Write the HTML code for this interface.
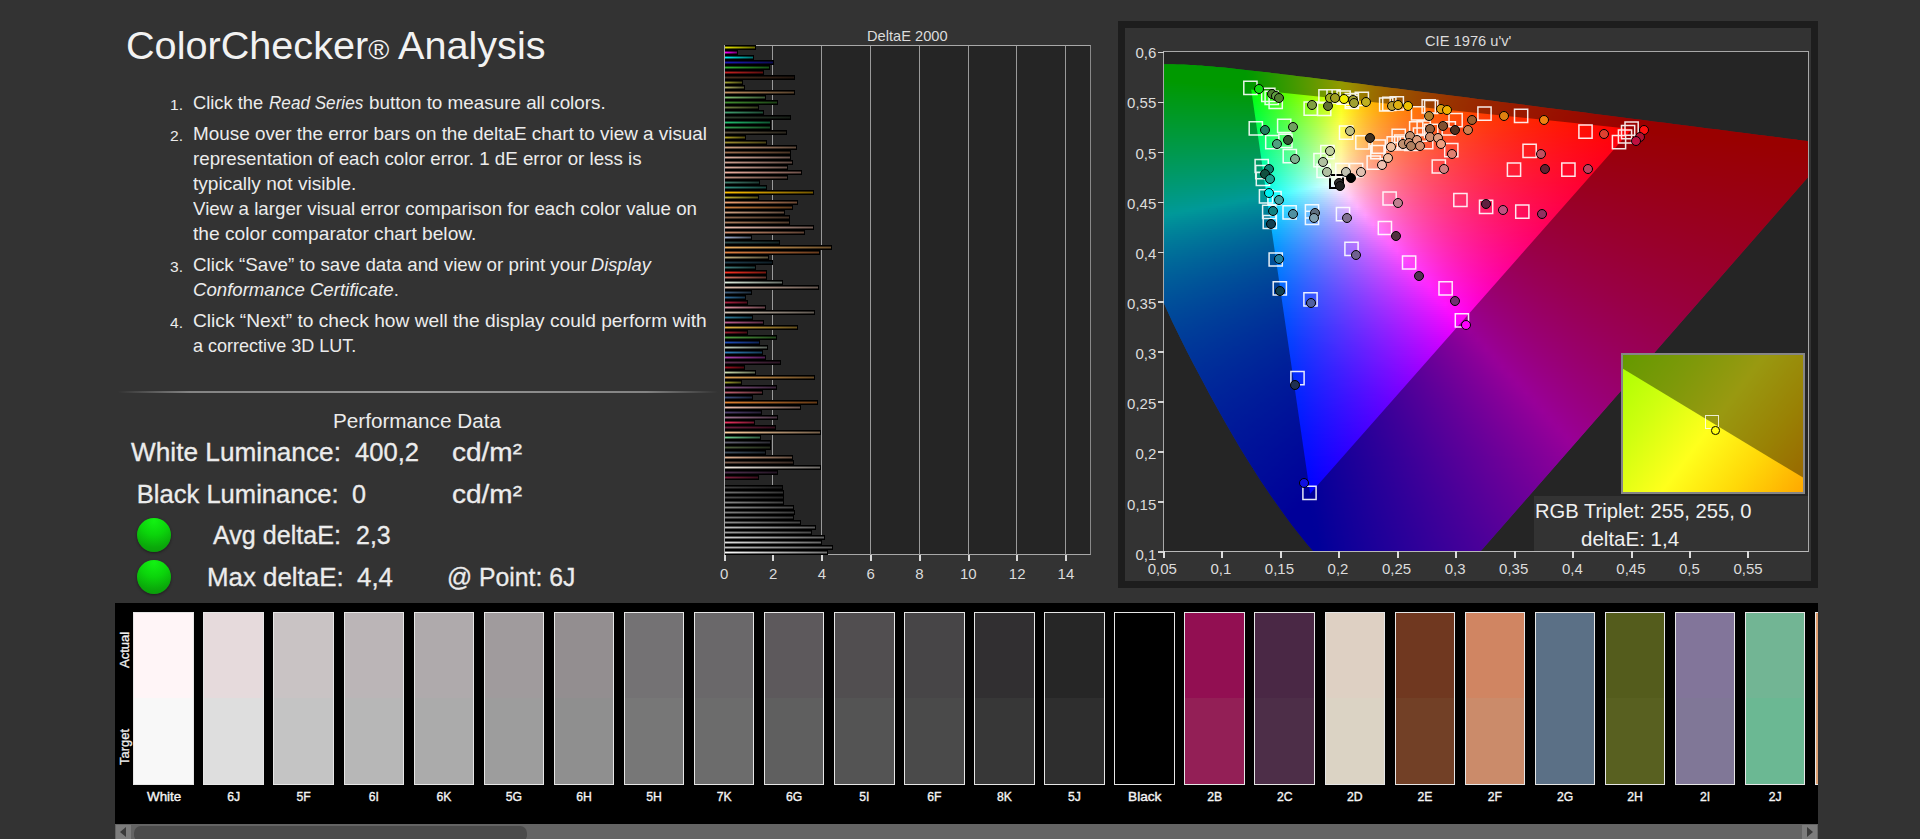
<!DOCTYPE html>
<html><head><meta charset="utf-8"><title>ColorChecker Analysis</title>
<style>
html,body{margin:0;padding:0}
body{width:1920px;height:839px;overflow:hidden;background:#333;position:relative;font-family:"Liberation Sans",sans-serif}
.t{position:absolute;white-space:nowrap;line-height:1;transform-origin:0 0}
.a{position:absolute}
small{font-size:72%}
.b{position:absolute;left:1px;height:5px;box-sizing:border-box;border-right:1px solid #000;background:linear-gradient(180deg,#000 18%,transparent 46%,transparent 54%,#000 84%),linear-gradient(90deg,transparent,rgba(0,0,0,.55)) currentColor}
.r{position:absolute;left:0;width:644px}
.sq{position:absolute;width:11px;height:11px;border:2px solid rgba(255,255,255,.82)}
.c{position:absolute;width:8px;height:8px;border:1px solid #000;border-radius:50%}
.sw{position:absolute;top:612px;width:58.6px;height:171px;border:1px solid #e6e6e6}
.sw i{position:absolute;left:0;top:0;width:100%;height:85px}
.g{position:absolute;top:0;width:1px;height:509px;background:#9a9a9a}
</style></head><body>

<div class="t" style="left:125.6px;top:26.9px;font-size:38.5px;color:#f2f2f2;transform:scaleX(1.0289);">ColorChecker<small>®</small> Analysis</div>
<div class="t" style="left:193.0px;top:94.8px;font-size:17.7px;color:#ececec;transform:scaleX(1.0343);">Click the</div>
<div class="t" style="left:268.6px;top:94.8px;font-size:17.7px;color:#ececec;transform:scaleX(0.9681);"><i>Read Series</i></div>
<div class="t" style="left:368.9px;top:94.8px;font-size:17.7px;color:#ececec;transform:scaleX(1.0654);">button to measure all colors.</div>
<div class="t" style="left:193.0px;top:125.8px;font-size:17.7px;color:#ececec;transform:scaleX(1.0671);">Mouse over the error bars on the deltaE chart to view a visual</div>
<div class="t" style="left:193.0px;top:150.8px;font-size:17.7px;color:#ececec;transform:scaleX(1.0585);">representation of each color error. 1 dE error or less is</div>
<div class="t" style="left:193.0px;top:175.8px;font-size:17.7px;color:#ececec;transform:scaleX(1.0786);">typically not visible.</div>
<div class="t" style="left:193.0px;top:200.8px;font-size:17.7px;color:#ececec;transform:scaleX(1.0600);">View a larger visual error comparison for each color value on</div>
<div class="t" style="left:193.0px;top:225.8px;font-size:17.7px;color:#ececec;transform:scaleX(1.0837);">the color comparator chart below.</div>
<div class="t" style="left:193.0px;top:256.8px;font-size:17.7px;color:#ececec;transform:scaleX(1.0629);">Click “Save” to save data and view or print your</div>
<div class="t" style="left:591.0px;top:256.8px;font-size:17.7px;color:#ececec;transform:scaleX(1.0304);"><i>Display</i></div>
<div class="t" style="left:193.0px;top:281.8px;font-size:17.7px;color:#ececec;transform:scaleX(1.0523);"><i>Conformance Certificate</i>.</div>
<div class="t" style="left:193.0px;top:312.8px;font-size:17.7px;color:#ececec;transform:scaleX(1.0841);">Click “Next” to check how well the display could perform with</div>
<div class="t" style="left:193.0px;top:337.8px;font-size:17.7px;color:#ececec;transform:scaleX(1.0191);">a corrective 3D LUT.</div>
<div class="t" style="left:169.8px;top:96.7px;font-size:15.5px;color:#ececec;transform:scaleX(1.0057);">1.</div>
<div class="t" style="left:169.8px;top:127.7px;font-size:15.5px;color:#ececec;transform:scaleX(1.0057);">2.</div>
<div class="t" style="left:169.8px;top:258.7px;font-size:15.5px;color:#ececec;transform:scaleX(1.0057);">3.</div>
<div class="t" style="left:169.8px;top:314.7px;font-size:15.5px;color:#ececec;transform:scaleX(1.0057);">4.</div>
<div class="a" style="left:118px;top:391px;width:600px;height:2px;background:linear-gradient(90deg,rgba(140,140,140,0),rgba(140,140,140,.9) 12%,rgba(150,150,150,1) 50%,rgba(140,140,140,.9) 88%,rgba(140,140,140,0))"></div>
<div class="t" style="left:332.7px;top:411.9px;font-size:19.6px;color:#ececec;transform:scaleX(1.0563);">Performance Data</div>
<div class="t" style="left:130.7px;top:440.1px;font-size:25.6px;color:#ececec;transform:scaleX(1.0249);-webkit-text-stroke:.3px #ececec;">White Luminance:</div>
<div class="t" style="left:355.0px;top:440.1px;font-size:25.6px;color:#ececec;-webkit-text-stroke:.3px #ececec;">400,2</div>
<div class="t" style="left:452.3px;top:440.1px;font-size:25.6px;color:#ececec;transform:scaleX(1.0937);-webkit-text-stroke:.3px #ececec;">cd/m²</div>
<div class="t" style="left:136.7px;top:481.8px;font-size:25.6px;color:#ececec;-webkit-text-stroke:.3px #ececec;">Black Luminance:</div>
<div class="t" style="left:351.7px;top:481.8px;font-size:25.6px;color:#ececec;transform:scaleX(0.9833);-webkit-text-stroke:.3px #ececec;">0</div>
<div class="t" style="left:452.3px;top:481.8px;font-size:25.6px;color:#ececec;transform:scaleX(1.0937);-webkit-text-stroke:.3px #ececec;">cd/m²</div>
<div class="t" style="left:212.7px;top:523.4px;font-size:25.6px;color:#ececec;transform:scaleX(0.9811);-webkit-text-stroke:.3px #ececec;">Avg deltaE:</div>
<div class="t" style="left:356.0px;top:523.4px;font-size:25.6px;color:#ececec;transform:scaleX(0.9751);-webkit-text-stroke:.3px #ececec;">2,3</div>
<div class="t" style="left:206.7px;top:565.1px;font-size:25.6px;color:#ececec;transform:scaleX(1.0105);-webkit-text-stroke:.3px #ececec;">Max deltaE:</div>
<div class="t" style="left:356.7px;top:565.1px;font-size:25.6px;color:#ececec;transform:scaleX(1.0116);-webkit-text-stroke:.3px #ececec;">4,4</div>
<div class="t" style="left:446.7px;top:565.1px;font-size:25.6px;color:#ececec;transform:scaleX(0.9667);-webkit-text-stroke:.3px #ececec;">@ Point: 6J</div>
<div class="a" style="left:136.7px;top:518.2px;width:34.3px;height:34.3px;border-radius:50%;background:radial-gradient(circle at 50% 8%,#12f212 0,#0bd40b 40%,#0aa80a 75%,#0a960a 100%);box-shadow:0 1px 3px rgba(0,0,0,.45)"></div>
<div class="a" style="left:136.7px;top:560.0px;width:34.3px;height:34.3px;border-radius:50%;background:radial-gradient(circle at 50% 8%,#12f212 0,#0bd40b 40%,#0aa80a 75%,#0a960a 100%);box-shadow:0 1px 3px rgba(0,0,0,.45)"></div>
<div class="t" style="left:867.4px;top:29.2px;font-size:14.6px;color:#dcdcdc;transform:scaleX(1.0030);">DeltaE 2000</div>
<div class="a" style="left:724px;top:45px;width:365px;height:508px;background:#252525;border:1px solid #a8a8a8;border-right-color:#8a8a8a"></div>
<div class="a" style="left:724px;top:46px;width:367px;height:509px">
<i class="g" style="left:48.3px"></i>
<i class="g" style="left:97.1px"></i>
<i class="g" style="left:145.9px"></i>
<i class="g" style="left:194.7px"></i>
<i class="g" style="left:243.5px"></i>
<i class="g" style="left:292.3px"></i>
<i class="g" style="left:341.1px"></i>
<i class="b" style="top:-1.2px;width:31.4px;color:#e6e600"></i>
<i class="b" style="top:3.8px;width:13.3px;color:#ff00ff"></i>
<i class="b" style="top:8.8px;width:29.2px;color:#00f0f0"></i>
<i class="b" style="top:13.8px;width:48.7px;color:#1a1ab8"></i>
<i class="b" style="top:18.8px;width:44.5px;color:#30b030"></i>
<i class="b" style="top:23.8px;width:38.7px;color:#c82020"></i>
<i class="b" style="top:28.8px;width:69.7px;color:#4a3020"></i>
<i class="b" style="top:33.8px;width:17.5px;color:#a0a030"></i>
<i class="b" style="top:38.8px;width:19.5px;color:#b0b060"></i>
<i class="b" style="top:43.8px;width:69.7px;color:#c09060"></i>
<i class="b" style="top:48.8px;width:40.5px;color:#80c070"></i>
<i class="b" style="top:53.8px;width:52.7px;color:#409030"></i>
<i class="b" style="top:58.8px;width:33.7px;color:#708040"></i>
<i class="b" style="top:63.8px;width:38.7px;color:#40a070"></i>
<i class="b" style="top:68.8px;width:65.7px;color:#304030"></i>
<i class="b" style="top:73.8px;width:45.5px;color:#20c070"></i>
<i class="b" style="top:78.8px;width:45.5px;color:#30a050"></i>
<i class="b" style="top:83.8px;width:61.7px;color:#605540"></i>
<i class="b" style="top:88.8px;width:20.5px;color:#b0a020"></i>
<i class="b" style="top:93.8px;width:41.7px;color:#a09030"></i>
<i class="b" style="top:98.8px;width:71.7px;color:#d0a080"></i>
<i class="b" style="top:103.8px;width:65.7px;color:#a07050"></i>
<i class="b" style="top:108.8px;width:65.7px;color:#e0b0a0"></i>
<i class="b" style="top:113.8px;width:67.7px;color:#d0a090"></i>
<i class="b" style="top:118.8px;width:62.7px;color:#e0b0a0"></i>
<i class="b" style="top:123.8px;width:76.7px;color:#f0b0a0"></i>
<i class="b" style="top:128.8px;width:62.7px;color:#c09080"></i>
<i class="b" style="top:133.8px;width:34.7px;color:#408070"></i>
<i class="b" style="top:138.8px;width:41.7px;color:#309080"></i>
<i class="b" style="top:143.8px;width:88.8px;color:#ffc000"></i>
<i class="b" style="top:148.8px;width:33.7px;color:#c0b030"></i>
<i class="b" style="top:153.8px;width:72.6px;color:#f0a070"></i>
<i class="b" style="top:158.8px;width:68.4px;color:#d08040"></i>
<i class="b" style="top:163.8px;width:59.7px;color:#d0a080"></i>
<i class="b" style="top:168.8px;width:64.6px;color:#906a50"></i>
<i class="b" style="top:173.8px;width:64.6px;color:#b08060"></i>
<i class="b" style="top:178.8px;width:88.8px;color:#f0c0b0"></i>
<i class="b" style="top:183.8px;width:79.6px;color:#d09070"></i>
<i class="b" style="top:188.8px;width:26.7px;color:#a0b0d0"></i>
<i class="b" style="top:193.8px;width:54.7px;color:#305050"></i>
<i class="b" style="top:198.8px;width:106.8px;color:#f0b060"></i>
<i class="b" style="top:203.8px;width:95.4px;color:#e08040"></i>
<i class="b" style="top:208.8px;width:43.7px;color:#c0b080"></i>
<i class="b" style="top:213.8px;width:47.5px;color:#204050"></i>
<i class="b" style="top:218.8px;width:30.5px;color:#408080"></i>
<i class="b" style="top:223.8px;width:41.7px;color:#ff3020"></i>
<i class="b" style="top:228.8px;width:41.7px;color:#d07060"></i>
<i class="b" style="top:233.8px;width:57.6px;color:#e0f0e0"></i>
<i class="b" style="top:238.8px;width:93.8px;color:#e0c0b0"></i>
<i class="b" style="top:243.8px;width:26.7px;color:#406080"></i>
<i class="b" style="top:248.8px;width:20.9px;color:#3070a0"></i>
<i class="b" style="top:253.8px;width:22.5px;color:#b02040"></i>
<i class="b" style="top:258.8px;width:40.5px;color:#e090a0"></i>
<i class="b" style="top:263.8px;width:89.8px;color:#d0c0b0"></i>
<i class="b" style="top:268.8px;width:27.5px;color:#3080a0"></i>
<i class="b" style="top:273.8px;width:38.7px;color:#c06090"></i>
<i class="b" style="top:278.8px;width:72.6px;color:#e0b040"></i>
<i class="b" style="top:283.8px;width:22.5px;color:#a02030"></i>
<i class="b" style="top:288.8px;width:51.7px;color:#50a040"></i>
<i class="b" style="top:293.8px;width:34.7px;color:#2050c0"></i>
<i class="b" style="top:298.8px;width:43.4px;color:#c0d0c0"></i>
<i class="b" style="top:303.8px;width:37.9px;color:#3080c0"></i>
<i class="b" style="top:308.8px;width:40.5px;color:#b040b0"></i>
<i class="b" style="top:313.8px;width:55.6px;color:#603050"></i>
<i class="b" style="top:318.8px;width:19.5px;color:#a01020"></i>
<i class="b" style="top:323.8px;width:31.4px;color:#d0e0b0"></i>
<i class="b" style="top:328.8px;width:89.8px;color:#e0a050"></i>
<i class="b" style="top:333.8px;width:16.7px;color:#a0a030"></i>
<i class="b" style="top:338.8px;width:51.7px;color:#805080"></i>
<i class="b" style="top:343.8px;width:37.5px;color:#c06070"></i>
<i class="b" style="top:348.8px;width:27.5px;color:#405080"></i>
<i class="b" style="top:353.8px;width:92.6px;color:#e08030"></i>
<i class="b" style="top:358.8px;width:75.6px;color:#f0c0b0"></i>
<i class="b" style="top:363.8px;width:36.7px;color:#504070"></i>
<i class="b" style="top:368.8px;width:52.6px;color:#a07090"></i>
<i class="b" style="top:373.8px;width:29.5px;color:#f03060"></i>
<i class="b" style="top:378.8px;width:50.6px;color:#702040"></i>
<i class="b" style="top:383.8px;width:95.6px;color:#ffd0a0"></i>
<i class="b" style="top:388.8px;width:35.9px;color:#70d090"></i>
<i class="b" style="top:393.8px;width:45.5px;color:#606070"></i>
<i class="b" style="top:398.8px;width:45.5px;color:#506040"></i>
<i class="b" style="top:403.8px;width:40.5px;color:#405060"></i>
<i class="b" style="top:408.8px;width:67.6px;color:#e0b090"></i>
<i class="b" style="top:413.8px;width:68.7px;color:#806050"></i>
<i class="b" style="top:418.8px;width:95.6px;color:#f0e8e0"></i>
<i class="b" style="top:423.8px;width:53.1px;color:#503050"></i>
<i class="b" style="top:428.8px;width:33.7px;color:#802040"></i>
<i class="b" style="top:438.8px;width:57.9px;color:#404040"></i>
<i class="b" style="top:443.8px;width:58.7px;color:#707070"></i>
<i class="b" style="top:448.8px;width:58.7px;color:#505050"></i>
<i class="b" style="top:453.8px;width:58.7px;color:#888888"></i>
<i class="b" style="top:458.8px;width:68.7px;color:#909090"></i>
<i class="b" style="top:463.8px;width:69.7px;color:#808080"></i>
<i class="b" style="top:468.8px;width:68.7px;color:#808080"></i>
<i class="b" style="top:473.8px;width:75.6px;color:#909090"></i>
<i class="b" style="top:478.8px;width:90.6px;color:#c0c0c0"></i>
<i class="b" style="top:483.8px;width:86.8px;color:#a0a0a0"></i>
<i class="b" style="top:488.8px;width:99.6px;color:#d0d0d0"></i>
<i class="b" style="top:493.8px;width:96.8px;color:#e0e0e0"></i>
<i class="b" style="top:498.8px;width:107.8px;color:#c0c0c0"></i>
<i class="b" style="top:503.8px;width:102.6px;color:#ffffff"></i>
</div>
<div class="a" style="left:723.5px;top:555px;width:2px;height:6px;background:#d8d8d8"></div>
<div class="t" style="left:720.1px;top:565.5px;font-size:15px;color:#dcdcdc;">0</div>
<div class="a" style="left:772.3px;top:555px;width:2px;height:6px;background:#d8d8d8"></div>
<div class="t" style="left:768.9px;top:565.5px;font-size:15px;color:#dcdcdc;">2</div>
<div class="a" style="left:821.1px;top:555px;width:2px;height:6px;background:#d8d8d8"></div>
<div class="t" style="left:817.7px;top:565.5px;font-size:15px;color:#dcdcdc;">4</div>
<div class="a" style="left:869.9px;top:555px;width:2px;height:6px;background:#d8d8d8"></div>
<div class="t" style="left:866.5px;top:565.5px;font-size:15px;color:#dcdcdc;">6</div>
<div class="a" style="left:918.7px;top:555px;width:2px;height:6px;background:#d8d8d8"></div>
<div class="t" style="left:915.3px;top:565.5px;font-size:15px;color:#dcdcdc;">8</div>
<div class="a" style="left:967.5px;top:555px;width:2px;height:6px;background:#d8d8d8"></div>
<div class="t" style="left:960.0px;top:565.5px;font-size:15px;color:#dcdcdc;">10</div>
<div class="a" style="left:1016.3px;top:555px;width:2px;height:6px;background:#d8d8d8"></div>
<div class="t" style="left:1008.8px;top:565.5px;font-size:15px;color:#dcdcdc;">12</div>
<div class="a" style="left:1065.1px;top:555px;width:2px;height:6px;background:#d8d8d8"></div>
<div class="t" style="left:1057.6px;top:565.5px;font-size:15px;color:#dcdcdc;">14</div>
<div class="a" style="left:1118px;top:21px;width:686px;height:553px;border:7px solid #1d1d1d;background:#333"></div>
<div class="t" style="left:1425.2px;top:33.1px;font-size:15px;color:#dcdcdc;transform:scaleX(0.9787);">CIE 1976 u'v'</div>
<div class="a" style="left:1163px;top:51px;width:644px;height:499px;background:#252525;border:1px solid #a8a8a8;border-bottom-color:#b8b8b8"></div>
<div class="a" style="left:1164px;top:52px;width:644px;height:499px;overflow:hidden"><div class="a" style="left:0;top:0;width:644px;height:499px;clip-path:polygon(244.3px 581.9px,239.9px 582.6px,237.8px 582.4px,236.4px 581.8px,234.8px 580.8px,233.5px 579.9px,232.1px 578.7px,230.6px 577.4px,228.7px 575.8px,226.6px 573.9px,225.4px 572.9px,224.2px 571.8px,222.9px 570.6px,221.6px 569.4px,220.1px 568.0px,218.7px 566.6px,217.1px 565.1px,215.5px 563.6px,213.8px 562.0px,212.0px 560.3px,210.1px 558.6px,208.1px 556.7px,206.0px 554.8px,203.8px 552.7px,201.4px 550.6px,199.0px 548.3px,196.4px 546.0px,193.7px 543.5px,190.9px 540.9px,188.0px 538.3px,185.0px 535.5px,181.9px 532.6px,178.7px 529.6px,175.3px 526.3px,171.8px 522.9px,168.1px 519.3px,164.3px 515.4px,160.4px 511.4px,156.4px 507.1px,152.3px 502.6px,148.0px 497.7px,143.4px 492.5px,138.6px 486.6px,133.4px 480.1px,127.9px 472.9px,122.0px 465.1px,115.9px 456.6px,109.5px 447.6px,103.0px 438.0px,96.2px 427.9px,89.4px 417.2px,82.3px 406.0px,75.1px 394.2px,67.8px 381.8px,60.3px 368.8px,52.9px 355.5px,45.3px 341.8px,37.9px 327.8px,30.4px 313.7px,23.0px 299.4px,15.8px 285.0px,8.7px 270.5px,2.0px 256.0px,-4.4px 241.7px,-10.3px 227.6px,-15.9px 213.8px,-21.1px 200.3px,-26.0px 187.1px,-30.6px 174.4px,-34.8px 162.2px,-38.6px 150.6px,-42.0px 139.5px,-45.1px 129.0px,-47.7px 119.2px,-50.0px 110.0px,-52.0px 101.4px,-53.6px 93.4px,-54.9px 85.8px,-55.9px 78.9px,-56.7px 72.4px,-57.1px 66.4px,-57.3px 60.9px,-57.3px 55.8px,-57.0px 51.0px,-56.5px 46.5px,-55.7px 42.4px,-54.7px 38.6px,-53.5px 35.1px,-52.1px 31.9px,-50.5px 29.0px,-48.7px 26.4px,-46.7px 24.1px,-44.6px 22.0px,-42.3px 20.2px,-39.9px 18.7px,-37.3px 17.4px,-34.7px 16.2px,-31.9px 15.3px,-29.1px 14.6px,-26.1px 14.0px,-23.1px 13.5px,-20.0px 13.1px,-16.9px 12.8px,-13.6px 12.6px,-10.4px 12.5px,-7.1px 12.3px,-3.7px 12.3px,-0.4px 12.2px,2.9px 12.2px,6.2px 12.2px,9.5px 12.3px,12.9px 12.4px,16.2px 12.5px,19.7px 12.6px,23.1px 12.7px,26.6px 12.9px,30.1px 13.1px,33.7px 13.4px,37.3px 13.6px,41.0px 13.9px,44.7px 14.2px,48.5px 14.5px,52.4px 14.9px,56.3px 15.2px,60.3px 15.6px,64.4px 16.0px,68.6px 16.5px,72.8px 16.9px,77.1px 17.4px,81.5px 17.9px,86.0px 18.4px,90.6px 18.9px,95.2px 19.4px,100.0px 20.0px,104.9px 20.6px,109.8px 21.2px,114.9px 21.8px,120.0px 22.4px,125.3px 23.0px,130.7px 23.7px,136.2px 24.4px,141.8px 25.1px,147.5px 25.8px,153.3px 26.5px,159.3px 27.3px,165.4px 28.0px,171.5px 28.8px,177.9px 29.6px,184.3px 30.4px,190.9px 31.3px,197.5px 32.1px,204.3px 33.0px,211.3px 33.9px,218.3px 34.8px,225.5px 35.7px,232.8px 36.6px,240.2px 37.6px,247.7px 38.5px,255.4px 39.5px,263.1px 40.5px,271.0px 41.5px,278.9px 42.5px,287.0px 43.5px,295.1px 44.6px,303.4px 45.6px,311.7px 46.7px,320.1px 47.8px,328.5px 48.8px,337.1px 49.9px,345.7px 51.0px,354.3px 52.1px,362.8px 53.2px,371.3px 54.3px,379.8px 55.4px,388.1px 56.5px,396.3px 57.5px,404.6px 58.6px,412.8px 59.6px,421.0px 60.6px,429.1px 61.7px,437.2px 62.7px,445.2px 63.7px,453.0px 64.7px,460.7px 65.7px,468.1px 66.7px,475.4px 67.6px,482.5px 68.5px,489.5px 69.4px,496.3px 70.2px,502.9px 71.1px,509.3px 71.9px,515.6px 72.7px,521.7px 73.5px,527.6px 74.2px,533.3px 75.0px,538.8px 75.7px,544.1px 76.4px,549.2px 77.0px,554.1px 77.6px,558.9px 78.2px,563.5px 78.8px,567.9px 79.4px,572.2px 79.9px,576.4px 80.5px,580.3px 81.0px,584.2px 81.5px,587.9px 81.9px,591.6px 82.4px,595.1px 82.9px,598.6px 83.3px,602.0px 83.7px,605.2px 84.2px,608.4px 84.6px,611.4px 84.9px,614.4px 85.3px,617.2px 85.7px,620.0px 86.0px,622.6px 86.4px,625.1px 86.7px,627.6px 87.0px,629.9px 87.3px,632.1px 87.6px,634.2px 87.9px,636.2px 88.1px,638.1px 88.4px,641.4px 88.8px,644.5px 89.2px,647.3px 89.5px,649.9px 89.9px,652.2px 90.2px,654.2px 90.4px,656.6px 90.7px,658.5px 91.0px,660.8px 91.3px,662.7px 91.5px,664.9px 91.8px,667.0px 92.1px,668.8px 92.3px,672.8px 92.4px)">
<i class="r" style="top:12px;height:2px;left:0.00px;width:48.30px;background:linear-gradient(90deg,#00ff00,#00ff00,#00ff00,#00ff00,#00ff00,#00ff00,#00ff00)"></i>
<i class="r" style="top:14px;height:2px;left:0.00px;width:64.40px;background:linear-gradient(90deg,#00ff00,#00ff00,#00ff00,#00ff00,#00ff00,#00ff00,#00ff00,#00ff00,#00ff00)"></i>
<i class="r" style="top:16px;height:2px;left:0.00px;width:88.55px;background:linear-gradient(90deg,#00ff00,#00ff00,#00ff00,#00ff00,#00ff00,#00ff00,#00ff00,#00ff00,#00ff00,#00ff00,#00ff00,#0cff00)"></i>
<i class="r" style="top:18px;height:2px;left:0.00px;width:104.65px;background:linear-gradient(90deg,#00ff00,#00ff00,#00ff00,#00ff00,#00ff00,#00ff00,#00ff00,#00ff00,#00ff00,#00ff00,#00ff00,#0cff00,#20ff00,#33ff00)"></i>
<i class="r" style="top:20px;height:2px;left:0.00px;width:120.75px;background:linear-gradient(90deg,#00ff00,#00ff00,#00ff00,#00ff00,#00ff00,#00ff00,#00ff00,#00ff00,#00ff00,#00ff00,#00ff00,#0bff00,#1fff00,#33ff00,#46ff00,#5aff00)"></i>
<i class="r" style="top:22px;height:2px;left:0.00px;width:136.85px;background:linear-gradient(90deg,#00ff00,#00ff00,#00ff00,#00ff00,#00ff00,#00ff00,#00ff00,#00ff00,#00ff00,#00ff00,#00ff00,#0aff00,#1fff00,#32ff00,#46ff00,#5aff00,#6eff00,#82ff00)"></i>
<i class="r" style="top:24px;height:2px;left:0.00px;width:152.95px;background:linear-gradient(90deg,#00ff00,#00ff00,#00ff00,#00ff00,#00ff00,#00ff00,#00ff00,#00ff00,#00ff00,#00ff00,#00ff00,#0aff00,#1eff00,#32ff00,#46ff00,#59ff00,#6eff00,#82ff00,#97ff00,#adff00)"></i>
<i class="r" style="top:26px;height:2px;left:0.00px;width:169.05px;background:linear-gradient(90deg,#00ff00,#00ff00,#00ff00,#00ff00,#00ff00,#00ff00,#00ff00,#00ff00,#00ff00,#00ff00,#00ff00,#09ff00,#1eff00,#31ff00,#45ff00,#59ff00,#6dff00,#82ff00,#97ff00,#adff00,#c3ff00,#dbff00)"></i>
<i class="r" style="top:28px;height:2px;left:0.00px;width:185.15px;background:linear-gradient(90deg,#00ff02,#00ff00,#00ff00,#00ff00,#00ff00,#00ff00,#00ff00,#00ff00,#00ff00,#00ff00,#00ff00,#08ff00,#1dff00,#31ff00,#45ff00,#59ff00,#6dff00,#82ff00,#97ff00,#adff00,#c4ff00,#dbff00,#f3ff00,#fff300)"></i>
<i class="r" style="top:30px;height:2px;left:0.00px;width:201.25px;background:linear-gradient(90deg,#00ff06,#00ff04,#00ff02,#00ff00,#00ff00,#00ff00,#00ff00,#00ff00,#00ff00,#00ff00,#00ff00,#07ff00,#1cff00,#30ff00,#44ff00,#58ff00,#6dff00,#82ff00,#97ff00,#adff00,#c4ff00,#dbff00,#f3ff00,#fff200,#ffdc00,#ffca00)"></i>
<i class="r" style="top:32px;height:2px;left:0.00px;width:217.35px;background:linear-gradient(90deg,#00ff0a,#00ff08,#00ff07,#00ff05,#00ff03,#00ff01,#00ff00,#00ff00,#00ff00,#00ff00,#00ff00,#06ff00,#1cff00,#30ff00,#44ff00,#58ff00,#6dff00,#82ff00,#97ff00,#adff00,#c4ff00,#dcff00,#f4ff00,#fff100,#ffdc00,#ffc900,#ffb900,#ffaa00)"></i>
<i class="r" style="top:34px;height:2px;left:0.00px;width:233.45px;background:linear-gradient(90deg,#00ff0d,#00ff0c,#00ff0b,#00ff09,#00ff08,#00ff06,#00ff04,#00ff02,#00ff00,#00ff00,#00ff00,#06ff00,#1bff00,#2fff00,#44ff00,#58ff00,#6cff00,#81ff00,#97ff00,#adff00,#c4ff00,#dcff00,#f4ff00,#fff100,#ffdb00,#ffc900,#ffb800,#ffaa00,#ff9d00,#ff9100)"></i>
<i class="r" style="top:36px;height:2px;left:0.00px;width:249.55px;background:linear-gradient(90deg,#00ff11,#00ff10,#00ff0e,#00ff0d,#00ff0c,#00ff0a,#00ff08,#00ff07,#00ff05,#00ff03,#00ff01,#05ff00,#1bff00,#2fff00,#43ff00,#58ff00,#6cff00,#81ff00,#97ff00,#adff00,#c4ff00,#dcff00,#f5ff00,#fff000,#ffdb00,#ffc800,#ffb800,#ffa900,#ff9c00,#ff9100,#ff8600,#ff7c00)"></i>
<i class="r" style="top:38px;height:2px;left:0.00px;width:265.65px;background:linear-gradient(90deg,#00ff15,#00ff13,#00ff12,#00ff11,#00ff10,#00ff0e,#00ff0d,#00ff0b,#00ff0a,#00ff08,#00ff06,#04ff04,#1aff02,#2eff00,#43ff00,#57ff00,#6cff00,#81ff00,#97ff00,#adff00,#c5ff00,#ddff00,#f5ff00,#fff000,#ffda00,#ffc700,#ffb700,#ffa800,#ff9c00,#ff9000,#ff8500,#ff7c00,#ff7300,#ff6b00)"></i>
<i class="r" style="top:40px;height:2px;left:0.00px;width:281.75px;background:linear-gradient(90deg,#00ff18,#00ff17,#00ff16,#00ff15,#00ff14,#00ff12,#00ff11,#00ff0f,#00ff0e,#00ff0c,#00ff0b,#03ff09,#19ff07,#2eff05,#42ff03,#57ff00,#6cff00,#81ff00,#97ff00,#aeff00,#c5ff00,#ddff00,#f6ff00,#ffef00,#ffda00,#ffc700,#ffb600,#ffa800,#ff9b00,#ff8f00,#ff8500,#ff7b00,#ff7300,#ff6b00,#ff6300,#ff5d00)"></i>
<i class="r" style="top:42px;height:2px;left:0.00px;width:297.85px;background:linear-gradient(90deg,#00ff1c,#00ff1b,#00ff1a,#00ff19,#00ff17,#00ff16,#00ff15,#00ff14,#00ff12,#00ff11,#00ff0f,#02ff0e,#19ff0c,#2dff0a,#42ff08,#57ff06,#6cff04,#81ff01,#97ff00,#aeff00,#c5ff00,#ddff00,#f6ff00,#ffef00,#ffd900,#ffc600,#ffb600,#ffa700,#ff9a00,#ff8f00,#ff8400,#ff7b00,#ff7200,#ff6a00,#ff6300,#ff5c00,#ff5600,#ff5000)"></i>
<i class="r" style="top:44px;height:2px;left:0.00px;width:313.95px;background:linear-gradient(90deg,#00ff1f,#00ff1e,#00ff1d,#00ff1c,#00ff1b,#00ff1a,#00ff19,#00ff18,#00ff16,#00ff15,#00ff14,#01ff12,#18ff10,#2dff0f,#41ff0d,#56ff0b,#6bff09,#81ff07,#97ff05,#aeff03,#c5ff00,#deff00,#f7ff00,#ffee00,#ffd800,#ffc600,#ffb500,#ffa700,#ff9a00,#ff8e00,#ff8400,#ff7a00,#ff7100,#ff6a00,#ff6200,#ff5b00,#ff5500,#ff4f00,#ff4a00,#ff4500)"></i>
<i class="r" style="top:46px;height:2px;left:0.00px;width:330.05px;background:linear-gradient(90deg,#00ff23,#00ff22,#00ff21,#00ff20,#00ff1f,#00ff1e,#00ff1d,#00ff1c,#00ff1a,#00ff19,#00ff18,#00ff16,#17ff15,#2cff14,#41ff12,#56ff10,#6bff0f,#81ff0d,#97ff0b,#aeff09,#c5ff06,#deff04,#f7ff01,#ffee00,#ffd800,#ffc500,#ffb500,#ffa600,#ff9900,#ff8e00,#ff8300,#ff7a00,#ff7100,#ff6900,#ff6200,#ff5b00,#ff5500,#ff4f00,#ff4900,#ff4400,#ff3f00,#ff3b00)"></i>
<i class="r" style="top:48px;height:2px;left:0.00px;width:338.10px;background:linear-gradient(90deg,#00ff26,#00ff25,#00ff25,#00ff24,#00ff23,#00ff22,#00ff21,#00ff20,#00ff1e,#00ff1d,#00ff1c,#00ff1b,#17ff19,#2cff18,#41ff17,#56ff15,#6bff14,#81ff12,#97ff10,#aeff0e,#c6ff0c,#deff0a,#f8ff08,#ffed05,#ffd702,#ffc400,#ffb400,#ffa500,#ff9900,#ff8d00,#ff8200,#ff7900,#ff7000,#ff6800,#ff6100,#ff5a00,#ff5400,#ff4e00,#ff4900,#ff4400,#ff3f00,#ff3a00,#ff3600)"></i>
<i class="r" style="top:50px;height:2px;left:0.00px;width:354.20px;background:linear-gradient(90deg,#00ff2a,#00ff29,#00ff28,#00ff27,#00ff26,#00ff25,#00ff25,#00ff24,#00ff22,#00ff21,#00ff20,#00ff1f,#16ff1e,#2bff1d,#40ff1b,#55ff1a,#6bff18,#80ff17,#97ff15,#aeff14,#c6ff12,#dfff10,#f8ff0e,#ffec0b,#ffd708,#ffc405,#ffb303,#ffa500,#ff9800,#ff8c00,#ff8200,#ff7800,#ff7000,#ff6800,#ff6000,#ff5a00,#ff5300,#ff4e00,#ff4800,#ff4300,#ff3e00,#ff3a00,#ff3600,#ff3200,#ff2e00)"></i>
<i class="r" style="top:52px;height:2px;left:0.00px;width:370.30px;background:linear-gradient(90deg,#00ff2d,#00ff2c,#00ff2c,#00ff2b,#00ff2a,#00ff29,#00ff28,#00ff27,#00ff27,#00ff26,#00ff25,#00ff23,#15ff22,#2bff21,#40ff20,#55ff1f,#6aff1d,#80ff1c,#97ff1a,#aeff19,#c6ff17,#dfff15,#f9ff14,#ffec10,#ffd60d,#ffc30a,#ffb308,#ffa405,#ff9703,#ff8c01,#ff8100,#ff7800,#ff6f00,#ff6700,#ff6000,#ff5900,#ff5300,#ff4d00,#ff4800,#ff4300,#ff3e00,#ff3900,#ff3500,#ff3100,#ff2d00,#ff2a00,#ff2600)"></i>
<i class="r" style="top:54px;height:2px;left:0.00px;width:386.40px;background:linear-gradient(90deg,#00ff31,#00ff30,#00ff2f,#00ff2f,#00ff2e,#00ff2d,#00ff2c,#00ff2b,#00ff2b,#00ff2a,#00ff29,#00ff28,#15ff27,#2aff26,#3fff25,#55ff23,#6aff22,#80ff21,#97ff1f,#aeff1e,#c6ff1d,#dfff1b,#f9ff19,#ffeb16,#ffd512,#ffc30f,#ffb20c,#ffa40a,#ff9707,#ff8b05,#ff8103,#ff7702,#ff6f00,#ff6700,#ff5f00,#ff5900,#ff5200,#ff4d00,#ff4700,#ff4200,#ff3d00,#ff3900,#ff3500,#ff3100,#ff2d00,#ff2900,#ff2600,#ff2300,#ff2000)"></i>
<i class="r" style="top:56px;height:2px;left:0.00px;width:402.50px;background:linear-gradient(90deg,#00ff34,#00ff33,#00ff33,#00ff32,#00ff31,#00ff31,#00ff30,#00ff2f,#00ff2f,#00ff2e,#00ff2d,#00ff2c,#14ff2b,#2aff2a,#3fff29,#54ff28,#6aff27,#80ff26,#97ff25,#aeff23,#c7ff22,#e0ff20,#faff1f,#ffeb1b,#ffd517,#ffc214,#ffb111,#ffa30e,#ff960c,#ff8a09,#ff8007,#ff7705,#ff6e04,#ff6602,#ff5f00,#ff5800,#ff5200,#ff4c00,#ff4700,#ff4200,#ff3d00,#ff3800,#ff3400,#ff3000,#ff2c00,#ff2900,#ff2500,#ff2200,#ff1f00,#ff1c00,#ff1900)"></i>
<i class="r" style="top:58px;height:2px;left:0.00px;width:418.60px;background:linear-gradient(90deg,#00ff37,#00ff37,#00ff36,#00ff36,#00ff35,#00ff35,#00ff34,#00ff33,#00ff33,#00ff32,#00ff31,#00ff30,#13ff2f,#29ff2f,#3eff2e,#54ff2d,#6aff2c,#80ff2b,#97ff2a,#aeff28,#c7ff27,#e0ff26,#faff25,#ffea20,#ffd41c,#ffc118,#ffb115,#ffa212,#ff950f,#ff8a0d,#ff7f0b,#ff7609,#ff6d07,#ff6506,#ff5e04,#ff5702,#ff5101,#ff4c00,#ff4600,#ff4100,#ff3c00,#ff3800,#ff3400,#ff3000,#ff2c00,#ff2800,#ff2500,#ff2200,#ff1f00,#ff1c00,#ff1900,#ff1600,#ff1300)"></i>
<i class="r" style="top:60px;height:2px;left:0.00px;width:434.70px;background:linear-gradient(90deg,#00ff3b,#00ff3a,#00ff3a,#00ff39,#00ff39,#00ff38,#00ff38,#00ff37,#00ff37,#00ff36,#00ff35,#00ff34,#12ff34,#28ff33,#3eff32,#53ff31,#69ff30,#80ff30,#97ff2f,#afff2e,#c7ff2c,#e1ff2b,#fbff2a,#ffe925,#ffd421,#ffc11d,#ffb019,#ffa216,#ff9513,#ff8911,#ff7f0f,#ff750d,#ff6d0b,#ff6509,#ff5e07,#ff5706,#ff5104,#ff4b03,#ff4601,#ff4100,#ff3c00,#ff3700,#ff3300,#ff2f00,#ff2b00,#ff2800,#ff2400,#ff2100,#ff1e00,#ff1b00,#ff1800,#ff1600,#ff1300,#ff1000,#ff0e00)"></i>
<i class="r" style="top:62px;height:2px;left:0.00px;width:450.80px;background:linear-gradient(90deg,#00ff3e,#00ff3e,#00ff3e,#00ff3d,#00ff3d,#00ff3c,#00ff3c,#00ff3b,#00ff3b,#00ff3a,#00ff39,#00ff39,#12ff38,#28ff37,#3dff37,#53ff36,#69ff35,#80ff34,#97ff34,#afff33,#c7ff32,#e1ff31,#fcff30,#ffe92a,#ffd326,#ffc021,#ffb01d,#ffa11a,#ff9417,#ff8915,#ff7e12,#ff7510,#ff6c0e,#ff640c,#ff5d0a,#ff5609,#ff5007,#ff4a06,#ff4504,#ff4003,#ff3b02,#ff3701,#ff3300,#ff2f00,#ff2b00,#ff2700,#ff2400,#ff2100,#ff1e00,#ff1b00,#ff1800,#ff1500,#ff1300,#ff1000,#ff0e00,#ff0b00,#ff0900)"></i>
<i class="r" style="top:64px;height:2px;left:0.00px;width:466.90px;background:linear-gradient(90deg,#00ff42,#00ff41,#00ff41,#00ff41,#00ff40,#00ff40,#00ff3f,#00ff3f,#00ff3f,#00ff3e,#00ff3e,#00ff3d,#11ff3c,#27ff3c,#3dff3b,#53ff3b,#69ff3a,#80ff39,#97ff39,#afff38,#c8ff37,#e1ff36,#fcff35,#ffe830,#ffd22a,#ffbf26,#ffaf22,#ffa01e,#ff941b,#ff8818,#ff7e16,#ff7413,#ff6c11,#ff640f,#ff5c0d,#ff560c,#ff500a,#ff4a09,#ff4407,#ff3f06,#ff3b05,#ff3603,#ff3202,#ff2e01,#ff2a00,#ff2700,#ff2400,#ff2000,#ff1d00,#ff1a00,#ff1700,#ff1500,#ff1200,#ff1000,#ff0d00,#ff0b00,#ff0800,#ff0600,#ff0400)"></i>
<i class="r" style="top:66px;height:2px;left:0.00px;width:483.00px;background:linear-gradient(90deg,#00ff45,#00ff45,#00ff45,#00ff44,#00ff44,#00ff44,#00ff43,#00ff43,#00ff43,#00ff42,#00ff42,#00ff41,#10ff41,#27ff40,#3cff40,#52ff3f,#69ff3f,#7fff3e,#97ff3e,#afff3d,#c8ff3c,#e2ff3b,#fdff3b,#ffe835,#ffd22f,#ffbf2a,#ffae26,#ffa022,#ff931f,#ff871c,#ff7d19,#ff7416,#ff6b14,#ff6312,#ff5c10,#ff550e,#ff4f0d,#ff490b,#ff440a,#ff3f08,#ff3a07,#ff3606,#ff3205,#ff2e04,#ff2a02,#ff2601,#ff2300,#ff2000,#ff1d00,#ff1a00,#ff1700,#ff1400,#ff1200,#ff0f00,#ff0d00,#ff0a00,#ff0800,#ff0600,#ff0300,#ff0100,#ff0000)"></i>
<i class="r" style="top:68px;height:2px;left:0.00px;width:499.10px;background:linear-gradient(90deg,#00ff49,#00ff49,#00ff48,#00ff48,#00ff48,#00ff47,#00ff47,#00ff47,#00ff47,#00ff46,#00ff46,#00ff46,#0fff45,#26ff45,#3cff44,#52ff44,#68ff43,#7fff43,#97ff43,#afff42,#c8ff41,#e2ff41,#fdff40,#ffe73a,#ffd134,#ffbe2e,#ffae2a,#ff9f26,#ff9222,#ff871f,#ff7c1c,#ff731a,#ff6a17,#ff6215,#ff5b13,#ff5511,#ff4e0f,#ff490e,#ff430c,#ff3e0b,#ff3a0a,#ff3508,#ff3107,#ff2d06,#ff2905,#ff2604,#ff2303,#ff1f02,#ff1c01,#ff1900,#ff1600,#ff1400,#ff1100,#ff0f00,#ff0c00,#ff0a00,#ff0700,#ff0500,#ff0300,#ff0000,#ff0000,#ff0000,#ff0000)"></i>
<i class="r" style="top:70px;height:2px;left:0.00px;width:515.20px;background:linear-gradient(90deg,#00ff4c,#00ff4c,#00ff4c,#00ff4c,#00ff4b,#00ff4b,#00ff4b,#00ff4b,#00ff4b,#00ff4a,#00ff4a,#00ff4a,#0fff4a,#25ff49,#3bff49,#52ff49,#68ff48,#7fff48,#97ff48,#afff47,#c8ff47,#e3ff46,#feff46,#ffe63f,#ffd038,#ffbd33,#ffad2e,#ff9e2a,#ff9226,#ff8623,#ff7c20,#ff721d,#ff6a1a,#ff6218,#ff5b16,#ff5414,#ff4e12,#ff4810,#ff430f,#ff3e0d,#ff390c,#ff350b,#ff3109,#ff2d08,#ff2907,#ff2506,#ff2205,#ff1f04,#ff1c03,#ff1902,#ff1601,#ff1300,#ff1100,#ff0e00,#ff0c00,#ff0900,#ff0700,#ff0500,#ff0200,#ff0000,#ff0000,#ff0000,#ff0000,#ff0000,#ff0000)"></i>
<i class="r" style="top:72px;height:2px;left:0.00px;width:531.30px;background:linear-gradient(90deg,#00ff50,#00ff50,#00ff4f,#00ff4f,#00ff4f,#00ff4f,#00ff4f,#00ff4f,#00ff4f,#00ff4e,#00ff4e,#00ff4e,#0eff4e,#25ff4e,#3bff4d,#51ff4d,#68ff4d,#7fff4d,#97ff4d,#afff4c,#c9ff4c,#e3ff4c,#feff4b,#ffe644,#ffd03d,#ffbd37,#ffac32,#ff9e2e,#ff912a,#ff8526,#ff7b23,#ff7220,#ff691d,#ff611b,#ff5a19,#ff5317,#ff4d15,#ff4813,#ff4211,#ff3d10,#ff390e,#ff340d,#ff300c,#ff2c0a,#ff2809,#ff2508,#ff2207,#ff1e06,#ff1b05,#ff1804,#ff1603,#ff1302,#ff1001,#ff0e00,#ff0b00,#ff0900,#ff0600,#ff0400,#ff0200,#ff0000,#ff0000,#ff0000,#ff0000,#ff0000,#ff0000,#ff0000,#ff0000)"></i>
<i class="r" style="top:74px;height:2px;left:0.00px;width:547.40px;background:linear-gradient(90deg,#00ff53,#00ff53,#00ff53,#00ff53,#00ff53,#00ff53,#00ff53,#00ff53,#00ff53,#00ff53,#00ff52,#00ff52,#0dff52,#24ff52,#3aff52,#51ff52,#68ff52,#7fff52,#97ff52,#afff51,#c9ff51,#e3ff51,#ffff51,#ffe549,#ffcf42,#ffbc3b,#ffac36,#ff9d31,#ff902d,#ff8529,#ff7a26,#ff7123,#ff6820,#ff611e,#ff5a1b,#ff5319,#ff4d17,#ff4715,#ff4214,#ff3d12,#ff3811,#ff340f,#ff300e,#ff2c0d,#ff280b,#ff240a,#ff2109,#ff1e08,#ff1b07,#ff1806,#ff1505,#ff1204,#ff1003,#ff0d02,#ff0b02,#ff0801,#ff0600,#ff0400,#ff0100,#ff0000,#ff0000,#ff0000,#ff0000,#ff0000,#ff0000,#ff0000,#ff0000,#ff0000,#ff0000)"></i>
<i class="r" style="top:76px;height:2px;left:0.00px;width:563.50px;background:linear-gradient(90deg,#00ff57,#00ff57,#00ff57,#00ff57,#00ff57,#00ff57,#00ff57,#00ff57,#00ff57,#00ff57,#00ff57,#00ff57,#0cff57,#23ff57,#3aff57,#50ff57,#67ff57,#7fff57,#97ff57,#afff57,#c9ff57,#e4ff57,#fffe56,#ffe44e,#ffce46,#ffbc40,#ffab3a,#ff9d35,#ff9031,#ff842d,#ff7a29,#ff7026,#ff6823,#ff6021,#ff591e,#ff521c,#ff4c1a,#ff4618,#ff4116,#ff3c14,#ff3813,#ff3311,#ff2f10,#ff2b0f,#ff270d,#ff240c,#ff210b,#ff1d0a,#ff1a09,#ff1708,#ff1507,#ff1206,#ff0f05,#ff0d04,#ff0a03,#ff0803,#ff0502,#ff0301,#ff0000,#ff0000,#ff0000,#ff0000,#ff0000,#ff0000,#ff0000,#ff0000,#ff0000,#ff0000,#ff0000,#ff0000,#ff0000)"></i>
<i class="r" style="top:78px;height:2px;left:0.00px;width:579.60px;background:linear-gradient(90deg,#00ff5a,#00ff5a,#00ff5a,#00ff5a,#00ff5a,#00ff5b,#00ff5b,#00ff5b,#00ff5b,#00ff5b,#00ff5b,#00ff5b,#0bff5b,#23ff5b,#39ff5b,#50ff5b,#67ff5c,#7eff5c,#97ff5c,#b0ff5c,#c9ff5c,#e4ff5c,#fffe5c,#ffe453,#ffce4b,#ffbb44,#ffaa3e,#ff9c39,#ff8f34,#ff8330,#ff792d,#ff7029,#ff6726,#ff5f23,#ff5821,#ff521f,#ff4c1c,#ff461a,#ff4119,#ff3c17,#ff3715,#ff3314,#ff2f12,#ff2b11,#ff270f,#ff230e,#ff200d,#ff1d0c,#ff1a0b,#ff170a,#ff1409,#ff1108,#ff0f07,#ff0c06,#ff0a05,#ff0704,#ff0504,#ff0203,#ff0002,#ff0001,#ff0000,#ff0000,#ff0000,#ff0000,#ff0000,#ff0000,#ff0000,#ff0000,#ff0000,#ff0000,#ff0000,#ff0000,#ff0000)"></i>
<i class="r" style="top:80px;height:2px;left:0.00px;width:595.70px;background:linear-gradient(90deg,#00ff5e,#00ff5e,#00ff5e,#00ff5e,#00ff5e,#00ff5e,#00ff5f,#00ff5f,#00ff5f,#00ff5f,#00ff5f,#00ff5f,#0bff60,#22ff60,#39ff60,#50ff60,#67ff60,#7eff61,#97ff61,#b0ff61,#caff61,#e5ff62,#fffd61,#ffe358,#ffcd4f,#ffba48,#ffaa42,#ff9b3d,#ff8e38,#ff8334,#ff7830,#ff6f2c,#ff6729,#ff5f26,#ff5824,#ff5121,#ff4b1f,#ff451d,#ff401b,#ff3b19,#ff3617,#ff3216,#ff2e14,#ff2a13,#ff2611,#ff2310,#ff200f,#ff1c0e,#ff190d,#ff160c,#ff140b,#ff110a,#ff0e09,#ff0c08,#ff0907,#ff0706,#ff0405,#ff0204,#ff0004,#ff0003,#ff0002,#ff0001,#ff0001,#ff0000,#ff0000,#ff0000,#ff0000,#ff0000,#ff0000,#ff0000,#ff0000,#ff0000,#ff0000,#ff0000,#ff0000)"></i>
<i class="r" style="top:82px;height:2px;left:0.00px;width:611.80px;background:linear-gradient(90deg,#00ff61,#00ff61,#00ff62,#00ff62,#00ff62,#00ff62,#00ff62,#00ff63,#00ff63,#00ff63,#00ff63,#00ff64,#0aff64,#21ff64,#38ff65,#4fff65,#66ff65,#7eff66,#97ff66,#b0ff66,#caff67,#e5ff67,#fffd67,#ffe35d,#ffcc54,#ffba4d,#ffa946,#ff9b41,#ff8e3c,#ff8237,#ff7833,#ff6f2f,#ff662c,#ff5e29,#ff5726,#ff5124,#ff4a21,#ff451f,#ff3f1d,#ff3b1b,#ff361a,#ff3218,#ff2d16,#ff2a15,#ff2613,#ff2212,#ff1f11,#ff1c10,#ff190f,#ff160d,#ff130c,#ff100b,#ff0e0a,#ff0b09,#ff0909,#ff0608,#ff0407,#ff0106,#ff0005,#ff0005,#ff0004,#ff0003,#ff0002,#ff0002,#ff0001,#ff0000,#ff0000,#ff0000,#ff0000,#ff0000,#ff0000,#ff0000,#ff0000,#ff0000,#ff0000,#ff0000,#ff0000)"></i>
<i class="r" style="top:84px;height:2px;left:0.00px;width:619.85px;background:linear-gradient(90deg,#00ff65,#00ff65,#00ff65,#00ff66,#00ff66,#00ff66,#00ff66,#00ff67,#00ff67,#00ff67,#00ff68,#00ff68,#09ff69,#21ff69,#38ff69,#4fff6a,#66ff6a,#7eff6b,#97ff6b,#b0ff6c,#caff6c,#e6ff6d,#fffc6c,#ffe262,#ffcc59,#ffb951,#ffa84a,#ff9a44,#ff8d3f,#ff823a,#ff7736,#ff6e32,#ff652f,#ff5e2c,#ff5629,#ff5026,#ff4a24,#ff4422,#ff3f20,#ff3a1e,#ff351c,#ff311a,#ff2d18,#ff2917,#ff2515,#ff2214,#ff1f13,#ff1b11,#ff1810,#ff150f,#ff130e,#ff100d,#ff0d0c,#ff0b0b,#ff080a,#ff0609,#ff0309,#ff0108,#ff0007,#ff0006,#ff0005,#ff0005,#ff0004,#ff0003,#ff0003,#ff0002,#ff0001,#ff0001,#ff0000,#ff0000,#ff0000,#ff0000,#ff0000,#ff0000,#ff0000,#ff0000,#ff0000,#ff0000)"></i>
<i class="r" style="top:86px;height:2px;left:0.00px;width:635.95px;background:linear-gradient(90deg,#00ff68,#00ff69,#00ff69,#00ff69,#00ff6a,#00ff6a,#00ff6a,#00ff6b,#00ff6b,#00ff6c,#00ff6c,#00ff6d,#08ff6d,#20ff6e,#37ff6e,#4eff6f,#66ff6f,#7eff70,#97ff70,#b0ff71,#cbff72,#e6ff72,#fffb72,#ffe167,#ffcb5d,#ffb855,#ffa84e,#ff9948,#ff8c43,#ff813e,#ff7739,#ff6d36,#ff6532,#ff5d2f,#ff562c,#ff4f29,#ff4926,#ff4424,#ff3e22,#ff3920,#ff351e,#ff301c,#ff2c1a,#ff2919,#ff2517,#ff2116,#ff1e15,#ff1b13,#ff1812,#ff1511,#ff1210,#ff0f0f,#ff0d0e,#ff0a0d,#ff080c,#ff050b,#ff030a,#ff0009,#ff0008,#ff0008,#ff0007,#ff0006,#ff0005,#ff0005,#ff0004,#ff0003,#ff0003,#ff0002,#ff0001,#ff0001,#ff0000,#ff0000,#ff0000,#ff0000,#ff0000,#ff0000,#ff0000,#ff0000,#ff0000,#ff0000)"></i>
<i class="r" style="top:88px;height:2px;left:0.00px;width:644.00px;background:linear-gradient(90deg,#00ff6c,#00ff6c,#00ff6d,#00ff6d,#00ff6e,#00ff6e,#00ff6e,#00ff6f,#00ff6f,#00ff70,#00ff70,#00ff71,#07ff72,#1fff72,#37ff73,#4eff73,#66ff74,#7eff75,#97ff76,#b0ff76,#cbff77,#e6ff78,#fffb77,#ffe16c,#ffca62,#ffb759,#ffa752,#ff984c,#ff8c46,#ff8041,#ff763d,#ff6d39,#ff6435,#ff5c31,#ff552e,#ff4f2c,#ff4929,#ff4326,#ff3e24,#ff3922,#ff3420,#ff301e,#ff2c1d,#ff281b,#ff2419,#ff2118,#ff1e16,#ff1a15,#ff1714,#ff1413,#ff1212,#ff0f10,#ff0c0f,#ff0a0e,#ff070d,#ff050d,#ff020c,#ff000b,#ff000a,#ff0009,#ff0008,#ff0008,#ff0007,#ff0006,#ff0005,#ff0005,#ff0004,#ff0004,#ff0003,#ff0002,#ff0002,#ff0001,#ff0000,#ff0000,#ff0000,#ff0000,#ff0000,#ff0000,#ff0000,#ff0000,#ff0000)"></i>
<i class="r" style="top:90px;height:2px;left:0.00px;width:644.00px;background:linear-gradient(90deg,#00ff70,#00ff70,#00ff70,#00ff71,#00ff71,#00ff72,#00ff72,#00ff73,#00ff74,#00ff74,#00ff75,#00ff75,#06ff76,#1fff77,#36ff78,#4eff78,#65ff79,#7eff7a,#97ff7b,#b0ff7c,#cbff7d,#e7ff7e,#fffa7d,#ffe071,#ffca66,#ffb75e,#ffa656,#ff9850,#ff8b4a,#ff8044,#ff7540,#ff6c3c,#ff6338,#ff5c34,#ff5531,#ff4e2e,#ff482b,#ff4229,#ff3d27,#ff3824,#ff3422,#ff2f20,#ff2b1f,#ff271d,#ff241b,#ff201a,#ff1d18,#ff1a17,#ff1716,#ff1414,#ff1113,#ff0e12,#ff0c11,#ff0910,#ff070f,#ff040e,#ff020d,#ff000c,#ff000b,#ff000b,#ff000a,#ff0009,#ff0008,#ff0008,#ff0007,#ff0006,#ff0006,#ff0005,#ff0004,#ff0004,#ff0003,#ff0002,#ff0002,#ff0001,#ff0001,#ff0000,#ff0000,#ff0000,#ff0000,#ff0000,#ff0000)"></i>
<i class="r" style="top:92px;height:2px;left:0.00px;width:644.00px;background:linear-gradient(90deg,#00ff73,#00ff74,#00ff74,#00ff75,#00ff75,#00ff76,#00ff76,#00ff77,#00ff78,#00ff78,#00ff79,#00ff7a,#05ff7b,#1eff7b,#36ff7c,#4dff7d,#65ff7e,#7dff7f,#96ff80,#b0ff81,#cbff82,#e7ff84,#fff982,#ffdf76,#ffc96b,#ffb662,#ffa65a,#ff9753,#ff8a4d,#ff7f48,#ff7543,#ff6b3f,#ff633b,#ff5b37,#ff5434,#ff4e31,#ff472e,#ff422b,#ff3d29,#ff3827,#ff3324,#ff2f22,#ff2b21,#ff271f,#ff231d,#ff201c,#ff1d1a,#ff1919,#ff1617,#ff1316,#ff1115,#ff0e14,#ff0b13,#ff0912,#ff0611,#ff0410,#ff010f,#ff000e,#ff000d,#ff000c,#ff000b,#ff000a,#ff000a,#ff0009,#ff0008,#ff0008,#ff0007,#ff0006,#ff0006,#ff0005,#ff0004,#ff0004,#ff0003,#ff0003,#ff0002,#ff0001,#ff0001,#ff0000,#ff0000,#ff0000,#ff0000)"></i>
<i class="r" style="top:94px;height:2px;left:0.00px;width:644.00px;background:linear-gradient(90deg,#00ff77,#00ff77,#00ff78,#00ff79,#00ff79,#00ff7a,#00ff7b,#00ff7b,#00ff7c,#00ff7d,#00ff7e,#00ff7e,#04ff7f,#1dff80,#35ff81,#4dff82,#65ff83,#7dff84,#96ff86,#b1ff87,#ccff88,#e8ff89,#fff988,#ffdf7b,#ffc870,#ffb566,#ffa55e,#ff9657,#ff8a51,#ff7e4b,#ff7446,#ff6b42,#ff623e,#ff5a3a,#ff5336,#ff4d33,#ff4730,#ff412e,#ff3c2b,#ff3729,#ff3327,#ff2e25,#ff2a23,#ff2621,#ff231f,#ff1f1d,#ff1c1c,#ff191b,#ff1619,#ff1318,#ff1017,#ff0d15,#ff0b14,#ff0813,#ff0612,#ff0311,#ff0110,#ff000f,#ff000e,#ff000d,#ff000d,#ff000c,#ff000b,#ff000a,#ff000a,#ff0009,#ff0008,#ff0008,#ff0007,#ff0006,#ff0006,#ff0005,#ff0004,#ff0004,#ff0003,#ff0003,#ff0002,#ff0002,#ff0001,#ff0000,#ff0000)"></i>
<i class="r" style="top:96px;height:2px;left:0.00px;width:644.00px;background:linear-gradient(90deg,#00ff7a,#00ff7b,#00ff7c,#00ff7c,#00ff7d,#00ff7e,#00ff7f,#00ff7f,#00ff80,#00ff81,#00ff82,#00ff83,#03ff84,#1dff85,#35ff86,#4cff87,#64ff88,#7dff8a,#96ff8b,#b1ff8c,#ccff8e,#e8ff8f,#fff88d,#ffde80,#ffc874,#ffb56b,#ffa462,#ff965b,#ff8954,#ff7d4f,#ff7349,#ff6a45,#ff6240,#ff5a3d,#ff5339,#ff4c36,#ff4633,#ff4130,#ff3b2d,#ff372b,#ff3229,#ff2e27,#ff2a25,#ff2623,#ff2221,#ff1f1f,#ff1b1e,#ff181c,#ff151b,#ff121a,#ff1018,#ff0d17,#ff0a16,#ff0815,#ff0514,#ff0313,#ff0012,#ff0011,#ff0010,#ff000f,#ff000e,#ff000d,#ff000c,#ff000c,#ff000b,#ff000a,#ff0009,#ff0009,#ff0008,#ff0007,#ff0007,#ff0006,#ff0006,#ff0005,#ff0004,#ff0004,#ff0003,#ff0003,#ff0002,#ff0002,#ff0001)"></i>
<i class="r" style="top:98px;height:2px;left:0.00px;width:644.00px;background:linear-gradient(90deg,#00ff7e,#00ff7f,#00ff7f,#00ff80,#00ff81,#00ff82,#00ff83,#00ff84,#00ff85,#00ff85,#00ff86,#00ff87,#02ff89,#1cff8a,#34ff8b,#4cff8c,#64ff8d,#7dff8f,#96ff90,#b1ff92,#ccff93,#e9ff95,#fff893,#ffdd85,#ffc779,#ffb46f,#ffa366,#ff955f,#ff8858,#ff7d52,#ff734c,#ff6948,#ff6143,#ff593f,#ff523c,#ff4c38,#ff4635,#ff4032,#ff3b30,#ff362d,#ff312b,#ff2d29,#ff2927,#ff2525,#ff2223,#ff1e21,#ff1b20,#ff181e,#ff151d,#ff121b,#ff0f1a,#ff0c19,#ff0a17,#ff0716,#ff0515,#ff0214,#ff0013,#ff0012,#ff0011,#ff0010,#ff000f,#ff000f,#ff000e,#ff000d,#ff000c,#ff000b,#ff000b,#ff000a,#ff0009,#ff0009,#ff0008,#ff0007,#ff0007,#ff0006,#ff0006,#ff0005,#ff0005,#ff0004,#ff0003,#ff0003,#ff0002)"></i>
<i class="r" style="top:100px;height:2px;left:0.00px;width:644.00px;background:linear-gradient(90deg,#00ff82,#00ff82,#00ff83,#00ff84,#00ff85,#00ff86,#00ff87,#00ff88,#00ff89,#00ff8a,#00ff8b,#00ff8c,#01ff8d,#1bff8f,#33ff90,#4bff91,#64ff93,#7dff94,#96ff96,#b1ff97,#cdff99,#e9ff9b,#fff798,#ffdd8a,#ffc67e,#ffb373,#ffa36a,#ff9462,#ff885b,#ff7c55,#ff7250,#ff694b,#ff6046,#ff5942,#ff523e,#ff4b3b,#ff4538,#ff4035,#ff3a32,#ff352f,#ff312d,#ff2d2b,#ff2929,#ff2527,#ff2125,#ff1e23,#ff1a21,#ff1720,#ff141e,#ff111d,#ff0f1c,#ff0c1a,#ff0919,#ff0718,#ff0417,#ff0216,#ff0015,#ff0014,#ff0013,#ff0012,#ff0011,#ff0010,#ff000f,#ff000e,#ff000d,#ff000d,#ff000c,#ff000b,#ff000b,#ff000a,#ff0009,#ff0009,#ff0008,#ff0007,#ff0007,#ff0006,#ff0006,#ff0005,#ff0005,#ff0004,#ff0004)"></i>
<i class="r" style="top:102px;height:2px;left:0.00px;width:644.00px;background:linear-gradient(90deg,#00ff85,#00ff86,#00ff87,#00ff88,#00ff89,#00ff8a,#00ff8b,#00ff8c,#00ff8d,#00ff8e,#00ff8f,#00ff91,#00ff92,#1aff93,#33ff95,#4bff96,#63ff98,#7dff9a,#96ff9b,#b1ff9d,#cdff9f,#eaffa1,#fff69e,#ffdc8f,#ffc682,#ffb377,#ffa26e,#ff9466,#ff875f,#ff7b59,#ff7153,#ff684e,#ff6049,#ff5845,#ff5141,#ff4a3d,#ff443a,#ff3f37,#ff3a34,#ff3532,#ff302f,#ff2c2d,#ff282b,#ff2429,#ff2127,#ff1d25,#ff1a23,#ff1722,#ff1420,#ff111f,#ff0e1d,#ff0b1c,#ff091b,#ff0619,#ff0418,#ff0117,#ff0016,#ff0015,#ff0014,#ff0013,#ff0012,#ff0011,#ff0010,#ff0010,#ff000f,#ff000e,#ff000d,#ff000d,#ff000c,#ff000b,#ff000a,#ff000a,#ff0009,#ff0009,#ff0008,#ff0007,#ff0007,#ff0006,#ff0006,#ff0005,#ff0005)"></i>
<i class="r" style="top:104px;height:2px;left:0.00px;width:644.00px;background:linear-gradient(90deg,#00ff89,#00ff8a,#00ff8b,#00ff8c,#00ff8d,#00ff8e,#00ff8f,#00ff90,#00ff91,#00ff93,#00ff94,#00ff95,#00ff97,#1aff98,#32ff9a,#4bff9b,#63ff9d,#7cff9f,#96ffa1,#b1ffa3,#cdffa5,#eaffa7,#fff6a3,#ffdb94,#ffc587,#ffb27c,#ffa172,#ff936a,#ff8662,#ff7b5c,#ff7156,#ff6751,#ff5f4c,#ff5748,#ff5044,#ff4a40,#ff443c,#ff3e39,#ff3936,#ff3434,#ff3031,#ff2c2f,#ff272d,#ff242b,#ff2029,#ff1d27,#ff1925,#ff1623,#ff1322,#ff1020,#ff0e1f,#ff0b1d,#ff081c,#ff061b,#ff031a,#ff0019,#ff0017,#ff0016,#ff0015,#ff0014,#ff0013,#ff0013,#ff0012,#ff0011,#ff0010,#ff000f,#ff000e,#ff000e,#ff000d,#ff000c,#ff000c,#ff000b,#ff000a,#ff000a,#ff0009,#ff0009,#ff0008,#ff0007,#ff0007,#ff0006,#ff0006)"></i>
<i class="r" style="top:106px;height:2px;left:0.00px;width:644.00px;background:linear-gradient(90deg,#00ff8d,#00ff8e,#00ff8f,#00ff90,#00ff91,#00ff92,#00ff93,#00ff95,#00ff96,#00ff97,#00ff99,#00ff9a,#00ff9c,#19ff9d,#32ff9f,#4affa1,#63ffa2,#7cffa4,#96ffa6,#b1ffa9,#cdffab,#ebffad,#fff5a9,#ffda99,#ffc48b,#ffb180,#ffa176,#ff926e,#ff8566,#ff7a5f,#ff7059,#ff6754,#ff5e4f,#ff574a,#ff5046,#ff4942,#ff433f,#ff3e3c,#ff3939,#ff3436,#ff2f33,#ff2b31,#ff272f,#ff232c,#ff202a,#ff1c29,#ff1927,#ff1625,#ff1323,#ff1022,#ff0d20,#ff0a1f,#ff081e,#ff051c,#ff021b,#ff001a,#ff0019,#ff0018,#ff0017,#ff0016,#ff0015,#ff0014,#ff0013,#ff0012,#ff0011,#ff0010,#ff0010,#ff000f,#ff000e,#ff000d,#ff000d,#ff000c,#ff000b,#ff000b,#ff000a,#ff000a,#ff0009,#ff0008,#ff0008,#ff0007,#ff0007)"></i>
<i class="r" style="top:108px;height:2px;left:0.00px;width:644.00px;background:linear-gradient(90deg,#00ff91,#00ff92,#00ff93,#00ff94,#00ff95,#00ff96,#00ff98,#00ff99,#00ff9a,#00ff9c,#00ff9d,#00ff9f,#00ffa0,#18ffa2,#31ffa4,#4affa6,#63ffa8,#7cffaa,#96ffac,#b2ffae,#ceffb1,#ebffb3,#fff4ae,#ffda9e,#ffc390,#ffb084,#ffa07a,#ff9171,#ff8569,#ff7963,#ff6f5c,#ff6657,#ff5e52,#ff564d,#ff4f49,#ff4945,#ff4341,#ff3d3e,#ff383b,#ff3338,#ff2f35,#ff2a33,#ff2631,#ff232e,#ff1f2c,#ff1c2a,#ff1828,#ff1527,#ff1225,#ff0f23,#ff0d22,#ff0a21,#ff071f,#ff051e,#ff021d,#ff001b,#ff001a,#ff0019,#ff0018,#ff0017,#ff0016,#ff0015,#ff0014,#ff0013,#ff0013,#ff0012,#ff0011,#ff0010,#ff000f,#ff000f,#ff000e,#ff000d,#ff000d,#ff000c,#ff000b,#ff000b,#ff000a,#ff000a,#ff0009,#ff0008,#ff0008)"></i>
<i class="r" style="top:110px;height:2px;left:0.00px;width:644.00px;background:linear-gradient(90deg,#00ff94,#00ff95,#00ff97,#00ff98,#00ff99,#00ff9a,#00ff9c,#00ff9d,#00ff9f,#00ffa0,#00ffa2,#00ffa3,#00ffa5,#17ffa7,#30ffa9,#49ffab,#62ffad,#7cffaf,#96ffb2,#b2ffb4,#ceffb7,#ecffba,#fff4b4,#ffd9a3,#ffc395,#ffb089,#ff9f7e,#ff9175,#ff846d,#ff7966,#ff6e5f,#ff655a,#ff5d54,#ff5550,#ff4e4b,#ff4847,#ff4244,#ff3d40,#ff373d,#ff333a,#ff2e38,#ff2a35,#ff2633,#ff2230,#ff1e2e,#ff1b2c,#ff182a,#ff1528,#ff1227,#ff0f25,#ff0c24,#ff0922,#ff0721,#ff041f,#ff011e,#ff001d,#ff001c,#ff001b,#ff0019,#ff0018,#ff0017,#ff0016,#ff0016,#ff0015,#ff0014,#ff0013,#ff0012,#ff0011,#ff0011,#ff0010,#ff000f,#ff000e,#ff000e,#ff000d,#ff000c,#ff000c,#ff000b,#ff000b,#ff000a,#ff0009,#ff0009)"></i>
<i class="r" style="top:112px;height:2px;left:0.00px;width:644.00px;background:linear-gradient(90deg,#00ff98,#00ff99,#00ff9b,#00ff9c,#00ff9d,#00ff9f,#00ffa0,#00ffa2,#00ffa3,#00ffa5,#00ffa6,#00ffa8,#00ffaa,#17ffac,#30ffae,#49ffb0,#62ffb3,#7cffb5,#96ffb7,#b2ffba,#ceffbd,#ecffc0,#fff3ba,#ffd8a8,#ffc29a,#ffaf8d,#ff9e82,#ff9079,#ff8371,#ff7869,#ff6e63,#ff655d,#ff5c57,#ff5552,#ff4e4e,#ff474a,#ff4146,#ff3c43,#ff373f,#ff323c,#ff2d3a,#ff2937,#ff2535,#ff2132,#ff1e30,#ff1a2e,#ff172c,#ff142a,#ff1128,#ff0e27,#ff0b25,#ff0924,#ff0622,#ff0321,#ff0120,#ff001e,#ff001d,#ff001c,#ff001b,#ff001a,#ff0019,#ff0018,#ff0017,#ff0016,#ff0015,#ff0014,#ff0013,#ff0013,#ff0012,#ff0011,#ff0010,#ff0010,#ff000f,#ff000e,#ff000e,#ff000d,#ff000c,#ff000c,#ff000b,#ff000a,#ff000a)"></i>
<i class="r" style="top:114px;height:2px;left:0.00px;width:644.00px;background:linear-gradient(90deg,#00ff9c,#00ff9d,#00ff9f,#00ffa0,#00ffa1,#00ffa3,#00ffa4,#00ffa6,#00ffa8,#00ffa9,#00ffab,#00ffad,#00ffaf,#16ffb1,#2fffb3,#48ffb6,#62ffb8,#7bffba,#96ffbd,#b2ffc0,#cfffc3,#edffc6,#fff2bf,#ffd8ad,#ffc19e,#ffae91,#ff9e86,#ff8f7d,#ff8374,#ff776d,#ff6d66,#ff6460,#ff5c5a,#ff5455,#ff4d51,#ff474c,#ff4149,#ff3b45,#ff3642,#ff313f,#ff2d3c,#ff2939,#ff2536,#ff2134,#ff1d32,#ff1a30,#ff172e,#ff142c,#ff112a,#ff0e28,#ff0b27,#ff0825,#ff0624,#ff0322,#ff0021,#ff0020,#ff001f,#ff001d,#ff001c,#ff001b,#ff001a,#ff0019,#ff0018,#ff0017,#ff0016,#ff0015,#ff0015,#ff0014,#ff0013,#ff0012,#ff0011,#ff0011,#ff0010,#ff000f,#ff000f,#ff000e,#ff000d,#ff000d,#ff000c,#ff000c,#ff000b)"></i>
<i class="r" style="top:116px;height:2px;left:0.00px;width:644.00px;background:linear-gradient(90deg,#00ffa0,#00ffa1,#00ffa2,#00ffa4,#00ffa5,#00ffa7,#00ffa9,#00ffaa,#00ffac,#00ffae,#00ffb0,#00ffb2,#00ffb4,#15ffb6,#2effb8,#48ffbb,#61ffbd,#7bffc0,#96ffc3,#b2ffc6,#cfffc9,#edffcd,#fff2c5,#ffd7b3,#ffc1a3,#ffad96,#ff9d8a,#ff8f80,#ff8278,#ff7770,#ff6c69,#ff6363,#ff5b5d,#ff5358,#ff4c53,#ff464f,#ff404b,#ff3b47,#ff3644,#ff3141,#ff2c3e,#ff283b,#ff2438,#ff2036,#ff1d34,#ff1932,#ff1630,#ff132e,#ff102c,#ff0d2a,#ff0a28,#ff0827,#ff0525,#ff0224,#ff0022,#ff0021,#ff0020,#ff001f,#ff001e,#ff001c,#ff001b,#ff001a,#ff0019,#ff0018,#ff0017,#ff0017,#ff0016,#ff0015,#ff0014,#ff0013,#ff0012,#ff0012,#ff0011,#ff0010,#ff0010,#ff000f,#ff000e,#ff000e,#ff000d,#ff000d,#ff000c)"></i>
<i class="r" style="top:118px;height:2px;left:0.00px;width:644.00px;background:linear-gradient(90deg,#00ffa4,#00ffa5,#00ffa6,#00ffa8,#00ffaa,#00ffab,#00ffad,#00ffaf,#00ffb1,#00ffb3,#00ffb5,#00ffb7,#00ffb9,#14ffbb,#2effbe,#47ffc0,#61ffc3,#7bffc6,#96ffc9,#b2ffcc,#cfffcf,#eeffd3,#fff1cb,#ffd6b8,#ffc0a8,#ffad9a,#ff9c8e,#ff8e84,#ff817b,#ff7673,#ff6c6c,#ff6366,#ff5a60,#ff535b,#ff4c56,#ff4551,#ff404d,#ff3a4a,#ff3546,#ff3043,#ff2c40,#ff283d,#ff243a,#ff2038,#ff1c36,#ff1933,#ff1631,#ff132f,#ff102d,#ff0d2c,#ff0a2a,#ff0728,#ff0427,#ff0225,#ff0024,#ff0023,#ff0021,#ff0020,#ff001f,#ff001e,#ff001d,#ff001c,#ff001b,#ff001a,#ff0019,#ff0018,#ff0017,#ff0016,#ff0015,#ff0014,#ff0014,#ff0013,#ff0012,#ff0011,#ff0011,#ff0010,#ff000f,#ff000f,#ff000e,#ff000e,#ff000d)"></i>
<i class="r" style="top:120px;height:2px;left:0.00px;width:644.00px;background:linear-gradient(90deg,#00ffa7,#00ffa9,#00ffaa,#00ffac,#00ffae,#00ffb0,#00ffb1,#00ffb3,#00ffb5,#00ffb7,#00ffb9,#00ffbc,#00ffbe,#13ffc0,#2dffc3,#47ffc6,#60ffc9,#7bffcc,#96ffcf,#b2ffd2,#d0ffd6,#efffd9,#fff0d1,#ffd5bd,#ffbfac,#ffac9f,#ff9b92,#ff8d88,#ff807f,#ff7577,#ff6b6f,#ff6269,#ff5a63,#ff525d,#ff4b58,#ff4554,#ff3f50,#ff394c,#ff3448,#ff3045,#ff2b42,#ff273f,#ff233c,#ff1f3a,#ff1c37,#ff1835,#ff1533,#ff1231,#ff0f2f,#ff0c2d,#ff092c,#ff072a,#ff0428,#ff0127,#ff0025,#ff0024,#ff0023,#ff0021,#ff0020,#ff001f,#ff001e,#ff001d,#ff001c,#ff001b,#ff001a,#ff0019,#ff0018,#ff0017,#ff0016,#ff0016,#ff0015,#ff0014,#ff0013,#ff0012,#ff0012,#ff0011,#ff0010,#ff0010,#ff000f,#ff000f,#ff000e)"></i>
<i class="r" style="top:122px;height:2px;left:0.00px;width:644.00px;background:linear-gradient(90deg,#00ffab,#00ffad,#00ffaf,#00ffb0,#00ffb2,#00ffb4,#00ffb6,#00ffb8,#00ffba,#00ffbc,#00ffbe,#00ffc1,#00ffc3,#12ffc6,#2cffc8,#46ffcb,#60ffce,#7bffd1,#96ffd5,#b3ffd8,#d0ffdc,#efffe0,#ffefd6,#ffd5c2,#ffbeb1,#ffaba3,#ff9b97,#ff8c8c,#ff8082,#ff747a,#ff6a72,#ff616c,#ff5966,#ff5160,#ff4a5b,#ff4456,#ff3e52,#ff394e,#ff344b,#ff2f47,#ff2b44,#ff2641,#ff223e,#ff1f3c,#ff1b39,#ff1837,#ff1535,#ff1133,#ff0e31,#ff0c2f,#ff092d,#ff062b,#ff032a,#ff0028,#ff0027,#ff0025,#ff0024,#ff0023,#ff0022,#ff0020,#ff001f,#ff001e,#ff001d,#ff001c,#ff001b,#ff001a,#ff0019,#ff0018,#ff0017,#ff0017,#ff0016,#ff0015,#ff0014,#ff0014,#ff0013,#ff0012,#ff0011,#ff0011,#ff0010,#ff0010,#ff000f)"></i>
<i class="r" style="top:124px;height:2px;left:0.00px;width:644.00px;background:linear-gradient(90deg,#00ffaf,#00ffb1,#00ffb3,#00ffb4,#00ffb6,#00ffb8,#00ffba,#00ffbc,#00ffbe,#00ffc1,#00ffc3,#00ffc6,#00ffc8,#11ffcb,#2cffce,#46ffd1,#60ffd4,#7bffd7,#96ffdb,#b3ffdf,#d1ffe3,#f0ffe7,#ffefdc,#ffd4c7,#ffbeb6,#ffaaa7,#ff9a9b,#ff8c90,#ff7f86,#ff747d,#ff6a76,#ff606f,#ff5869,#ff5163,#ff4a5e,#ff4359,#ff3e55,#ff3851,#ff334d,#ff2e49,#ff2a46,#ff2643,#ff2240,#ff1e3e,#ff1b3b,#ff1739,#ff1437,#ff1134,#ff0e32,#ff0b31,#ff082f,#ff052d,#ff032b,#ff002a,#ff0028,#ff0027,#ff0025,#ff0024,#ff0023,#ff0022,#ff0021,#ff001f,#ff001e,#ff001d,#ff001c,#ff001b,#ff001a,#ff0019,#ff0019,#ff0018,#ff0017,#ff0016,#ff0015,#ff0015,#ff0014,#ff0013,#ff0012,#ff0012,#ff0011,#ff0010,#ff0010)"></i>
<i class="r" style="top:126px;height:2px;left:0.00px;width:644.00px;background:linear-gradient(90deg,#00ffb3,#00ffb5,#00ffb7,#00ffb9,#00ffba,#00ffbd,#00ffbf,#00ffc1,#00ffc3,#00ffc5,#00ffc8,#00ffcb,#00ffcd,#11ffd0,#2bffd3,#45ffd6,#5fffda,#7affdd,#96ffe1,#b3ffe5,#d1ffe9,#f0ffed,#ffeee2,#ffd3cd,#ffbdbb,#ffaaac,#ff999f,#ff8b93,#ff7e89,#ff7381,#ff6979,#ff6072,#ff586b,#ff5066,#ff4960,#ff435b,#ff3d57,#ff3853,#ff334f,#ff2e4c,#ff2948,#ff2545,#ff2142,#ff1e40,#ff1a3d,#ff173b,#ff1338,#ff1036,#ff0d34,#ff0a32,#ff0830,#ff052f,#ff022d,#ff002b,#ff002a,#ff0028,#ff0027,#ff0026,#ff0024,#ff0023,#ff0022,#ff0021,#ff0020,#ff001f,#ff001d,#ff001c,#ff001c,#ff001b,#ff001a,#ff0019,#ff0018,#ff0017,#ff0016,#ff0016,#ff0015,#ff0014,#ff0013,#ff0013,#ff0012,#ff0011,#ff0011)"></i>
<i class="r" style="top:128px;height:2px;left:0.00px;width:644.00px;background:linear-gradient(90deg,#00ffb7,#00ffb9,#00ffbb,#00ffbd,#00ffbf,#00ffc1,#00ffc3,#00ffc5,#00ffc8,#00ffca,#00ffcd,#00ffd0,#00ffd3,#10ffd6,#2affd9,#45ffdc,#5fffdf,#7affe3,#96ffe7,#b3ffeb,#d1fff0,#f1fff4,#ffede8,#ffd2d2,#ffbcc0,#ffa9b0,#ff98a3,#ff8a97,#ff7d8d,#ff7284,#ff687c,#ff5f75,#ff576e,#ff4f68,#ff4963,#ff425e,#ff3c59,#ff3755,#ff3251,#ff2d4e,#ff294a,#ff2547,#ff2144,#ff1d41,#ff193f,#ff163c,#ff133a,#ff1038,#ff0d36,#ff0a34,#ff0732,#ff0430,#ff012e,#ff002d,#ff002b,#ff002a,#ff0028,#ff0027,#ff0026,#ff0024,#ff0023,#ff0022,#ff0021,#ff0020,#ff001f,#ff001e,#ff001d,#ff001c,#ff001b,#ff001a,#ff0019,#ff0018,#ff0017,#ff0017,#ff0016,#ff0015,#ff0014,#ff0014,#ff0013,#ff0012,#ff0012)"></i>
<i class="r" style="top:130px;height:2px;left:0.00px;width:644.00px;background:linear-gradient(90deg,#00ffbb,#00ffbd,#00ffbf,#00ffc1,#00ffc3,#00ffc5,#00ffc8,#00ffca,#00ffcd,#00ffcf,#00ffd2,#00ffd5,#00ffd8,#0fffdb,#2affde,#44ffe2,#5fffe5,#7affe9,#96ffed,#b3fff2,#d2fff6,#f1fffb,#ffedee,#ffd2d7,#ffbbc5,#ffa8b5,#ff98a7,#ff899b,#ff7d91,#ff7187,#ff677f,#ff5e78,#ff5671,#ff4f6b,#ff4866,#ff4260,#ff3c5c,#ff3658,#ff3154,#ff2d50,#ff284c,#ff2449,#ff2046,#ff1c43,#ff1941,#ff163e,#ff123c,#ff0f39,#ff0c37,#ff0935,#ff0733,#ff0432,#ff0130,#ff002e,#ff002d,#ff002b,#ff002a,#ff0028,#ff0027,#ff0026,#ff0024,#ff0023,#ff0022,#ff0021,#ff0020,#ff001f,#ff001e,#ff001d,#ff001c,#ff001b,#ff001a,#ff0019,#ff0019,#ff0018,#ff0017,#ff0016,#ff0015,#ff0015,#ff0014,#ff0013,#ff0013)"></i>
<i class="r" style="top:132px;height:2px;left:0.00px;width:644.00px;background:linear-gradient(90deg,#00ffbf,#00ffc1,#00ffc3,#00ffc5,#00ffc7,#00ffca,#00ffcc,#00ffcf,#00ffd1,#00ffd4,#00ffd7,#00ffda,#00ffdd,#0effe0,#29ffe4,#44ffe7,#5effeb,#7affef,#96fff4,#b3fff8,#d2fffd,#effcff,#ffecf4,#ffd1dd,#ffbac9,#ffa7b9,#ff97ab,#ff899f,#ff7c94,#ff718b,#ff6782,#ff5e7b,#ff5574,#ff4e6e,#ff4768,#ff4163,#ff3b5e,#ff365a,#ff3156,#ff2c52,#ff284e,#ff234b,#ff2048,#ff1c45,#ff1842,#ff1540,#ff123d,#ff0f3b,#ff0c39,#ff0937,#ff0635,#ff0333,#ff0031,#ff0030,#ff002e,#ff002c,#ff002b,#ff002a,#ff0028,#ff0027,#ff0026,#ff0024,#ff0023,#ff0022,#ff0021,#ff0020,#ff001f,#ff001e,#ff001d,#ff001c,#ff001b,#ff001a,#ff001a,#ff0019,#ff0018,#ff0017,#ff0016,#ff0016,#ff0015,#ff0014,#ff0014)"></i>
<i class="r" style="top:134px;height:2px;left:0.00px;width:644.00px;background:linear-gradient(90deg,#00ffc3,#00ffc5,#00ffc7,#00ffca,#00ffcc,#00ffce,#00ffd1,#00ffd3,#00ffd6,#00ffd9,#00ffdc,#00ffdf,#00ffe2,#0dffe6,#28ffe9,#43ffed,#5efff1,#7afff5,#96fffa,#b4ffff,#cffaff,#e9f5ff,#ffebfa,#ffd0e2,#ffbace,#ffa7be,#ff96af,#ff88a3,#ff7b98,#ff708e,#ff6686,#ff5d7e,#ff5577,#ff4d71,#ff466b,#ff4066,#ff3a61,#ff355c,#ff3058,#ff2b54,#ff2751,#ff234d,#ff1f4a,#ff1b47,#ff1844,#ff1442,#ff113f,#ff0e3d,#ff0b3b,#ff0839,#ff0537,#ff0235,#ff0033,#ff0031,#ff002f,#ff002e,#ff002c,#ff002b,#ff002a,#ff0028,#ff0027,#ff0026,#ff0025,#ff0023,#ff0022,#ff0021,#ff0020,#ff001f,#ff001e,#ff001d,#ff001c,#ff001b,#ff001b,#ff001a,#ff0019,#ff0018,#ff0017,#ff0017,#ff0016,#ff0015,#ff0015)"></i>
<i class="r" style="top:136px;height:2px;left:0.00px;width:635.95px;background:linear-gradient(90deg,#00ffc7,#00ffc9,#00ffcc,#00ffce,#00ffd0,#00ffd3,#00ffd5,#00ffd8,#00ffdb,#00ffde,#00ffe1,#00ffe4,#00ffe8,#0cffeb,#28ffef,#42fff3,#5efff7,#79fffc,#95feff,#aff9ff,#caf4ff,#e4efff,#feeaff,#ffcfe7,#ffb9d3,#ffa6c2,#ff95b3,#ff87a7,#ff7a9b,#ff6f92,#ff6589,#ff5c81,#ff547a,#ff4d73,#ff466d,#ff4068,#ff3a63,#ff345e,#ff2f5a,#ff2b56,#ff2653,#ff224f,#ff1e4c,#ff1b49,#ff1746,#ff1443,#ff1141,#ff0e3f,#ff0b3c,#ff083a,#ff0538,#ff0236,#ff0034,#ff0033,#ff0031,#ff002f,#ff002e,#ff002c,#ff002b,#ff0029,#ff0028,#ff0027,#ff0026,#ff0025,#ff0023,#ff0022,#ff0021,#ff0020,#ff001f,#ff001e,#ff001d,#ff001d,#ff001c,#ff001b,#ff001a,#ff0019,#ff0018,#ff0018,#ff0017,#ff0016)"></i>
<i class="r" style="top:138px;height:2px;left:0.00px;width:635.95px;background:linear-gradient(90deg,#00ffcb,#00ffcd,#00ffd0,#00ffd2,#00ffd5,#00ffd7,#00ffda,#00ffdd,#00ffe0,#00ffe3,#00ffe6,#00ffea,#00ffed,#0bfff1,#27fff5,#42fff9,#5dfffd,#78fcff,#91f7ff,#abf3ff,#c5eeff,#dfe9ff,#f9e4ff,#ffcfed,#ffb8d8,#ffa5c7,#ff95b8,#ff86ab,#ff7a9f,#ff6e95,#ff648c,#ff5b84,#ff537d,#ff4c76,#ff4570,#ff3f6b,#ff3965,#ff3461,#ff2f5c,#ff2a58,#ff2655,#ff2251,#ff1e4e,#ff1a4b,#ff1748,#ff1345,#ff1043,#ff0d40,#ff0a3e,#ff073c,#ff043a,#ff0138,#ff0036,#ff0034,#ff0032,#ff0031,#ff002f,#ff002e,#ff002c,#ff002b,#ff0029,#ff0028,#ff0027,#ff0026,#ff0025,#ff0024,#ff0022,#ff0021,#ff0020,#ff001f,#ff001f,#ff001e,#ff001d,#ff001c,#ff001b,#ff001a,#ff0019,#ff0019,#ff0018,#ff0017)"></i>
<i class="r" style="top:140px;height:2px;left:0.00px;width:635.95px;background:linear-gradient(90deg,#00ffcf,#00ffd2,#00ffd4,#00ffd7,#00ffd9,#00ffdc,#00ffdf,#00ffe2,#00ffe5,#00ffe8,#00ffeb,#00ffef,#00fff3,#0afff6,#26fffb,#41ffff,#5bfbff,#75f6ff,#8ef1ff,#a7edff,#c0e8ff,#dae3ff,#f3deff,#ffcef2,#ffb7dd,#ffa4cb,#ff94bc,#ff85ae,#ff79a3,#ff6e98,#ff648f,#ff5b87,#ff5380,#ff4b79,#ff4473,#ff3e6d,#ff3868,#ff3363,#ff2e5f,#ff295b,#ff2557,#ff2153,#ff1d50,#ff194d,#ff164a,#ff1347,#ff0f44,#ff0c42,#ff0940,#ff063d,#ff043b,#ff0039,#ff0037,#ff0035,#ff0034,#ff0032,#ff0030,#ff002f,#ff002d,#ff002c,#ff002b,#ff0029,#ff0028,#ff0027,#ff0026,#ff0025,#ff0024,#ff0023,#ff0022,#ff0021,#ff0020,#ff001f,#ff001e,#ff001d,#ff001c,#ff001b,#ff001a,#ff001a,#ff0019,#ff0018)"></i>
<i class="r" style="top:142px;height:2px;left:0.00px;width:635.95px;background:linear-gradient(90deg,#00ffd4,#00ffd6,#00ffd8,#00ffdb,#00ffde,#00ffe0,#00ffe3,#00ffe6,#00ffea,#00ffed,#00fff1,#00fff4,#00fff8,#09fffc,#25feff,#3ff9ff,#59f5ff,#72f0ff,#8aecff,#a3e7ff,#bce2ff,#d5ddff,#eed8ff,#ffcdf8,#ffb6e2,#ffa3d0,#ff93c0,#ff85b2,#ff78a6,#ff6d9c,#ff6392,#ff5a8a,#ff5282,#ff4b7c,#ff4475,#ff3e70,#ff386a,#ff3265,#ff2e61,#ff295d,#ff2559,#ff2055,#ff1d52,#ff194f,#ff154c,#ff1249,#ff0f46,#ff0c44,#ff0941,#ff063f,#ff033d,#ff003b,#ff0039,#ff0037,#ff0035,#ff0033,#ff0032,#ff0030,#ff002f,#ff002d,#ff002c,#ff002b,#ff0029,#ff0028,#ff0027,#ff0026,#ff0025,#ff0024,#ff0023,#ff0022,#ff0021,#ff0020,#ff001f,#ff001e,#ff001d,#ff001c,#ff001b,#ff001b,#ff001a,#ff0019)"></i>
<i class="r" style="top:144px;height:2px;left:0.00px;width:627.90px;background:linear-gradient(90deg,#00ffd8,#00ffda,#00ffdd,#00ffdf,#00ffe2,#00ffe5,#00ffe8,#00ffeb,#00ffef,#00fff2,#00fff6,#00fffa,#00fffe,#08fcff,#24f8ff,#3df4ff,#56efff,#6febff,#87e6ff,#9fe1ff,#b8ddff,#d0d8ff,#e8d3ff,#ffccfd,#ffb6e7,#ffa3d4,#ff92c4,#ff84b6,#ff77aa,#ff6c9f,#ff6296,#ff598d,#ff5185,#ff4a7e,#ff4378,#ff3d72,#ff376d,#ff3268,#ff2d63,#ff285f,#ff245b,#ff2057,#ff1c54,#ff1851,#ff154d,#ff114b,#ff0e48,#ff0b45,#ff0843,#ff0541,#ff023e,#ff003c,#ff003a,#ff0038,#ff0037,#ff0035,#ff0033,#ff0032,#ff0030,#ff002f,#ff002d,#ff002c,#ff002b,#ff0029,#ff0028,#ff0027,#ff0026,#ff0025,#ff0024,#ff0023,#ff0022,#ff0021,#ff0020,#ff001f,#ff001e,#ff001d,#ff001c,#ff001c,#ff001b)"></i>
<i class="r" style="top:146px;height:2px;left:0.00px;width:627.90px;background:linear-gradient(90deg,#00ffdc,#00ffde,#00ffe1,#00ffe4,#00ffe7,#00ffea,#00ffed,#00fff0,#00fff4,#00fff7,#00fffb,#00ffff,#00fbff,#06f7ff,#22f2ff,#3beeff,#54eaff,#6ce5ff,#84e1ff,#9cdcff,#b4d7ff,#cbd3ff,#e3ceff,#fbc9ff,#ffb5ec,#ffa2d9,#ff91c8,#ff83ba,#ff76ae,#ff6ba3,#ff6199,#ff5990,#ff5088,#ff4981,#ff427b,#ff3c75,#ff366f,#ff316a,#ff2c65,#ff2861,#ff235d,#ff1f59,#ff1b56,#ff1852,#ff144f,#ff114c,#ff0e4a,#ff0b47,#ff0844,#ff0542,#ff0240,#ff003e,#ff003c,#ff003a,#ff0038,#ff0036,#ff0035,#ff0033,#ff0031,#ff0030,#ff002e,#ff002d,#ff002c,#ff002b,#ff0029,#ff0028,#ff0027,#ff0026,#ff0025,#ff0024,#ff0023,#ff0022,#ff0021,#ff0020,#ff001f,#ff001e,#ff001d,#ff001d,#ff001c)"></i>
<i class="r" style="top:148px;height:2px;left:0.00px;width:627.90px;background:linear-gradient(90deg,#00ffe0,#00ffe3,#00ffe5,#00ffe8,#00ffeb,#00ffef,#00fff2,#00fff5,#00fff9,#00fffd,#00feff,#00faff,#00f5ff,#05f1ff,#21edff,#39e9ff,#52e4ff,#69e0ff,#81dcff,#98d7ff,#b0d2ff,#c7cdff,#dfc9ff,#f6c4ff,#ffb4f1,#ffa1dd,#ff90cd,#ff82be,#ff76b1,#ff6ba6,#ff619c,#ff5893,#ff508b,#ff4884,#ff427d,#ff3c77,#ff3672,#ff316c,#ff2c68,#ff2763,#ff235f,#ff1f5b,#ff1b58,#ff1754,#ff1451,#ff104e,#ff0d4b,#ff0a49,#ff0746,#ff0444,#ff0141,#ff003f,#ff003d,#ff003b,#ff0039,#ff0038,#ff0036,#ff0034,#ff0033,#ff0031,#ff0030,#ff002e,#ff002d,#ff002c,#ff002a,#ff0029,#ff0028,#ff0027,#ff0026,#ff0025,#ff0024,#ff0023,#ff0022,#ff0021,#ff0020,#ff001f,#ff001e,#ff001e,#ff001d)"></i>
<i class="r" style="top:150px;height:2px;left:0.00px;width:627.90px;background:linear-gradient(90deg,#00ffe4,#00ffe7,#00ffea,#00ffed,#00fff0,#00fff3,#00fff7,#00fffa,#00fffe,#00fcff,#00f8ff,#00f4ff,#00f0ff,#04ecff,#1fe8ff,#38e4ff,#4fdfff,#67dbff,#7ed7ff,#95d2ff,#accdff,#c3c9ff,#dac4ff,#f1bfff,#ffb3f6,#ffa0e2,#ff90d1,#ff81c2,#ff75b5,#ff6aaa,#ff609f,#ff5796,#ff4f8e,#ff4887,#ff4180,#ff3b7a,#ff3574,#ff306f,#ff2b6a,#ff2665,#ff2261,#ff1e5d,#ff1a5a,#ff1656,#ff1353,#ff1050,#ff0c4d,#ff094a,#ff0648,#ff0345,#ff0043,#ff0041,#ff003f,#ff003d,#ff003b,#ff0039,#ff0037,#ff0036,#ff0034,#ff0032,#ff0031,#ff0030,#ff002e,#ff002d,#ff002c,#ff002a,#ff0029,#ff0028,#ff0027,#ff0026,#ff0025,#ff0024,#ff0023,#ff0022,#ff0021,#ff0020,#ff001f,#ff001f,#ff001e)"></i>
<i class="r" style="top:152px;height:2px;left:0.00px;width:627.90px;background:linear-gradient(90deg,#00ffe9,#00ffeb,#00ffee,#00fff1,#00fff5,#00fff8,#00fffc,#00ffff,#00fbff,#00f7ff,#00f3ff,#00efff,#00ebff,#03e7ff,#1ee3ff,#36dfff,#4ddbff,#64d6ff,#7bd2ff,#92cdff,#a8c9ff,#bfc4ff,#d6bfff,#ecbaff,#ffb2fb,#ff9fe7,#ff8fd5,#ff81c6,#ff74b9,#ff69ad,#ff5fa3,#ff5699,#ff4e91,#ff4789,#ff4082,#ff3a7c,#ff3476,#ff2f71,#ff2a6c,#ff2668,#ff2163,#ff1d5f,#ff195c,#ff1658,#ff1255,#ff0f52,#ff0c4f,#ff094c,#ff0649,#ff0347,#ff0045,#ff0042,#ff0040,#ff003e,#ff003c,#ff003a,#ff0039,#ff0037,#ff0035,#ff0034,#ff0032,#ff0031,#ff002f,#ff002e,#ff002d,#ff002c,#ff002a,#ff0029,#ff0028,#ff0027,#ff0026,#ff0025,#ff0024,#ff0023,#ff0022,#ff0021,#ff0020,#ff001f,#ff001f)"></i>
<i class="r" style="top:154px;height:2px;left:0.00px;width:619.85px;background:linear-gradient(90deg,#00ffed,#00fff0,#00fff3,#00fff6,#00fff9,#00fffd,#00feff,#00faff,#00f6ff,#00f2ff,#00eeff,#00eaff,#00e6ff,#02e2ff,#1cdeff,#34daff,#4bd6ff,#62d1ff,#78cdff,#8fc9ff,#a5c4ff,#bbbfff,#d1bbff,#e8b6ff,#feb1ff,#ff9eeb,#ff8ed9,#ff80ca,#ff73bc,#ff68b0,#ff5ea6,#ff569c,#ff4e94,#ff468c,#ff4085,#ff397f,#ff3479,#ff2f73,#ff2a6e,#ff256a,#ff2165,#ff1d61,#ff195d,#ff155a,#ff1257,#ff0e53,#ff0b50,#ff084e,#ff054b,#ff0249,#ff0046,#ff0044,#ff0042,#ff0040,#ff003e,#ff003c,#ff003a,#ff0038,#ff0037,#ff0035,#ff0034,#ff0032,#ff0031,#ff002f,#ff002e,#ff002d,#ff002b,#ff002a,#ff0029,#ff0028,#ff0027,#ff0026,#ff0025,#ff0024,#ff0023,#ff0022,#ff0021,#ff0020)"></i>
<i class="r" style="top:156px;height:2px;left:0.00px;width:619.85px;background:linear-gradient(90deg,#00fff1,#00fff4,#00fff7,#00fffb,#00fffe,#00fcff,#00f9ff,#00f5ff,#00f1ff,#00edff,#00eaff,#00e6ff,#00e2ff,#00deff,#1bdaff,#33d5ff,#49d1ff,#60cdff,#76c9ff,#8cc4ff,#a1c0ff,#b7bbff,#cdb6ff,#e3b1ff,#f9adff,#ff9ef0,#ff8dde,#ff7fce,#ff73c0,#ff67b4,#ff5ea9,#ff559f,#ff4d97,#ff468f,#ff3f88,#ff3981,#ff337b,#ff2e76,#ff2971,#ff246c,#ff2067,#ff1c63,#ff185f,#ff155c,#ff1158,#ff0e55,#ff0b52,#ff084f,#ff044d,#ff014a,#ff0048,#ff0045,#ff0043,#ff0041,#ff003f,#ff003d,#ff003b,#ff003a,#ff0038,#ff0036,#ff0035,#ff0033,#ff0032,#ff0030,#ff002f,#ff002e,#ff002d,#ff002b,#ff002a,#ff0029,#ff0028,#ff0027,#ff0026,#ff0025,#ff0024,#ff0023,#ff0022,#ff0021)"></i>
<i class="r" style="top:158px;height:2px;left:0.00px;width:619.85px;background:linear-gradient(90deg,#00fff6,#00fff9,#00fffc,#00ffff,#00fbff,#00f8ff,#00f4ff,#00f0ff,#00edff,#00e9ff,#00e5ff,#00e1ff,#00ddff,#00d9ff,#1ad5ff,#31d1ff,#47cdff,#5dc8ff,#73c4ff,#89c0ff,#9ebbff,#b4b7ff,#c9b2ff,#dfadff,#f4a8ff,#ff9df4,#ff8ce2,#ff7ed2,#ff72c4,#ff67b7,#ff5dac,#ff54a3,#ff4c9a,#ff4592,#ff3e8a,#ff3884,#ff327e,#ff2d78,#ff2873,#ff246e,#ff1f69,#ff1b65,#ff1861,#ff145e,#ff115a,#ff0d57,#ff0a54,#ff0751,#ff044e,#ff014c,#ff0049,#ff0047,#ff0045,#ff0043,#ff0040,#ff003f,#ff003d,#ff003b,#ff0039,#ff0038,#ff0036,#ff0034,#ff0033,#ff0032,#ff0030,#ff002f,#ff002e,#ff002d,#ff002b,#ff002a,#ff0029,#ff0028,#ff0027,#ff0026,#ff0025,#ff0024,#ff0023,#ff0022)"></i>
<i class="r" style="top:160px;height:2px;left:0.00px;width:619.85px;background:linear-gradient(90deg,#00fffa,#00fffd,#00fdff,#00faff,#00f7ff,#00f3ff,#00efff,#00ecff,#00e8ff,#00e4ff,#00e1ff,#00ddff,#00d9ff,#00d5ff,#19d1ff,#30cdff,#46c8ff,#5bc4ff,#71c0ff,#86bcff,#9bb7ff,#b0b3ff,#c5aeff,#daa9ff,#f0a4ff,#ff9cf9,#ff8be6,#ff7dd6,#ff71c7,#ff66bb,#ff5cb0,#ff53a6,#ff4b9d,#ff4495,#ff3d8d,#ff3786,#ff3280,#ff2d7a,#ff2875,#ff2370,#ff1f6c,#ff1b67,#ff1763,#ff1360,#ff105c,#ff0d59,#ff0956,#ff0653,#ff0350,#ff004d,#ff004b,#ff0048,#ff0046,#ff0044,#ff0042,#ff0040,#ff003e,#ff003c,#ff003b,#ff0039,#ff0037,#ff0036,#ff0034,#ff0033,#ff0031,#ff0030,#ff002f,#ff002e,#ff002c,#ff002b,#ff002a,#ff0029,#ff0028,#ff0027,#ff0026,#ff0025,#ff0024,#ff0023)"></i>
<i class="r" style="top:162px;height:2px;left:0.00px;width:619.85px;background:linear-gradient(90deg,#00fffe,#00fcff,#00f9ff,#00f6ff,#00f2ff,#00efff,#00ebff,#00e7ff,#00e4ff,#00e0ff,#00dcff,#00d8ff,#00d5ff,#00d1ff,#17cdff,#2ec8ff,#44c4ff,#59c0ff,#6ebcff,#83b7ff,#98b3ff,#adafff,#c1aaff,#d6a5ff,#eba1ff,#ff9bfe,#ff8bea,#ff7cda,#ff70cb,#ff65be,#ff5bb3,#ff53a9,#ff4ba0,#ff4397,#ff3d90,#ff3789,#ff3183,#ff2c7d,#ff2777,#ff2272,#ff1e6e,#ff1a69,#ff1665,#ff1361,#ff0f5e,#ff0c5b,#ff0957,#ff0654,#ff0252,#ff004f,#ff004c,#ff004a,#ff0048,#ff0045,#ff0043,#ff0041,#ff003f,#ff003e,#ff003c,#ff003a,#ff0038,#ff0037,#ff0035,#ff0034,#ff0033,#ff0031,#ff0030,#ff002f,#ff002e,#ff002c,#ff002b,#ff002a,#ff0029,#ff0028,#ff0027,#ff0026,#ff0025,#ff0024)"></i>
<i class="r" style="top:164px;height:2px;left:0.00px;width:611.80px;background:linear-gradient(90deg,#00fbff,#00f8ff,#00f5ff,#00f1ff,#00eeff,#00eaff,#00e7ff,#00e3ff,#00e0ff,#00dcff,#00d8ff,#00d4ff,#00d0ff,#00ccff,#16c8ff,#2dc4ff,#42c0ff,#57bcff,#6cb8ff,#80b4ff,#95afff,#a9abff,#bea6ff,#d2a1ff,#e79dff,#fb98ff,#ff8aef,#ff7cde,#ff6fcf,#ff64c2,#ff5bb6,#ff52ac,#ff4aa3,#ff439a,#ff3c92,#ff368b,#ff3085,#ff2b7f,#ff267a,#ff2274,#ff1e70,#ff1a6b,#ff1667,#ff1263,#ff0f60,#ff0b5c,#ff0859,#ff0556,#ff0253,#ff0050,#ff004e,#ff004b,#ff0049,#ff0047,#ff0045,#ff0043,#ff0041,#ff003f,#ff003d,#ff003b,#ff003a,#ff0038,#ff0037,#ff0035,#ff0034,#ff0032,#ff0031,#ff0030,#ff002f,#ff002d,#ff002c,#ff002b,#ff002a,#ff0029,#ff0028,#ff0027,#ff0026)"></i>
<i class="r" style="top:166px;height:2px;left:0.00px;width:611.80px;background:linear-gradient(90deg,#00f7ff,#00f4ff,#00f0ff,#00edff,#00eaff,#00e6ff,#00e3ff,#00dfff,#00dbff,#00d8ff,#00d4ff,#00d0ff,#00ccff,#00c8ff,#15c4ff,#2bc0ff,#40bcff,#55b8ff,#69b4ff,#7eb0ff,#92abff,#a6a7ff,#baa2ff,#ce9eff,#e399ff,#f794ff,#ff89f3,#ff7be2,#ff6ed3,#ff63c5,#ff5aba,#ff51af,#ff49a5,#ff429d,#ff3b95,#ff358e,#ff3087,#ff2a81,#ff267c,#ff2177,#ff1d72,#ff196d,#ff1569,#ff1165,#ff0e62,#ff0b5e,#ff085b,#ff0458,#ff0155,#ff0052,#ff004f,#ff004d,#ff004b,#ff0048,#ff0046,#ff0044,#ff0042,#ff0040,#ff003e,#ff003d,#ff003b,#ff0039,#ff0038,#ff0036,#ff0035,#ff0034,#ff0032,#ff0031,#ff0030,#ff002e,#ff002d,#ff002c,#ff002b,#ff002a,#ff0029,#ff0028,#ff0027)"></i>
<i class="r" style="top:168px;height:2px;left:0.00px;width:611.80px;background:linear-gradient(90deg,#00f3ff,#00f0ff,#00ecff,#00e9ff,#00e5ff,#00e2ff,#00dfff,#00dbff,#00d7ff,#00d4ff,#00d0ff,#00ccff,#00c8ff,#00c5ff,#14c1ff,#2abdff,#3fb9ff,#53b4ff,#67b0ff,#7bacff,#8fa8ff,#a3a3ff,#b79fff,#cb9aff,#df96ff,#f391ff,#ff88f8,#ff7ae6,#ff6ed6,#ff63c9,#ff59bd,#ff50b2,#ff48a8,#ff41a0,#ff3b98,#ff3590,#ff2f8a,#ff2a84,#ff257e,#ff2079,#ff1c74,#ff186f,#ff146b,#ff1167,#ff0d63,#ff0a60,#ff075d,#ff0459,#ff0056,#ff0054,#ff0051,#ff004e,#ff004c,#ff004a,#ff0048,#ff0045,#ff0043,#ff0042,#ff0040,#ff003e,#ff003c,#ff003b,#ff0039,#ff0038,#ff0036,#ff0035,#ff0033,#ff0032,#ff0031,#ff0030,#ff002e,#ff002d,#ff002c,#ff002b,#ff002a,#ff0029,#ff0028)"></i>
<i class="r" style="top:170px;height:2px;left:0.00px;width:611.80px;background:linear-gradient(90deg,#00efff,#00ecff,#00e8ff,#00e5ff,#00e2ff,#00deff,#00dbff,#00d7ff,#00d3ff,#00d0ff,#00ccff,#00c8ff,#00c5ff,#00c1ff,#13bdff,#28b9ff,#3db5ff,#51b1ff,#65adff,#79a8ff,#8ca4ff,#a0a0ff,#b39bff,#c797ff,#db92ff,#ee8eff,#ff87fc,#ff79ea,#ff6dda,#ff62cc,#ff58c0,#ff4fb5,#ff48ab,#ff40a3,#ff3a9a,#ff3493,#ff2e8c,#ff2986,#ff2480,#ff207b,#ff1c76,#ff1871,#ff146d,#ff1069,#ff0d65,#ff0962,#ff065e,#ff035b,#ff0058,#ff0055,#ff0053,#ff0050,#ff004d,#ff004b,#ff0049,#ff0047,#ff0045,#ff0043,#ff0041,#ff003f,#ff003d,#ff003c,#ff003a,#ff0039,#ff0037,#ff0036,#ff0034,#ff0033,#ff0032,#ff0031,#ff002f,#ff002e,#ff002d,#ff002c,#ff002b,#ff002a,#ff0029)"></i>
<i class="r" style="top:172px;height:2px;left:0.00px;width:603.75px;background:linear-gradient(90deg,#00ebff,#00e8ff,#00e4ff,#00e1ff,#00deff,#00daff,#00d7ff,#00d3ff,#00d0ff,#00ccff,#00c8ff,#00c5ff,#00c1ff,#00bdff,#12b9ff,#27b5ff,#3cb1ff,#4fadff,#63a9ff,#76a5ff,#8aa1ff,#9d9cff,#b098ff,#c393ff,#d78fff,#ea8aff,#fe86ff,#ff78ee,#ff6cde,#ff61d0,#ff57c4,#ff4fb8,#ff47ae,#ff40a5,#ff399d,#ff3396,#ff2e8f,#ff2888,#ff2483,#ff1f7d,#ff1b78,#ff1773,#ff136f,#ff106b,#ff0c67,#ff0963,#ff0660,#ff025d,#ff005a,#ff0057,#ff0054,#ff0051,#ff004f,#ff004d,#ff004a,#ff0048,#ff0046,#ff0044,#ff0042,#ff0040,#ff003f,#ff003d,#ff003b,#ff003a,#ff0038,#ff0037,#ff0036,#ff0034,#ff0033,#ff0032,#ff0030,#ff002f,#ff002e,#ff002d,#ff002c,#ff002b)"></i>
<i class="r" style="top:174px;height:2px;left:0.00px;width:603.75px;background:linear-gradient(90deg,#00e7ff,#00e4ff,#00e1ff,#00ddff,#00daff,#00d6ff,#00d3ff,#00d0ff,#00ccff,#00c8ff,#00c5ff,#00c1ff,#00bdff,#00baff,#11b6ff,#26b2ff,#3aaeff,#4eaaff,#61a6ff,#74a2ff,#879dff,#9a99ff,#ad95ff,#c090ff,#d38cff,#e687ff,#f982ff,#ff77f2,#ff6be2,#ff60d4,#ff57c7,#ff4ebc,#ff46b1,#ff3fa8,#ff38a0,#ff3298,#ff2d91,#ff288b,#ff2385,#ff1e7f,#ff1a7a,#ff1675,#ff1371,#ff0f6d,#ff0b69,#ff0865,#ff0562,#ff015e,#ff005b,#ff0058,#ff0056,#ff0053,#ff0050,#ff004e,#ff004c,#ff004a,#ff0047,#ff0045,#ff0044,#ff0042,#ff0040,#ff003e,#ff003d,#ff003b,#ff003a,#ff0038,#ff0037,#ff0035,#ff0034,#ff0033,#ff0031,#ff0030,#ff002f,#ff002e,#ff002d,#ff002c)"></i>
<i class="r" style="top:176px;height:2px;left:0.00px;width:603.75px;background:linear-gradient(90deg,#00e3ff,#00e0ff,#00ddff,#00daff,#00d6ff,#00d3ff,#00cfff,#00ccff,#00c8ff,#00c5ff,#00c1ff,#00beff,#00baff,#00b6ff,#10b2ff,#25aeff,#39aaff,#4ca6ff,#5fa2ff,#729eff,#859aff,#9796ff,#aa91ff,#bd8dff,#d089ff,#e284ff,#f57fff,#ff76f6,#ff6ae6,#ff5fd7,#ff56ca,#ff4dbf,#ff45b4,#ff3eab,#ff38a2,#ff329b,#ff2c94,#ff278d,#ff2287,#ff1e81,#ff1a7c,#ff1677,#ff1273,#ff0e6f,#ff0b6b,#ff0767,#ff0463,#ff0160,#ff005d,#ff005a,#ff0057,#ff0054,#ff0052,#ff004f,#ff004d,#ff004b,#ff0049,#ff0047,#ff0045,#ff0043,#ff0041,#ff003f,#ff003e,#ff003c,#ff003b,#ff0039,#ff0038,#ff0036,#ff0035,#ff0034,#ff0033,#ff0031,#ff0030,#ff002f,#ff002e,#ff002d)"></i>
<i class="r" style="top:178px;height:2px;left:0.00px;width:603.75px;background:linear-gradient(90deg,#00e0ff,#00dcff,#00d9ff,#00d6ff,#00d3ff,#00cfff,#00ccff,#00c8ff,#00c5ff,#00c1ff,#00beff,#00baff,#00b6ff,#00b3ff,#0fafff,#23abff,#37a7ff,#4aa3ff,#5d9fff,#709bff,#8297ff,#9593ff,#a78eff,#ba8aff,#cc86ff,#df81ff,#f17cff,#ff76fa,#ff69e9,#ff5fdb,#ff55ce,#ff4cc2,#ff44b7,#ff3dae,#ff37a5,#ff319d,#ff2b96,#ff268f,#ff2289,#ff1d84,#ff197e,#ff1579,#ff1175,#ff0e71,#ff0a6d,#ff0769,#ff0365,#ff0062,#ff005f,#ff005c,#ff0059,#ff0056,#ff0053,#ff0051,#ff004f,#ff004c,#ff004a,#ff0048,#ff0046,#ff0044,#ff0042,#ff0041,#ff003f,#ff003d,#ff003c,#ff003a,#ff0039,#ff0037,#ff0036,#ff0035,#ff0034,#ff0032,#ff0031,#ff0030,#ff002f,#ff002e)"></i>
<i class="r" style="top:180px;height:2px;left:0.00px;width:603.75px;background:linear-gradient(90deg,#00dcff,#00d9ff,#00d6ff,#00d2ff,#00cfff,#00ccff,#00c8ff,#00c5ff,#00c1ff,#00beff,#00baff,#00b7ff,#00b3ff,#00afff,#0eacff,#22a8ff,#36a4ff,#49a0ff,#5b9cff,#6e98ff,#8094ff,#9290ff,#a48bff,#b687ff,#c983ff,#db7eff,#ed7aff,#ff75fe,#ff68ed,#ff5ede,#ff54d1,#ff4bc5,#ff44ba,#ff3db1,#ff36a8,#ff30a0,#ff2b99,#ff2692,#ff218c,#ff1c86,#ff1880,#ff147b,#ff1177,#ff0d72,#ff096e,#ff066b,#ff0367,#ff0063,#ff0060,#ff005d,#ff005a,#ff0057,#ff0055,#ff0052,#ff0050,#ff004e,#ff004c,#ff0049,#ff0047,#ff0045,#ff0044,#ff0042,#ff0040,#ff003f,#ff003d,#ff003b,#ff003a,#ff0039,#ff0037,#ff0036,#ff0035,#ff0033,#ff0032,#ff0031,#ff0030,#ff002f)"></i>
<i class="r" style="top:182px;height:2px;left:0.00px;width:595.70px;background:linear-gradient(90deg,#00d9ff,#00d5ff,#00d2ff,#00cfff,#00ccff,#00c8ff,#00c5ff,#00c2ff,#00beff,#00bbff,#00b7ff,#00b3ff,#00b0ff,#00acff,#0da8ff,#21a5ff,#34a1ff,#479dff,#5999ff,#6c95ff,#7e91ff,#908dff,#a188ff,#b384ff,#c580ff,#d77bff,#e977ff,#fb72ff,#ff68f1,#ff5de2,#ff53d4,#ff4bc8,#ff43bd,#ff3cb3,#ff35ab,#ff2fa2,#ff2a9b,#ff2594,#ff208e,#ff1c88,#ff1883,#ff147e,#ff1079,#ff0c74,#ff0970,#ff056c,#ff0269,#ff0065,#ff0062,#ff005f,#ff005c,#ff0059,#ff0056,#ff0054,#ff0051,#ff004f,#ff004d,#ff004b,#ff0049,#ff0047,#ff0045,#ff0043,#ff0041,#ff0040,#ff003e,#ff003d,#ff003b,#ff003a,#ff0038,#ff0037,#ff0036,#ff0034,#ff0033,#ff0032,#ff0031)"></i>
<i class="r" style="top:184px;height:2px;left:0.00px;width:595.70px;background:linear-gradient(90deg,#00d5ff,#00d2ff,#00cfff,#00ccff,#00c8ff,#00c5ff,#00c2ff,#00beff,#00bbff,#00b7ff,#00b4ff,#00b0ff,#00adff,#00a9ff,#0ca5ff,#20a2ff,#339eff,#469aff,#5896ff,#6a92ff,#7b8eff,#8d8aff,#9f86ff,#b081ff,#c27dff,#d479ff,#e674ff,#f770ff,#ff67f5,#ff5ce5,#ff52d8,#ff4acb,#ff42c0,#ff3bb6,#ff35ad,#ff2fa5,#ff299d,#ff2497,#ff1f90,#ff1b8a,#ff1785,#ff1380,#ff0f7b,#ff0c76,#ff0872,#ff056e,#ff016a,#ff0067,#ff0063,#ff0060,#ff005d,#ff005b,#ff0058,#ff0055,#ff0053,#ff0050,#ff004e,#ff004c,#ff004a,#ff0048,#ff0046,#ff0044,#ff0043,#ff0041,#ff003f,#ff003e,#ff003c,#ff003b,#ff0039,#ff0038,#ff0037,#ff0035,#ff0034,#ff0033,#ff0032)"></i>
<i class="r" style="top:186px;height:2px;left:0.00px;width:595.70px;background:linear-gradient(90deg,#00d2ff,#00cfff,#00ccff,#00c8ff,#00c5ff,#00c2ff,#00beff,#00bbff,#00b8ff,#00b4ff,#00b1ff,#00adff,#00aaff,#00a6ff,#0ba2ff,#1f9fff,#329bff,#4497ff,#5693ff,#688fff,#798bff,#8b87ff,#9c83ff,#ae7eff,#bf7aff,#d076ff,#e271ff,#f46dff,#ff66f9,#ff5be9,#ff52db,#ff49cf,#ff41c3,#ff3ab9,#ff34b0,#ff2ea8,#ff28a0,#ff2399,#ff1f92,#ff1a8c,#ff1687,#ff1282,#ff0e7d,#ff0b78,#ff0774,#ff0470,#ff006c,#ff0069,#ff0065,#ff0062,#ff005f,#ff005c,#ff0059,#ff0057,#ff0054,#ff0052,#ff0050,#ff004d,#ff004b,#ff0049,#ff0047,#ff0046,#ff0044,#ff0042,#ff0040,#ff003f,#ff003d,#ff003c,#ff003a,#ff0039,#ff0038,#ff0036,#ff0035,#ff0034,#ff0033)"></i>
<i class="r" style="top:188px;height:2px;left:0.00px;width:595.70px;background:linear-gradient(90deg,#00cfff,#00cbff,#00c8ff,#00c5ff,#00c2ff,#00bfff,#00bbff,#00b8ff,#00b5ff,#00b1ff,#00aeff,#00aaff,#00a7ff,#00a3ff,#0a9fff,#1e9cff,#3198ff,#4394ff,#5490ff,#668cff,#7788ff,#8884ff,#9a80ff,#ab7cff,#bc78ff,#cd73ff,#df6fff,#f06aff,#ff65fd,#ff5aed,#ff51de,#ff48d2,#ff40c6,#ff39bc,#ff33b3,#ff2daa,#ff28a2,#ff239b,#ff1e95,#ff1a8f,#ff1589,#ff1284,#ff0e7f,#ff0a7a,#ff0776,#ff0372,#ff006e,#ff006a,#ff0067,#ff0064,#ff0060,#ff005e,#ff005b,#ff0058,#ff0056,#ff0053,#ff0051,#ff004f,#ff004d,#ff004b,#ff0049,#ff0047,#ff0045,#ff0043,#ff0042,#ff0040,#ff003e,#ff003d,#ff003b,#ff003a,#ff0039,#ff0037,#ff0036,#ff0035,#ff0034)"></i>
<i class="r" style="top:190px;height:2px;left:0.00px;width:587.65px;background:linear-gradient(90deg,#00cbff,#00c8ff,#00c5ff,#00c2ff,#00bfff,#00bcff,#00b8ff,#00b5ff,#00b2ff,#00aeff,#00abff,#00a7ff,#00a4ff,#00a0ff,#099cff,#1d99ff,#2f95ff,#4191ff,#538dff,#6489ff,#7585ff,#8681ff,#977dff,#a879ff,#b975ff,#ca71ff,#db6cff,#ec68ff,#fd63ff,#ff59f0,#ff50e2,#ff47d5,#ff40c9,#ff39bf,#ff32b5,#ff2cad,#ff27a5,#ff229e,#ff1d97,#ff1991,#ff158b,#ff1186,#ff0d81,#ff0a7c,#ff0678,#ff0273,#ff0070,#ff006c,#ff0068,#ff0065,#ff0062,#ff005f,#ff005c,#ff005a,#ff0057,#ff0055,#ff0052,#ff0050,#ff004e,#ff004c,#ff004a,#ff0048,#ff0046,#ff0044,#ff0043,#ff0041,#ff0040,#ff003e,#ff003d,#ff003b,#ff003a,#ff0038,#ff0037,#ff0036)"></i>
<i class="r" style="top:192px;height:2px;left:0.00px;width:587.65px;background:linear-gradient(90deg,#00c8ff,#00c5ff,#00c2ff,#00bfff,#00bcff,#00b9ff,#00b5ff,#00b2ff,#00afff,#00abff,#00a8ff,#00a4ff,#00a1ff,#009dff,#089aff,#1c96ff,#2e92ff,#408eff,#518bff,#6287ff,#7383ff,#847fff,#957bff,#a577ff,#b672ff,#c76eff,#d86aff,#e966ff,#fa61ff,#ff58f4,#ff4fe5,#ff47d8,#ff3fcc,#ff38c2,#ff32b8,#ff2caf,#ff26a7,#ff21a0,#ff1d99,#ff1893,#ff148d,#ff1088,#ff0c83,#ff097e,#ff0579,#ff0275,#ff0071,#ff006e,#ff006a,#ff0067,#ff0064,#ff0061,#ff005e,#ff005b,#ff0058,#ff0056,#ff0054,#ff0051,#ff004f,#ff004d,#ff004b,#ff0049,#ff0047,#ff0046,#ff0044,#ff0042,#ff0041,#ff003f,#ff003e,#ff003c,#ff003b,#ff0039,#ff0038,#ff0037)"></i>
<i class="r" style="top:194px;height:2px;left:0.00px;width:587.65px;background:linear-gradient(90deg,#00c5ff,#00c2ff,#00bfff,#00bcff,#00b9ff,#00b6ff,#00b2ff,#00afff,#00acff,#00a8ff,#00a5ff,#00a2ff,#009eff,#009aff,#0797ff,#1b93ff,#2d90ff,#3e8cff,#4f88ff,#6084ff,#7180ff,#827cff,#9278ff,#a374ff,#b370ff,#c46cff,#d568ff,#e563ff,#f65fff,#ff58f8,#ff4ee9,#ff46db,#ff3ecf,#ff37c5,#ff31bb,#ff2bb2,#ff26aa,#ff21a2,#ff1c9c,#ff1795,#ff138f,#ff0f8a,#ff0c85,#ff0880,#ff057b,#ff0177,#ff0073,#ff006f,#ff006c,#ff0068,#ff0065,#ff0062,#ff005f,#ff005c,#ff005a,#ff0057,#ff0055,#ff0053,#ff0050,#ff004e,#ff004c,#ff004a,#ff0048,#ff0047,#ff0045,#ff0043,#ff0042,#ff0040,#ff003f,#ff003d,#ff003c,#ff003a,#ff0039,#ff0038)"></i>
<i class="r" style="top:196px;height:2px;left:0.00px;width:587.65px;background:linear-gradient(90deg,#00c2ff,#00bfff,#00bcff,#00b9ff,#00b6ff,#00b3ff,#00b0ff,#00acff,#00a9ff,#00a6ff,#00a2ff,#009fff,#009bff,#0098ff,#0794ff,#1a91ff,#2c8dff,#3d89ff,#4e85ff,#5f82ff,#6f7eff,#807aff,#9076ff,#a072ff,#b16eff,#c169ff,#d165ff,#e261ff,#f25dff,#ff57fb,#ff4dec,#ff45df,#ff3dd2,#ff36c8,#ff30be,#ff2ab5,#ff25ac,#ff20a5,#ff1b9e,#ff1797,#ff1391,#ff0f8c,#ff0b87,#ff0782,#ff047d,#ff0079,#ff0075,#ff0071,#ff006d,#ff006a,#ff0067,#ff0064,#ff0061,#ff005e,#ff005b,#ff0059,#ff0056,#ff0054,#ff0052,#ff0050,#ff004e,#ff004c,#ff004a,#ff0048,#ff0046,#ff0044,#ff0043,#ff0041,#ff0040,#ff003e,#ff003d,#ff003b,#ff003a,#ff0039)"></i>
<i class="r" style="top:198px;height:2px;left:0.00px;width:587.65px;background:linear-gradient(90deg,#00bfff,#00bcff,#00b9ff,#00b6ff,#00b3ff,#00b0ff,#00adff,#00aaff,#00a6ff,#00a3ff,#00a0ff,#009cff,#0099ff,#0095ff,#0692ff,#198eff,#2b8aff,#3c87ff,#4c83ff,#5d7fff,#6d7bff,#7d77ff,#8e73ff,#9e6fff,#ae6bff,#be67ff,#ce63ff,#de5fff,#ef5aff,#ff56ff,#ff4cef,#ff44e2,#ff3cd5,#ff35ca,#ff2fc0,#ff29b7,#ff24af,#ff1fa7,#ff1aa0,#ff169a,#ff1293,#ff0e8e,#ff0a88,#ff0784,#ff037f,#ff007b,#ff0076,#ff0073,#ff006f,#ff006b,#ff0068,#ff0065,#ff0062,#ff005f,#ff005d,#ff005a,#ff0058,#ff0055,#ff0053,#ff0051,#ff004f,#ff004d,#ff004b,#ff0049,#ff0047,#ff0046,#ff0044,#ff0042,#ff0041,#ff003f,#ff003e,#ff003d,#ff003b,#ff003a)"></i>
<i class="r" style="top:200px;height:2px;left:0.00px;width:579.60px;background:linear-gradient(90deg,#00bdff,#00baff,#00b7ff,#00b3ff,#00b0ff,#00adff,#00aaff,#00a7ff,#00a4ff,#00a0ff,#009dff,#0099ff,#0096ff,#0093ff,#058fff,#188bff,#2a88ff,#3a84ff,#4b80ff,#5b7dff,#6b79ff,#7b75ff,#8b71ff,#9b6dff,#ab69ff,#bb65ff,#cb61ff,#db5cff,#eb58ff,#fb54ff,#ff4cf3,#ff43e5,#ff3cd9,#ff35cd,#ff2ec3,#ff29ba,#ff23b1,#ff1eaa,#ff1aa2,#ff159c,#ff1196,#ff0d90,#ff0a8a,#ff0685,#ff0281,#ff007c,#ff0078,#ff0074,#ff0071,#ff006d,#ff006a,#ff0067,#ff0064,#ff0061,#ff005e,#ff005b,#ff0059,#ff0057,#ff0054,#ff0052,#ff0050,#ff004e,#ff004c,#ff004a,#ff0048,#ff0047,#ff0045,#ff0043,#ff0042,#ff0040,#ff003f,#ff003e,#ff003c)"></i>
<i class="r" style="top:202px;height:2px;left:0.00px;width:579.60px;background:linear-gradient(90deg,#00baff,#00b7ff,#00b4ff,#00b1ff,#00aeff,#00abff,#00a7ff,#00a4ff,#00a1ff,#009eff,#009aff,#0097ff,#0094ff,#0090ff,#048dff,#1789ff,#2885ff,#3982ff,#4a7eff,#5a7aff,#6a77ff,#7973ff,#896fff,#996bff,#a967ff,#b963ff,#c85fff,#d85aff,#e856ff,#f852ff,#ff4bf6,#ff42e8,#ff3bdc,#ff34d0,#ff2ec6,#ff28bc,#ff22b4,#ff1eac,#ff19a5,#ff159e,#ff1098,#ff0d92,#ff098c,#ff0587,#ff0183,#ff007e,#ff007a,#ff0076,#ff0072,#ff006f,#ff006b,#ff0068,#ff0065,#ff0062,#ff005f,#ff005d,#ff005a,#ff0058,#ff0056,#ff0053,#ff0051,#ff004f,#ff004d,#ff004b,#ff004a,#ff0048,#ff0046,#ff0044,#ff0043,#ff0041,#ff0040,#ff003f,#ff003d)"></i>
<i class="r" style="top:204px;height:2px;left:0.00px;width:579.60px;background:linear-gradient(90deg,#00b7ff,#00b4ff,#00b1ff,#00aeff,#00abff,#00a8ff,#00a5ff,#00a2ff,#009eff,#009bff,#0098ff,#0094ff,#0091ff,#008eff,#038aff,#1687ff,#2783ff,#387fff,#487cff,#5878ff,#6874ff,#7870ff,#876dff,#9769ff,#a665ff,#b661ff,#c55cff,#d558ff,#e554ff,#f450ff,#ff4afa,#ff41ec,#ff3adf,#ff33d3,#ff2dc9,#ff27bf,#ff22b6,#ff1dae,#ff18a7,#ff14a0,#ff109a,#ff0c94,#ff088e,#ff0489,#ff0084,#ff0080,#ff007c,#ff0078,#ff0074,#ff0070,#ff006d,#ff006a,#ff0067,#ff0064,#ff0061,#ff005e,#ff005c,#ff0059,#ff0057,#ff0055,#ff0052,#ff0050,#ff004e,#ff004d,#ff004b,#ff0049,#ff0047,#ff0046,#ff0044,#ff0042,#ff0041,#ff0040,#ff003e)"></i>
<i class="r" style="top:206px;height:2px;left:0.00px;width:579.60px;background:linear-gradient(90deg,#00b4ff,#00b1ff,#00afff,#00abff,#00a8ff,#00a5ff,#00a2ff,#009fff,#009cff,#0099ff,#0095ff,#0092ff,#008fff,#008bff,#0288ff,#1584ff,#2681ff,#377dff,#4779ff,#5776ff,#6672ff,#766eff,#856aff,#9466ff,#a463ff,#b35eff,#c35aff,#d256ff,#e252ff,#f14eff,#ff49fd,#ff41ef,#ff39e2,#ff32d6,#ff2ccb,#ff26c2,#ff21b9,#ff1cb1,#ff17a9,#ff13a2,#ff0f9c,#ff0b96,#ff0790,#ff048b,#ff0086,#ff0082,#ff007d,#ff0079,#ff0075,#ff0072,#ff006e,#ff006b,#ff0068,#ff0065,#ff0062,#ff0060,#ff005d,#ff005a,#ff0058,#ff0056,#ff0054,#ff0052,#ff0050,#ff004e,#ff004c,#ff004a,#ff0048,#ff0047,#ff0045,#ff0044,#ff0042,#ff0041,#ff003f)"></i>
<i class="r" style="top:208px;height:2px;left:0.00px;width:579.60px;background:linear-gradient(90deg,#00b2ff,#00afff,#00acff,#00a9ff,#00a6ff,#00a3ff,#00a0ff,#009dff,#0099ff,#0096ff,#0093ff,#0090ff,#008cff,#0089ff,#0285ff,#1482ff,#257eff,#367bff,#4577ff,#5574ff,#6470ff,#746cff,#8368ff,#9264ff,#a260ff,#b15cff,#c058ff,#cf54ff,#de50ff,#ee4cff,#fd48ff,#ff40f2,#ff38e5,#ff31d9,#ff2bce,#ff25c4,#ff20bb,#ff1bb3,#ff17ac,#ff12a5,#ff0e9e,#ff0a98,#ff0792,#ff038d,#ff0088,#ff0084,#ff007f,#ff007b,#ff0077,#ff0073,#ff0070,#ff006d,#ff0069,#ff0066,#ff0064,#ff0061,#ff005e,#ff005c,#ff0059,#ff0057,#ff0055,#ff0053,#ff0051,#ff004f,#ff004d,#ff004b,#ff0049,#ff0048,#ff0046,#ff0045,#ff0043,#ff0042,#ff0040)"></i>
<i class="r" style="top:210px;height:2px;left:0.00px;width:571.55px;background:linear-gradient(90deg,#00afff,#00acff,#00a9ff,#00a6ff,#00a3ff,#00a0ff,#009dff,#009aff,#0097ff,#0094ff,#0090ff,#008dff,#008aff,#0087ff,#0183ff,#1480ff,#247cff,#3479ff,#4475ff,#5471ff,#636eff,#726aff,#8166ff,#9062ff,#9f5eff,#ae5aff,#bd56ff,#cc52ff,#db4eff,#eb4aff,#fa46ff,#ff3ff5,#ff37e8,#ff31dc,#ff2ad1,#ff25c7,#ff1fbe,#ff1ab6,#ff16ae,#ff12a7,#ff0da0,#ff0a9a,#ff0694,#ff028f,#ff008a,#ff0085,#ff0081,#ff007d,#ff0079,#ff0075,#ff0072,#ff006e,#ff006b,#ff0068,#ff0065,#ff0062,#ff0060,#ff005d,#ff005b,#ff0058,#ff0056,#ff0054,#ff0052,#ff0050,#ff004e,#ff004c,#ff004b,#ff0049,#ff0047,#ff0046,#ff0044,#ff0043)"></i>
<i class="r" style="top:212px;height:2px;left:0.00px;width:571.55px;background:linear-gradient(90deg,#00adff,#00aaff,#00a7ff,#00a4ff,#00a1ff,#009eff,#009bff,#0098ff,#0095ff,#0091ff,#008eff,#008bff,#0088ff,#0084ff,#0081ff,#137dff,#237aff,#3376ff,#4373ff,#526fff,#616cff,#7068ff,#7f64ff,#8e60ff,#9d5cff,#ac59ff,#bb55ff,#ca50ff,#d84cff,#e748ff,#f644ff,#ff3ef9,#ff36eb,#ff30df,#ff2ad4,#ff24ca,#ff1fc0,#ff1ab8,#ff15b0,#ff11a9,#ff0da2,#ff099c,#ff0596,#ff0191,#ff008c,#ff0087,#ff0083,#ff007e,#ff007a,#ff0077,#ff0073,#ff0070,#ff006c,#ff0069,#ff0066,#ff0064,#ff0061,#ff005e,#ff005c,#ff005a,#ff0057,#ff0055,#ff0053,#ff0051,#ff004f,#ff004d,#ff004c,#ff004a,#ff0048,#ff0047,#ff0045,#ff0044)"></i>
<i class="r" style="top:214px;height:2px;left:0.00px;width:571.55px;background:linear-gradient(90deg,#00aaff,#00a7ff,#00a5ff,#00a2ff,#009fff,#009cff,#0098ff,#0095ff,#0092ff,#008fff,#008cff,#0089ff,#0085ff,#0082ff,#007fff,#127bff,#2278ff,#3274ff,#4271ff,#516dff,#606aff,#6f66ff,#7d62ff,#8c5eff,#9b5aff,#a957ff,#b853ff,#c74fff,#d64bff,#e446ff,#f342ff,#ff3dfc,#ff36ee,#ff2fe2,#ff29d7,#ff23cc,#ff1ec3,#ff19ba,#ff14b3,#ff10ab,#ff0ca4,#ff089e,#ff0498,#ff0093,#ff008e,#ff0089,#ff0084,#ff0080,#ff007c,#ff0078,#ff0075,#ff0071,#ff006e,#ff006b,#ff0068,#ff0065,#ff0062,#ff0060,#ff005d,#ff005b,#ff0059,#ff0056,#ff0054,#ff0052,#ff0050,#ff004f,#ff004d,#ff004b,#ff0049,#ff0048,#ff0046,#ff0045)"></i>
<i class="r" style="top:216px;height:2px;left:0.00px;width:571.55px;background:linear-gradient(90deg,#00a8ff,#00a5ff,#00a2ff,#009fff,#009cff,#0099ff,#0096ff,#0093ff,#0090ff,#008dff,#008aff,#0086ff,#0083ff,#0080ff,#007dff,#1179ff,#2276ff,#3172ff,#406fff,#4f6bff,#5e68ff,#6d64ff,#7b60ff,#8a5cff,#9959ff,#a755ff,#b651ff,#c44dff,#d349ff,#e145ff,#f040ff,#ff3cff,#ff35f1,#ff2ee5,#ff28d9,#ff22cf,#ff1dc6,#ff18bd,#ff14b5,#ff0fad,#ff0ba7,#ff07a0,#ff039a,#ff0095,#ff0090,#ff008b,#ff0086,#ff0082,#ff007e,#ff007a,#ff0076,#ff0073,#ff006f,#ff006c,#ff0069,#ff0066,#ff0064,#ff0061,#ff005f,#ff005c,#ff005a,#ff0058,#ff0056,#ff0053,#ff0052,#ff0050,#ff004e,#ff004c,#ff004a,#ff0049,#ff0047,#ff0046)"></i>
<i class="r" style="top:218px;height:2px;left:0.00px;width:563.50px;background:linear-gradient(90deg,#00a6ff,#00a3ff,#00a0ff,#009dff,#009aff,#0097ff,#0094ff,#0091ff,#008eff,#008bff,#0087ff,#0084ff,#0081ff,#007eff,#007aff,#1077ff,#2174ff,#3070ff,#3f6dff,#4e69ff,#5d66ff,#6b62ff,#7a5eff,#885bff,#9657ff,#a553ff,#b34fff,#c24bff,#d047ff,#de43ff,#ed3fff,#fb3aff,#ff34f4,#ff2de8,#ff27dc,#ff21d2,#ff1cc8,#ff17bf,#ff13b7,#ff0eb0,#ff0aa9,#ff06a2,#ff029c,#ff0097,#ff0091,#ff008d,#ff0088,#ff0083,#ff007f,#ff007b,#ff0078,#ff0074,#ff0071,#ff006e,#ff006b,#ff0068,#ff0065,#ff0062,#ff0060,#ff005d,#ff005b,#ff0059,#ff0057,#ff0055,#ff0053,#ff0051,#ff004f,#ff004d,#ff004b,#ff004a,#ff0048)"></i>
<i class="r" style="top:220px;height:2px;left:0.00px;width:563.50px;background:linear-gradient(90deg,#00a3ff,#00a0ff,#009eff,#009bff,#0098ff,#0095ff,#0092ff,#008fff,#008cff,#0089ff,#0085ff,#0082ff,#007fff,#007cff,#0078ff,#1075ff,#2072ff,#2f6eff,#3e6bff,#4d67ff,#5b64ff,#6a60ff,#785cff,#8659ff,#9455ff,#a351ff,#b14dff,#bf49ff,#cd45ff,#dc41ff,#ea3dff,#f839ff,#ff33f8,#ff2ceb,#ff26df,#ff21d4,#ff1bcb,#ff17c2,#ff12b9,#ff0eb2,#ff0aab,#ff06a4,#ff029e,#ff0099,#ff0093,#ff008e,#ff008a,#ff0085,#ff0081,#ff007d,#ff0079,#ff0076,#ff0072,#ff006f,#ff006c,#ff0069,#ff0066,#ff0064,#ff0061,#ff005f,#ff005c,#ff005a,#ff0058,#ff0056,#ff0054,#ff0052,#ff0050,#ff004e,#ff004c,#ff004b,#ff0049)"></i>
<i class="r" style="top:222px;height:2px;left:0.00px;width:563.50px;background:linear-gradient(90deg,#00a1ff,#009eff,#009bff,#0098ff,#0096ff,#0093ff,#0090ff,#008dff,#0089ff,#0086ff,#0083ff,#0080ff,#007dff,#007aff,#0076ff,#0f73ff,#1f70ff,#2e6cff,#3d69ff,#4b65ff,#5a62ff,#685eff,#765bff,#8457ff,#9253ff,#a04fff,#af4bff,#bd48ff,#cb44ff,#d940ff,#e73bff,#f537ff,#ff32fb,#ff2bee,#ff25e2,#ff20d7,#ff1bcd,#ff16c4,#ff11bc,#ff0db4,#ff09ad,#ff05a6,#ff01a0,#ff009b,#ff0095,#ff0090,#ff008b,#ff0087,#ff0083,#ff007f,#ff007b,#ff0077,#ff0074,#ff0071,#ff006d,#ff006b,#ff0068,#ff0065,#ff0062,#ff0060,#ff005e,#ff005b,#ff0059,#ff0057,#ff0055,#ff0053,#ff0051,#ff004f,#ff004e,#ff004c,#ff004a)"></i>
<i class="r" style="top:224px;height:2px;left:0.00px;width:563.50px;background:linear-gradient(90deg,#009fff,#009cff,#0099ff,#0096ff,#0093ff,#0090ff,#008dff,#008aff,#0087ff,#0084ff,#0081ff,#007eff,#007bff,#0078ff,#0074ff,#0e71ff,#1e6eff,#2d6aff,#3c67ff,#4a63ff,#5860ff,#675cff,#7559ff,#8355ff,#9051ff,#9e4eff,#ac4aff,#ba46ff,#c842ff,#d63eff,#e43aff,#f236ff,#ff31fe,#ff2bf1,#ff25e5,#ff1fda,#ff1ad0,#ff15c7,#ff10be,#ff0cb6,#ff08af,#ff04a9,#ff00a2,#ff009c,#ff0097,#ff0092,#ff008d,#ff0089,#ff0084,#ff0080,#ff007c,#ff0079,#ff0075,#ff0072,#ff006f,#ff006c,#ff0069,#ff0066,#ff0064,#ff0061,#ff005f,#ff005c,#ff005a,#ff0058,#ff0056,#ff0054,#ff0052,#ff0050,#ff004f,#ff004d,#ff004b)"></i>
<i class="r" style="top:226px;height:2px;left:0.00px;width:563.50px;background:linear-gradient(90deg,#009dff,#009aff,#0097ff,#0094ff,#0091ff,#008eff,#008bff,#0088ff,#0085ff,#0082ff,#007fff,#007cff,#0079ff,#0076ff,#0072ff,#0d6fff,#1d6cff,#2c68ff,#3b65ff,#4962ff,#575eff,#655bff,#7357ff,#8153ff,#8e50ff,#9c4cff,#aa48ff,#b844ff,#c640ff,#d33cff,#e138ff,#ef34ff,#fd30ff,#ff2af4,#ff24e7,#ff1edc,#ff19d2,#ff14c9,#ff10c1,#ff0bb9,#ff07b1,#ff03ab,#ff00a4,#ff009e,#ff0099,#ff0094,#ff008f,#ff008a,#ff0086,#ff0082,#ff007e,#ff007a,#ff0077,#ff0073,#ff0070,#ff006d,#ff006a,#ff0068,#ff0065,#ff0062,#ff0060,#ff005e,#ff005b,#ff0059,#ff0057,#ff0055,#ff0053,#ff0051,#ff0050,#ff004e,#ff004c)"></i>
<i class="r" style="top:228px;height:2px;left:0.00px;width:555.45px;background:linear-gradient(90deg,#009aff,#0098ff,#0095ff,#0092ff,#008fff,#008cff,#0089ff,#0086ff,#0083ff,#0080ff,#007dff,#007aff,#0077ff,#0074ff,#0071ff,#0d6dff,#1c6aff,#2b67ff,#3a63ff,#4860ff,#565cff,#6459ff,#7155ff,#7f52ff,#8d4eff,#9a4aff,#a847ff,#b543ff,#c33fff,#d13bff,#de37ff,#ec33ff,#fa2fff,#ff29f7,#ff23ea,#ff1ddf,#ff18d5,#ff13cb,#ff0fc3,#ff0abb,#ff06b4,#ff02ad,#ff00a6,#ff00a0,#ff009b,#ff0096,#ff0091,#ff008c,#ff0088,#ff0083,#ff0080,#ff007c,#ff0078,#ff0075,#ff0072,#ff006f,#ff006c,#ff0069,#ff0066,#ff0064,#ff0061,#ff005f,#ff005d,#ff005a,#ff0058,#ff0056,#ff0054,#ff0053,#ff0051,#ff004f)"></i>
<i class="r" style="top:230px;height:2px;left:0.00px;width:555.45px;background:linear-gradient(90deg,#0098ff,#0096ff,#0093ff,#0090ff,#008dff,#008aff,#0087ff,#0084ff,#0081ff,#007eff,#007bff,#0078ff,#0075ff,#0072ff,#006fff,#0c6bff,#1c68ff,#2a65ff,#3961ff,#475eff,#545bff,#6257ff,#7054ff,#7d50ff,#8b4cff,#9849ff,#a645ff,#b341ff,#c13dff,#ce39ff,#dc35ff,#e931ff,#f72dff,#ff28fa,#ff22ed,#ff1ce2,#ff17d7,#ff12ce,#ff0ec5,#ff0abd,#ff05b6,#ff01af,#ff00a8,#ff00a2,#ff009d,#ff0097,#ff0092,#ff008e,#ff0089,#ff0085,#ff0081,#ff007d,#ff007a,#ff0076,#ff0073,#ff0070,#ff006d,#ff006a,#ff0068,#ff0065,#ff0062,#ff0060,#ff005e,#ff005c,#ff005a,#ff0057,#ff0056,#ff0054,#ff0052,#ff0050)"></i>
<i class="r" style="top:232px;height:2px;left:0.00px;width:555.45px;background:linear-gradient(90deg,#0096ff,#0094ff,#0091ff,#008eff,#008bff,#0088ff,#0085ff,#0082ff,#007fff,#007cff,#0079ff,#0076ff,#0073ff,#0070ff,#006dff,#0b6aff,#1b66ff,#2963ff,#3860ff,#455cff,#5359ff,#6155ff,#6e52ff,#7c4eff,#894bff,#9647ff,#a443ff,#b140ff,#be3cff,#cc38ff,#d934ff,#e730ff,#f42cff,#ff27fd,#ff21f0,#ff1ce4,#ff16da,#ff12d0,#ff0dc8,#ff09bf,#ff05b8,#ff00b1,#ff00aa,#ff00a4,#ff009f,#ff0099,#ff0094,#ff008f,#ff008b,#ff0087,#ff0083,#ff007f,#ff007b,#ff0078,#ff0075,#ff0071,#ff006e,#ff006c,#ff0069,#ff0066,#ff0064,#ff0061,#ff005f,#ff005d,#ff005b,#ff0059,#ff0057,#ff0055,#ff0053,#ff0051)"></i>
<i class="r" style="top:234px;height:2px;left:0.00px;width:555.45px;background:linear-gradient(90deg,#0094ff,#0092ff,#008fff,#008cff,#0089ff,#0086ff,#0083ff,#0080ff,#007eff,#007bff,#0078ff,#0074ff,#0071ff,#006eff,#006bff,#0b68ff,#1a65ff,#2861ff,#375eff,#445bff,#5257ff,#5f54ff,#6d50ff,#7a4dff,#8749ff,#9446ff,#a242ff,#af3eff,#bc3aff,#c936ff,#d632ff,#e42eff,#f12aff,#fe26ff,#ff20f3,#ff1be7,#ff16dd,#ff11d3,#ff0cca,#ff08c2,#ff04ba,#ff00b3,#ff00ac,#ff00a6,#ff00a0,#ff009b,#ff0096,#ff0091,#ff008d,#ff0088,#ff0084,#ff0080,#ff007d,#ff0079,#ff0076,#ff0073,#ff0070,#ff006d,#ff006a,#ff0067,#ff0065,#ff0063,#ff0060,#ff005e,#ff005c,#ff005a,#ff0058,#ff0056,#ff0054,#ff0052)"></i>
<i class="r" style="top:236px;height:2px;left:0.00px;width:547.40px;background:linear-gradient(90deg,#0092ff,#0090ff,#008dff,#008aff,#0087ff,#0084ff,#0081ff,#007fff,#007cff,#0079ff,#0076ff,#0073ff,#0070ff,#006cff,#0069ff,#0a66ff,#1963ff,#2860ff,#365cff,#4359ff,#5156ff,#5e52ff,#6b4fff,#784bff,#8548ff,#9244ff,#a040ff,#ad3dff,#ba39ff,#c735ff,#d431ff,#e12dff,#ee29ff,#fb25ff,#ff1ff6,#ff1aea,#ff15df,#ff10d5,#ff0bcc,#ff07c4,#ff03bc,#ff00b5,#ff00ae,#ff00a8,#ff00a2,#ff009d,#ff0098,#ff0093,#ff008e,#ff008a,#ff0086,#ff0082,#ff007e,#ff007b,#ff0077,#ff0074,#ff0071,#ff006e,#ff006b,#ff0069,#ff0066,#ff0064,#ff0061,#ff005f,#ff005d,#ff005b,#ff0059,#ff0057,#ff0055)"></i>
<i class="r" style="top:238px;height:2px;left:0.00px;width:547.40px;background:linear-gradient(90deg,#0090ff,#008eff,#008bff,#0088ff,#0085ff,#0082ff,#0080ff,#007dff,#007aff,#0077ff,#0074ff,#0071ff,#006eff,#006bff,#0068ff,#0964ff,#1861ff,#275eff,#355bff,#4257ff,#4f54ff,#5d51ff,#6a4dff,#774aff,#8446ff,#9143ff,#9e3fff,#ab3bff,#b737ff,#c434ff,#d130ff,#de2cff,#eb28ff,#f923ff,#ff1ef8,#ff19ed,#ff14e2,#ff0fd8,#ff0bcf,#ff06c6,#ff02be,#ff00b7,#ff00b0,#ff00aa,#ff00a4,#ff009f,#ff0099,#ff0094,#ff0090,#ff008b,#ff0087,#ff0083,#ff0080,#ff007c,#ff0079,#ff0076,#ff0072,#ff0070,#ff006d,#ff006a,#ff0067,#ff0065,#ff0063,#ff0060,#ff005e,#ff005c,#ff005a,#ff0058,#ff0056)"></i>
<i class="r" style="top:240px;height:2px;left:0.00px;width:547.40px;background:linear-gradient(90deg,#008eff,#008cff,#0089ff,#0086ff,#0083ff,#0081ff,#007eff,#007bff,#0078ff,#0075ff,#0072ff,#006fff,#006cff,#0069ff,#0066ff,#0963ff,#1860ff,#265cff,#3459ff,#4156ff,#4e52ff,#5b4fff,#684cff,#7548ff,#8245ff,#8f41ff,#9c3dff,#a83aff,#b536ff,#c232ff,#cf2eff,#dc2aff,#e926ff,#f622ff,#ff1efb,#ff18ef,#ff13e4,#ff0eda,#ff0ad1,#ff05c8,#ff01c1,#ff00b9,#ff00b2,#ff00ac,#ff00a6,#ff00a0,#ff009b,#ff0096,#ff0092,#ff008d,#ff0089,#ff0085,#ff0081,#ff007e,#ff007a,#ff0077,#ff0074,#ff0071,#ff006e,#ff006b,#ff0069,#ff0066,#ff0064,#ff0061,#ff005f,#ff005d,#ff005b,#ff0059,#ff0057)"></i>
<i class="r" style="top:242px;height:2px;left:0.00px;width:547.40px;background:linear-gradient(90deg,#008dff,#008aff,#0087ff,#0084ff,#0082ff,#007fff,#007cff,#0079ff,#0076ff,#0073ff,#0070ff,#006dff,#006aff,#0067ff,#0064ff,#0861ff,#175eff,#255bff,#3357ff,#4054ff,#4d51ff,#5a4eff,#674aff,#7447ff,#8043ff,#8d40ff,#9a3cff,#a638ff,#b335ff,#c031ff,#cd2dff,#d929ff,#e625ff,#f321ff,#ff1dfe,#ff17f2,#ff12e7,#ff0ddd,#ff09d3,#ff04cb,#ff00c3,#ff00bb,#ff00b4,#ff00ae,#ff00a8,#ff00a2,#ff009d,#ff0098,#ff0093,#ff008f,#ff008a,#ff0086,#ff0083,#ff007f,#ff007c,#ff0078,#ff0075,#ff0072,#ff006f,#ff006d,#ff006a,#ff0067,#ff0065,#ff0063,#ff0060,#ff005e,#ff005c,#ff005a,#ff0058)"></i>
<i class="r" style="top:244px;height:2px;left:0.00px;width:547.40px;background:linear-gradient(90deg,#008bff,#0088ff,#0085ff,#0083ff,#0080ff,#007dff,#007aff,#0077ff,#0074ff,#0072ff,#006fff,#006cff,#0069ff,#0066ff,#0063ff,#075fff,#165cff,#2459ff,#3256ff,#3f53ff,#4c4fff,#594cff,#6549ff,#7245ff,#7f42ff,#8b3eff,#983bff,#a437ff,#b133ff,#be2fff,#ca2cff,#d728ff,#e324ff,#f020ff,#fd1bff,#ff16f5,#ff11ea,#ff0cdf,#ff08d6,#ff03cd,#ff00c5,#ff00bd,#ff00b6,#ff00b0,#ff00aa,#ff00a4,#ff009f,#ff009a,#ff0095,#ff0090,#ff008c,#ff0088,#ff0084,#ff0080,#ff007d,#ff007a,#ff0077,#ff0073,#ff0071,#ff006e,#ff006b,#ff0069,#ff0066,#ff0064,#ff0061,#ff005f,#ff005d,#ff005b,#ff0059)"></i>
<i class="r" style="top:246px;height:2px;left:0.00px;width:539.35px;background:linear-gradient(90deg,#0089ff,#0086ff,#0083ff,#0081ff,#007eff,#007bff,#0078ff,#0076ff,#0073ff,#0070ff,#006dff,#006aff,#0067ff,#0064ff,#0061ff,#075eff,#165bff,#2358ff,#3154ff,#3e51ff,#4b4eff,#574bff,#6447ff,#7144ff,#7d40ff,#8a3dff,#9639ff,#a336ff,#af32ff,#bb2eff,#c82aff,#d426ff,#e122ff,#ed1eff,#fa1aff,#ff15f8,#ff10ec,#ff0ce2,#ff07d8,#ff02cf,#ff00c7,#ff00c0,#ff00b8,#ff00b2,#ff00ac,#ff00a6,#ff00a0,#ff009b,#ff0097,#ff0092,#ff008e,#ff008a,#ff0086,#ff0082,#ff007e,#ff007b,#ff0078,#ff0075,#ff0072,#ff006f,#ff006c,#ff006a,#ff0067,#ff0065,#ff0063,#ff0060,#ff005e,#ff005c)"></i>
<i class="r" style="top:248px;height:2px;left:0.00px;width:539.35px;background:linear-gradient(90deg,#0087ff,#0084ff,#0082ff,#007fff,#007cff,#007aff,#0077ff,#0074ff,#0071ff,#006eff,#006bff,#0068ff,#0065ff,#0062ff,#005fff,#065cff,#1559ff,#2356ff,#3053ff,#3d50ff,#4a4cff,#5649ff,#6346ff,#6f42ff,#7c3fff,#883bff,#9438ff,#a134ff,#ad31ff,#b92dff,#c629ff,#d225ff,#de21ff,#eb1dff,#f719ff,#ff14fa,#ff0fef,#ff0be4,#ff06db,#ff01d2,#ff00c9,#ff00c2,#ff00ba,#ff00b4,#ff00ae,#ff00a8,#ff00a2,#ff009d,#ff0098,#ff0094,#ff008f,#ff008b,#ff0087,#ff0083,#ff0080,#ff007c,#ff0079,#ff0076,#ff0073,#ff0070,#ff006e,#ff006b,#ff0068,#ff0066,#ff0064,#ff0062,#ff005f,#ff005d)"></i>
<i class="r" style="top:250px;height:2px;left:0.00px;width:539.35px;background:linear-gradient(90deg,#0085ff,#0083ff,#0080ff,#007dff,#007bff,#0078ff,#0075ff,#0072ff,#006fff,#006dff,#006aff,#0067ff,#0064ff,#0061ff,#005eff,#055bff,#1458ff,#2255ff,#2f51ff,#3c4eff,#494bff,#5548ff,#6144ff,#6e41ff,#7a3eff,#863aff,#9337ff,#9f33ff,#ab2fff,#b72cff,#c328ff,#d024ff,#dc20ff,#e81cff,#f518ff,#ff14fd,#ff0ff1,#ff0ae7,#ff05dd,#ff00d4,#ff00cc,#ff00c4,#ff00bd,#ff00b6,#ff00af,#ff00aa,#ff00a4,#ff009f,#ff009a,#ff0095,#ff0091,#ff008d,#ff0089,#ff0085,#ff0081,#ff007e,#ff007b,#ff0077,#ff0074,#ff0072,#ff006f,#ff006c,#ff006a,#ff0067,#ff0065,#ff0063,#ff0061,#ff005e)"></i>
<i class="r" style="top:252px;height:2px;left:0.00px;width:539.35px;background:linear-gradient(90deg,#0084ff,#0081ff,#007eff,#007cff,#0079ff,#0076ff,#0073ff,#0071ff,#006eff,#006bff,#0068ff,#0065ff,#0062ff,#005fff,#005cff,#0559ff,#1456ff,#2153ff,#2e50ff,#3b4dff,#474aff,#5446ff,#6043ff,#6c40ff,#793cff,#8539ff,#9135ff,#9d32ff,#a92eff,#b52aff,#c127ff,#cd23ff,#da1fff,#e61bff,#f217ff,#fe13ff,#ff0ef4,#ff09e9,#ff04df,#ff00d6,#ff00ce,#ff00c6,#ff00bf,#ff00b8,#ff00b1,#ff00ab,#ff00a6,#ff00a1,#ff009c,#ff0097,#ff0092,#ff008e,#ff008a,#ff0086,#ff0083,#ff007f,#ff007c,#ff0079,#ff0076,#ff0073,#ff0070,#ff006d,#ff006b,#ff0068,#ff0066,#ff0064,#ff0062,#ff005f)"></i>
<i class="r" style="top:254px;height:2px;left:0.00px;width:539.35px;background:linear-gradient(90deg,#0082ff,#007fff,#007dff,#007aff,#0077ff,#0075ff,#0072ff,#006fff,#006cff,#0069ff,#0067ff,#0064ff,#0061ff,#005eff,#005bff,#0458ff,#1355ff,#2052ff,#2d4fff,#3a4bff,#4648ff,#5345ff,#5f42ff,#6b3eff,#773bff,#8337ff,#8f34ff,#9b30ff,#a72dff,#b329ff,#bf25ff,#cb22ff,#d71eff,#e31aff,#ef16ff,#fb11ff,#ff0df7,#ff08ec,#ff03e2,#ff00d8,#ff00d0,#ff00c8,#ff00c1,#ff00ba,#ff00b3,#ff00ad,#ff00a8,#ff00a2,#ff009d,#ff0098,#ff0094,#ff0090,#ff008c,#ff0088,#ff0084,#ff0081,#ff007d,#ff007a,#ff0077,#ff0074,#ff0071,#ff006f,#ff006c,#ff006a,#ff0067,#ff0065,#ff0063,#ff0061)"></i>
<i class="r" style="top:256px;height:2px;left:0.00px;width:531.30px;background:linear-gradient(90deg,#0080ff,#007eff,#007bff,#0078ff,#0076ff,#0073ff,#0070ff,#006dff,#006bff,#0068ff,#0065ff,#0062ff,#005fff,#005cff,#0059ff,#0456ff,#1253ff,#2050ff,#2c4dff,#394aff,#4547ff,#5244ff,#5e40ff,#6a3dff,#763aff,#8236ff,#8d33ff,#992fff,#a52cff,#b128ff,#bd24ff,#c920ff,#d51dff,#e119ff,#ed15ff,#f910ff,#ff0cf9,#ff07ee,#ff02e4,#ff00db,#ff00d2,#ff00ca,#ff00c3,#ff00bc,#ff00b5,#ff00af,#ff00a9,#ff00a4,#ff009f,#ff009a,#ff0096,#ff0091,#ff008d,#ff0089,#ff0086,#ff0082,#ff007f,#ff007b,#ff0078,#ff0075,#ff0073,#ff0070,#ff006d,#ff006b,#ff0068,#ff0066,#ff0064)"></i>
<i class="r" style="top:258px;height:2px;left:0.00px;width:531.30px;background:linear-gradient(90deg,#007eff,#007cff,#0079ff,#0077ff,#0074ff,#0071ff,#006fff,#006cff,#0069ff,#0066ff,#0063ff,#0061ff,#005eff,#005bff,#0058ff,#0355ff,#1252ff,#1f4fff,#2c4cff,#3849ff,#4445ff,#5042ff,#5c3fff,#683cff,#7438ff,#8035ff,#8c31ff,#982eff,#a32aff,#af27ff,#bb23ff,#c71fff,#d31bff,#de18ff,#ea13ff,#f60fff,#ff0bfc,#ff06f1,#ff01e7,#ff00dd,#ff00d4,#ff00cc,#ff00c5,#ff00be,#ff00b7,#ff00b1,#ff00ab,#ff00a6,#ff00a1,#ff009c,#ff0097,#ff0093,#ff008f,#ff008b,#ff0087,#ff0083,#ff0080,#ff007d,#ff007a,#ff0077,#ff0074,#ff0071,#ff006e,#ff006c,#ff0069,#ff0067,#ff0065)"></i>
<i class="r" style="top:260px;height:2px;left:0.00px;width:531.30px;background:linear-gradient(90deg,#007dff,#007aff,#0078ff,#0075ff,#0072ff,#0070ff,#006dff,#006aff,#0068ff,#0065ff,#0062ff,#005fff,#005cff,#0059ff,#0056ff,#0253ff,#1150ff,#1e4dff,#2b4aff,#3747ff,#4344ff,#4f41ff,#5b3eff,#673aff,#7337ff,#7f34ff,#8a30ff,#962dff,#a229ff,#ad26ff,#b922ff,#c51eff,#d01aff,#dc16ff,#e812ff,#f40eff,#ff0aff,#ff05f3,#ff00e9,#ff00df,#ff00d7,#ff00ce,#ff00c7,#ff00c0,#ff00b9,#ff00b3,#ff00ad,#ff00a7,#ff00a2,#ff009d,#ff0099,#ff0094,#ff0090,#ff008c,#ff0088,#ff0085,#ff0081,#ff007e,#ff007b,#ff0078,#ff0075,#ff0072,#ff0070,#ff006d,#ff006b,#ff0068,#ff0066)"></i>
<i class="r" style="top:262px;height:2px;left:0.00px;width:531.30px;background:linear-gradient(90deg,#007bff,#0079ff,#0076ff,#0074ff,#0071ff,#006eff,#006cff,#0069ff,#0066ff,#0063ff,#0061ff,#005eff,#005bff,#0058ff,#0055ff,#0252ff,#104fff,#1d4cff,#2a49ff,#3646ff,#4243ff,#4e40ff,#5a3cff,#6639ff,#7136ff,#7d32ff,#892fff,#942cff,#a028ff,#ab24ff,#b721ff,#c31dff,#ce19ff,#da15ff,#e511ff,#f10dff,#fd09ff,#ff04f6,#ff00eb,#ff00e2,#ff00d9,#ff00d0,#ff00c9,#ff00c2,#ff00bb,#ff00b5,#ff00af,#ff00a9,#ff00a4,#ff009f,#ff009a,#ff0096,#ff0092,#ff008e,#ff008a,#ff0086,#ff0083,#ff007f,#ff007c,#ff0079,#ff0076,#ff0073,#ff0071,#ff006e,#ff006c,#ff0069,#ff0067)"></i>
<i class="r" style="top:264px;height:2px;left:0.00px;width:523.25px;background:linear-gradient(90deg,#007aff,#0077ff,#0075ff,#0072ff,#006fff,#006dff,#006aff,#0067ff,#0065ff,#0062ff,#005fff,#005cff,#0059ff,#0057ff,#0054ff,#0151ff,#104eff,#1d4bff,#2948ff,#3545ff,#4142ff,#4d3eff,#593bff,#6538ff,#7035ff,#7c31ff,#872eff,#932aff,#9e27ff,#aa23ff,#b520ff,#c01cff,#cc18ff,#d714ff,#e310ff,#ef0cff,#fa08ff,#ff03f8,#ff00ee,#ff00e4,#ff00db,#ff00d3,#ff00cb,#ff00c4,#ff00bd,#ff00b6,#ff00b0,#ff00ab,#ff00a6,#ff00a1,#ff009c,#ff0097,#ff0093,#ff008f,#ff008b,#ff0088,#ff0084,#ff0081,#ff007e,#ff007a,#ff0078,#ff0075,#ff0072,#ff006f,#ff006d,#ff006b)"></i>
<i class="r" style="top:266px;height:2px;left:0.00px;width:523.25px;background:linear-gradient(90deg,#0078ff,#0076ff,#0073ff,#0070ff,#006eff,#006bff,#0069ff,#0066ff,#0063ff,#0060ff,#005eff,#005bff,#0058ff,#0055ff,#0052ff,#004fff,#0f4cff,#1c49ff,#2846ff,#3543ff,#4040ff,#4c3dff,#583aff,#6337ff,#6f33ff,#7a30ff,#862dff,#9129ff,#9c26ff,#a822ff,#b31fff,#be1bff,#ca17ff,#d513ff,#e10fff,#ec0bff,#f807ff,#ff02fb,#ff00f0,#ff00e6,#ff00dd,#ff00d5,#ff00cd,#ff00c6,#ff00bf,#ff00b8,#ff00b2,#ff00ad,#ff00a7,#ff00a2,#ff009d,#ff0099,#ff0095,#ff0091,#ff008d,#ff0089,#ff0085,#ff0082,#ff007f,#ff007c,#ff0079,#ff0076,#ff0073,#ff0071,#ff006e,#ff006c)"></i>
<i class="r" style="top:268px;height:2px;left:0.00px;width:523.25px;background:linear-gradient(90deg,#0077ff,#0074ff,#0072ff,#006fff,#006cff,#006aff,#0067ff,#0064ff,#0062ff,#005fff,#005cff,#0059ff,#0057ff,#0054ff,#0051ff,#004eff,#0e4bff,#1b48ff,#2845ff,#3442ff,#403fff,#4b3cff,#5739ff,#6235ff,#6d32ff,#792fff,#842cff,#8f28ff,#9b25ff,#a621ff,#b11eff,#bc1aff,#c816ff,#d312ff,#de0eff,#ea0aff,#f506ff,#ff01fd,#ff00f3,#ff00e9,#ff00df,#ff00d7,#ff00cf,#ff00c8,#ff00c1,#ff00ba,#ff00b4,#ff00ae,#ff00a9,#ff00a4,#ff009f,#ff009a,#ff0096,#ff0092,#ff008e,#ff008a,#ff0087,#ff0083,#ff0080,#ff007d,#ff007a,#ff0077,#ff0074,#ff0072,#ff006f,#ff006d)"></i>
<i class="r" style="top:270px;height:2px;left:8.05px;width:515.20px;background:linear-gradient(90deg,#0073ff,#0070ff,#006eff,#006bff,#0068ff,#0066ff,#0063ff,#0060ff,#005eff,#005bff,#0058ff,#0055ff,#0053ff,#0050ff,#004dff,#0e4aff,#1b47ff,#2744ff,#3341ff,#3f3eff,#4a3bff,#5638ff,#6134ff,#6c31ff,#772eff,#832aff,#8e27ff,#9924ff,#a420ff,#af1cff,#bb19ff,#c615ff,#d111ff,#dc0dff,#e709ff,#f304ff,#fe00ff,#ff00f5,#ff00eb,#ff00e2,#ff00d9,#ff00d1,#ff00ca,#ff00c3,#ff00bc,#ff00b6,#ff00b0,#ff00ab,#ff00a5,#ff00a1,#ff009c,#ff0098,#ff0093,#ff008f,#ff008c,#ff0088,#ff0085,#ff0081,#ff007e,#ff007b,#ff0078,#ff0076,#ff0073,#ff0070,#ff006e)"></i>
<i class="r" style="top:272px;height:2px;left:8.05px;width:515.20px;background:linear-gradient(90deg,#0071ff,#006fff,#006cff,#0069ff,#0067ff,#0064ff,#0062ff,#005fff,#005cff,#005aff,#0057ff,#0054ff,#0051ff,#004eff,#004bff,#0d49ff,#1a46ff,#2643ff,#3240ff,#3e3dff,#4939ff,#5436ff,#6033ff,#6b30ff,#762dff,#8129ff,#8c26ff,#9722ff,#a21fff,#ae1bff,#b918ff,#c414ff,#cf10ff,#da0cff,#e508ff,#f003ff,#fb00ff,#ff00f8,#ff00ed,#ff00e4,#ff00db,#ff00d3,#ff00cc,#ff00c4,#ff00be,#ff00b8,#ff00b2,#ff00ac,#ff00a7,#ff00a2,#ff009e,#ff0099,#ff0095,#ff0091,#ff008d,#ff0089,#ff0086,#ff0083,#ff0080,#ff007c,#ff007a,#ff0077,#ff0074,#ff0071,#ff006f)"></i>
<i class="r" style="top:274px;height:2px;left:8.05px;width:507.15px;background:linear-gradient(90deg,#0070ff,#006dff,#006bff,#0068ff,#0065ff,#0063ff,#0060ff,#005eff,#005bff,#0058ff,#0055ff,#0053ff,#0050ff,#004dff,#004aff,#0d47ff,#1944ff,#2641ff,#313eff,#3d3bff,#4838ff,#5335ff,#5f32ff,#6a2fff,#752cff,#8028ff,#8b25ff,#9621ff,#a11eff,#ac1aff,#b717ff,#c213ff,#cd0fff,#d80bff,#e307ff,#ee02ff,#f900ff,#ff00fa,#ff00f0,#ff00e6,#ff00dd,#ff00d5,#ff00ce,#ff00c6,#ff00c0,#ff00b9,#ff00b4,#ff00ae,#ff00a9,#ff00a4,#ff009f,#ff009b,#ff0096,#ff0092,#ff008f,#ff008b,#ff0087,#ff0084,#ff0081,#ff007e,#ff007b,#ff0078,#ff0075,#ff0073)"></i>
<i class="r" style="top:276px;height:2px;left:8.05px;width:507.15px;background:linear-gradient(90deg,#006eff,#006cff,#0069ff,#0067ff,#0064ff,#0062ff,#005fff,#005cff,#005aff,#0057ff,#0054ff,#0051ff,#004fff,#004cff,#0049ff,#0c46ff,#1943ff,#2540ff,#303dff,#3c3aff,#4737ff,#5234ff,#5d31ff,#682eff,#732aff,#7e27ff,#8924ff,#9420ff,#9f1dff,#aa19ff,#b516ff,#c012ff,#cb0eff,#d60aff,#e106ff,#ec01ff,#f700ff,#ff00fc,#ff00f2,#ff00e8,#ff00e0,#ff00d7,#ff00d0,#ff00c8,#ff00c2,#ff00bb,#ff00b5,#ff00b0,#ff00aa,#ff00a5,#ff00a1,#ff009c,#ff0098,#ff0094,#ff0090,#ff008c,#ff0089,#ff0085,#ff0082,#ff007f,#ff007c,#ff0079,#ff0076,#ff0074)"></i>
<i class="r" style="top:278px;height:2px;left:8.05px;width:507.15px;background:linear-gradient(90deg,#006dff,#006aff,#0068ff,#0065ff,#0063ff,#0060ff,#005eff,#005bff,#0058ff,#0056ff,#0053ff,#0050ff,#004dff,#004bff,#0048ff,#0c45ff,#1842ff,#243fff,#303cff,#3b39ff,#4636ff,#5133ff,#5c30ff,#672dff,#7229ff,#7d26ff,#8823ff,#931fff,#9d1cff,#a818ff,#b315ff,#be11ff,#c90dff,#d409ff,#de05ff,#e900ff,#f400ff,#ff00ff,#ff00f4,#ff00eb,#ff00e2,#ff00d9,#ff00d2,#ff00ca,#ff00c3,#ff00bd,#ff00b7,#ff00b1,#ff00ac,#ff00a7,#ff00a2,#ff009e,#ff0099,#ff0095,#ff0091,#ff008e,#ff008a,#ff0087,#ff0083,#ff0080,#ff007d,#ff007a,#ff0078,#ff0075)"></i>
<i class="r" style="top:280px;height:2px;left:8.05px;width:507.15px;background:linear-gradient(90deg,#006bff,#0069ff,#0066ff,#0064ff,#0061ff,#005fff,#005cff,#005aff,#0057ff,#0054ff,#0052ff,#004fff,#004cff,#0049ff,#0047ff,#0b44ff,#1841ff,#233eff,#2f3bff,#3a38ff,#4535ff,#5032ff,#5b2fff,#662cff,#7128ff,#7c25ff,#8622ff,#911eff,#9c1bff,#a717ff,#b114ff,#bc10ff,#c70cff,#d108ff,#dc04ff,#e700ff,#f200ff,#fd00ff,#ff00f7,#ff00ed,#ff00e4,#ff00db,#ff00d4,#ff00cc,#ff00c5,#ff00bf,#ff00b9,#ff00b3,#ff00ae,#ff00a9,#ff00a4,#ff009f,#ff009b,#ff0097,#ff0093,#ff008f,#ff008b,#ff0088,#ff0085,#ff0081,#ff007e,#ff007c,#ff0079,#ff0076)"></i>
<i class="r" style="top:282px;height:2px;left:8.05px;width:499.10px;background:linear-gradient(90deg,#006aff,#0068ff,#0065ff,#0063ff,#0060ff,#005eff,#005bff,#0058ff,#0056ff,#0053ff,#0050ff,#004eff,#004bff,#0048ff,#0045ff,#0a43ff,#1740ff,#233dff,#2e3aff,#3937ff,#4434ff,#4f31ff,#5a2eff,#652aff,#7027ff,#7a24ff,#8521ff,#901dff,#9a1aff,#a516ff,#b013ff,#ba0fff,#c50bff,#cf07ff,#da03ff,#e500ff,#f000ff,#fa00ff,#ff00f9,#ff00ef,#ff00e6,#ff00dd,#ff00d6,#ff00ce,#ff00c7,#ff00c1,#ff00bb,#ff00b5,#ff00af,#ff00aa,#ff00a5,#ff00a1,#ff009c,#ff0098,#ff0094,#ff0090,#ff008d,#ff0089,#ff0086,#ff0083,#ff0080,#ff007d,#ff007a)"></i>
<i class="r" style="top:284px;height:2px;left:8.05px;width:499.10px;background:linear-gradient(90deg,#0069ff,#0066ff,#0064ff,#0061ff,#005fff,#005cff,#005aff,#0057ff,#0054ff,#0052ff,#004fff,#004cff,#004aff,#0047ff,#0044ff,#0a41ff,#163eff,#223cff,#2d39ff,#3936ff,#4433ff,#4e30ff,#592dff,#6429ff,#6e26ff,#7923ff,#8420ff,#8e1cff,#9919ff,#a315ff,#ae12ff,#b80eff,#c30aff,#cd06ff,#d802ff,#e300ff,#ed00ff,#f800ff,#ff00fb,#ff00f1,#ff00e8,#ff00e0,#ff00d8,#ff00d0,#ff00c9,#ff00c2,#ff00bc,#ff00b6,#ff00b1,#ff00ac,#ff00a7,#ff00a2,#ff009e,#ff009a,#ff0095,#ff0092,#ff008e,#ff008b,#ff0087,#ff0084,#ff0081,#ff007e,#ff007b)"></i>
<i class="r" style="top:286px;height:2px;left:16.10px;width:491.05px;background:linear-gradient(90deg,#0065ff,#0062ff,#0060ff,#005eff,#005bff,#0058ff,#0056ff,#0053ff,#0051ff,#004eff,#004bff,#0049ff,#0046ff,#0043ff,#0940ff,#163dff,#213aff,#2d38ff,#3835ff,#4332ff,#4d2fff,#582cff,#6328ff,#6d25ff,#7822ff,#821fff,#8d1bff,#9718ff,#a214ff,#ac11ff,#b70dff,#c109ff,#cb05ff,#d601ff,#e000ff,#eb00ff,#f600ff,#ff00fe,#ff00f4,#ff00ea,#ff00e2,#ff00da,#ff00d2,#ff00cb,#ff00c4,#ff00be,#ff00b8,#ff00b3,#ff00ad,#ff00a8,#ff00a4,#ff009f,#ff009b,#ff0097,#ff0093,#ff008f,#ff008c,#ff0088,#ff0085,#ff0082,#ff007f,#ff007c)"></i>
<i class="r" style="top:288px;height:2px;left:16.10px;width:491.05px;background:linear-gradient(90deg,#0064ff,#0061ff,#005fff,#005cff,#005aff,#0057ff,#0055ff,#0052ff,#004fff,#004dff,#004aff,#0047ff,#0045ff,#0042ff,#093fff,#153cff,#2139ff,#2c36ff,#3734ff,#4231ff,#4c2eff,#572aff,#6227ff,#6c24ff,#7621ff,#811eff,#8b1aff,#9617ff,#a014ff,#aa10ff,#b50cff,#bf08ff,#ca04ff,#d400ff,#de00ff,#e900ff,#f300ff,#fe00ff,#ff00f6,#ff00ed,#ff00e4,#ff00dc,#ff00d4,#ff00cd,#ff00c6,#ff00c0,#ff00ba,#ff00b4,#ff00af,#ff00aa,#ff00a5,#ff00a1,#ff009c,#ff0098,#ff0094,#ff0091,#ff008d,#ff008a,#ff0086,#ff0083,#ff0080,#ff007d)"></i>
<i class="r" style="top:290px;height:2px;left:16.10px;width:491.05px;background:linear-gradient(90deg,#0062ff,#0060ff,#005dff,#005bff,#0058ff,#0056ff,#0053ff,#0051ff,#004eff,#004cff,#0049ff,#0046ff,#0044ff,#0041ff,#083eff,#153bff,#2038ff,#2b35ff,#3632ff,#4130ff,#4c2dff,#5629ff,#6026ff,#6b23ff,#7520ff,#801dff,#8a19ff,#9416ff,#9e13ff,#a90fff,#b30bff,#bd07ff,#c803ff,#d200ff,#dc00ff,#e700ff,#f100ff,#fb00ff,#ff00f8,#ff00ef,#ff00e6,#ff00de,#ff00d6,#ff00cf,#ff00c8,#ff00c2,#ff00bc,#ff00b6,#ff00b1,#ff00ac,#ff00a7,#ff00a2,#ff009e,#ff009a,#ff0096,#ff0092,#ff008e,#ff008b,#ff0088,#ff0085,#ff0082,#ff007f)"></i>
<i class="r" style="top:292px;height:2px;left:16.10px;width:483.00px;background:linear-gradient(90deg,#0061ff,#005fff,#005cff,#005aff,#0057ff,#0055ff,#0052ff,#0050ff,#004dff,#004aff,#0048ff,#0045ff,#0042ff,#0040ff,#083dff,#143aff,#1f37ff,#2b34ff,#3531ff,#402eff,#4b2cff,#5528ff,#5f25ff,#6a22ff,#741fff,#7e1cff,#8919ff,#9315ff,#9d12ff,#a70eff,#b10aff,#bc07ff,#c602ff,#d000ff,#da00ff,#e500ff,#ef00ff,#f900ff,#ff00fb,#ff00f1,#ff00e8,#ff00e0,#ff00d8,#ff00d1,#ff00ca,#ff00c3,#ff00bd,#ff00b8,#ff00b2,#ff00ad,#ff00a8,#ff00a4,#ff009f,#ff009b,#ff0097,#ff0093,#ff0090,#ff008c,#ff0089,#ff0086,#ff0083)"></i>
<i class="r" style="top:294px;height:2px;left:16.10px;width:483.00px;background:linear-gradient(90deg,#0060ff,#005dff,#005bff,#0059ff,#0056ff,#0054ff,#0051ff,#004eff,#004cff,#0049ff,#0047ff,#0044ff,#0041ff,#003fff,#073cff,#1339ff,#1f36ff,#2a33ff,#3530ff,#3f2dff,#4a2bff,#5427ff,#5e24ff,#6921ff,#731eff,#7d1bff,#8718ff,#9114ff,#9b11ff,#a60dff,#b009ff,#ba06ff,#c401ff,#ce00ff,#d800ff,#e200ff,#ed00ff,#f700ff,#ff00fd,#ff00f3,#ff00ea,#ff00e2,#ff00da,#ff00d2,#ff00cc,#ff00c5,#ff00bf,#ff00b9,#ff00b4,#ff00af,#ff00aa,#ff00a5,#ff00a1,#ff009d,#ff0099,#ff0095,#ff0091,#ff008e,#ff008a,#ff0087,#ff0084)"></i>
<i class="r" style="top:296px;height:2px;left:16.10px;width:483.00px;background:linear-gradient(90deg,#005fff,#005cff,#005aff,#0057ff,#0055ff,#0052ff,#0050ff,#004dff,#004bff,#0048ff,#0046ff,#0043ff,#0040ff,#003dff,#073bff,#1338ff,#1e35ff,#2932ff,#342fff,#3e2cff,#492aff,#5327ff,#5d23ff,#6720ff,#721dff,#7c1aff,#8617ff,#9013ff,#9a10ff,#a40cff,#ae09ff,#b805ff,#c200ff,#cc00ff,#d600ff,#e000ff,#eb00ff,#f500ff,#ff00ff,#ff00f5,#ff00ec,#ff00e4,#ff00dc,#ff00d4,#ff00cd,#ff00c7,#ff00c1,#ff00bb,#ff00b5,#ff00b0,#ff00ab,#ff00a7,#ff00a2,#ff009e,#ff009a,#ff0096,#ff0092,#ff008f,#ff008b,#ff0088,#ff0085)"></i>
<i class="r" style="top:298px;height:2px;left:16.10px;width:483.00px;background:linear-gradient(90deg,#005dff,#005bff,#0059ff,#0056ff,#0054ff,#0051ff,#004fff,#004cff,#004aff,#0047ff,#0044ff,#0042ff,#003fff,#003cff,#063aff,#1237ff,#1e34ff,#2831ff,#332eff,#3e2bff,#4829ff,#5226ff,#5c23ff,#661fff,#701cff,#7a19ff,#8416ff,#8e12ff,#980fff,#a20bff,#ac08ff,#b604ff,#c000ff,#ca00ff,#d400ff,#de00ff,#e800ff,#f300ff,#fd00ff,#ff00f8,#ff00ee,#ff00e6,#ff00de,#ff00d6,#ff00cf,#ff00c9,#ff00c2,#ff00bd,#ff00b7,#ff00b2,#ff00ad,#ff00a8,#ff00a4,#ff009f,#ff009b,#ff0097,#ff0094,#ff0090,#ff008d,#ff0089,#ff0086)"></i>
<i class="r" style="top:300px;height:2px;left:16.10px;width:483.00px;background:linear-gradient(90deg,#005cff,#005aff,#0057ff,#0055ff,#0053ff,#0050ff,#004eff,#004bff,#0049ff,#0046ff,#0043ff,#0041ff,#003eff,#003bff,#0639ff,#1236ff,#1d33ff,#2830ff,#322dff,#3d2bff,#4728ff,#5125ff,#5b22ff,#651eff,#6f1bff,#7918ff,#8315ff,#8d12ff,#970eff,#a10bff,#ab07ff,#b503ff,#bf00ff,#c900ff,#d200ff,#dc00ff,#e600ff,#f000ff,#fa00ff,#ff00fa,#ff00f0,#ff00e8,#ff00e0,#ff00d8,#ff00d1,#ff00ca,#ff00c4,#ff00be,#ff00b9,#ff00b3,#ff00ae,#ff00aa,#ff00a5,#ff00a1,#ff009d,#ff0099,#ff0095,#ff0091,#ff008e,#ff008b,#ff0088)"></i>
<i class="r" style="top:302px;height:2px;left:24.15px;width:466.90px;background:linear-gradient(90deg,#0059ff,#0056ff,#0054ff,#0051ff,#004fff,#004cff,#004aff,#0047ff,#0045ff,#0042ff,#0040ff,#003dff,#003aff,#0538ff,#1135ff,#1c32ff,#272fff,#322cff,#3c2aff,#4627ff,#5024ff,#5a21ff,#641eff,#6e1aff,#7817ff,#8214ff,#8c11ff,#960dff,#9f0aff,#a906ff,#b302ff,#bd00ff,#c700ff,#d100ff,#da00ff,#e400ff,#ee00ff,#f800ff,#ff00fc,#ff00f3,#ff00ea,#ff00e2,#ff00da,#ff00d3,#ff00cc,#ff00c6,#ff00c0,#ff00ba,#ff00b5,#ff00b0,#ff00ab,#ff00a6,#ff00a2,#ff009e,#ff009a,#ff0096,#ff0093,#ff008f,#ff008c)"></i>
<i class="r" style="top:304px;height:2px;left:24.15px;width:466.90px;background:linear-gradient(90deg,#0058ff,#0055ff,#0053ff,#0050ff,#004eff,#004bff,#0049ff,#0046ff,#0044ff,#0041ff,#003fff,#003cff,#0039ff,#0537ff,#1134ff,#1c31ff,#272eff,#312bff,#3b29ff,#4526ff,#4f23ff,#5920ff,#631dff,#6d1aff,#7716ff,#8113ff,#8a10ff,#940cff,#9e09ff,#a805ff,#b101ff,#bb00ff,#c500ff,#cf00ff,#d800ff,#e200ff,#ec00ff,#f600ff,#ff00fe,#ff00f5,#ff00ec,#ff00e4,#ff00dc,#ff00d5,#ff00ce,#ff00c8,#ff00c2,#ff00bc,#ff00b6,#ff00b1,#ff00ad,#ff00a8,#ff00a4,#ff009f,#ff009b,#ff0098,#ff0094,#ff0090,#ff008d)"></i>
<i class="r" style="top:306px;height:2px;left:24.15px;width:466.90px;background:linear-gradient(90deg,#0056ff,#0054ff,#0052ff,#004fff,#004dff,#004aff,#0048ff,#0045ff,#0043ff,#0040ff,#003eff,#003bff,#0038ff,#0436ff,#1033ff,#1b30ff,#262dff,#302bff,#3a28ff,#4425ff,#4e22ff,#581fff,#621cff,#6c19ff,#7616ff,#7f12ff,#890fff,#930bff,#9c08ff,#a604ff,#b000ff,#b900ff,#c300ff,#cd00ff,#d700ff,#e000ff,#ea00ff,#f400ff,#fe00ff,#ff00f7,#ff00ee,#ff00e6,#ff00de,#ff00d7,#ff00d0,#ff00c9,#ff00c3,#ff00bd,#ff00b8,#ff00b3,#ff00ae,#ff00a9,#ff00a5,#ff00a1,#ff009d,#ff0099,#ff0095,#ff0092,#ff008e)"></i>
<i class="r" style="top:308px;height:2px;left:24.15px;width:466.90px;background:linear-gradient(90deg,#0055ff,#0053ff,#0051ff,#004eff,#004cff,#0049ff,#0047ff,#0044ff,#0042ff,#003fff,#003dff,#003aff,#0037ff,#0435ff,#1032ff,#1b2fff,#252cff,#302aff,#3a27ff,#4424ff,#4e21ff,#571eff,#611bff,#6b18ff,#7515ff,#7e11ff,#880eff,#910bff,#9b07ff,#a503ff,#ae00ff,#b800ff,#c100ff,#cb00ff,#d500ff,#de00ff,#e800ff,#f200ff,#fb00ff,#ff00f9,#ff00f0,#ff00e8,#ff00e0,#ff00d8,#ff00d2,#ff00cb,#ff00c5,#ff00bf,#ff00ba,#ff00b4,#ff00b0,#ff00ab,#ff00a6,#ff00a2,#ff009e,#ff009a,#ff0097,#ff0093,#ff0090)"></i>
<i class="r" style="top:310px;height:2px;left:24.15px;width:458.85px;background:linear-gradient(90deg,#0054ff,#0052ff,#004fff,#004dff,#004bff,#0048ff,#0046ff,#0043ff,#0041ff,#003eff,#003cff,#0039ff,#0036ff,#0334ff,#0f31ff,#1a2eff,#252bff,#2f29ff,#3926ff,#4323ff,#4d20ff,#561dff,#601aff,#6a17ff,#7314ff,#7d11ff,#870dff,#900aff,#9a06ff,#a302ff,#ad00ff,#b600ff,#c000ff,#c900ff,#d300ff,#dc00ff,#e600ff,#f000ff,#f900ff,#ff00fb,#ff00f2,#ff00ea,#ff00e2,#ff00da,#ff00d3,#ff00cd,#ff00c7,#ff00c1,#ff00bb,#ff00b6,#ff00b1,#ff00ac,#ff00a8,#ff00a4,#ff009f,#ff009c,#ff0098,#ff0094)"></i>
<i class="r" style="top:312px;height:2px;left:24.15px;width:458.85px;background:linear-gradient(90deg,#0053ff,#0051ff,#004eff,#004cff,#004aff,#0047ff,#0045ff,#0042ff,#0040ff,#003dff,#003bff,#0038ff,#0035ff,#0333ff,#0f30ff,#1a2dff,#242bff,#2e28ff,#3825ff,#4222ff,#4c1fff,#551cff,#5f19ff,#6916ff,#7213ff,#7c10ff,#850cff,#8f09ff,#9805ff,#a201ff,#ab00ff,#b500ff,#be00ff,#c800ff,#d100ff,#db00ff,#e400ff,#ee00ff,#f700ff,#ff00fd,#ff00f4,#ff00ec,#ff00e4,#ff00dc,#ff00d5,#ff00ce,#ff00c8,#ff00c2,#ff00bd,#ff00b8,#ff00b3,#ff00ae,#ff00a9,#ff00a5,#ff00a1,#ff009d,#ff0099,#ff0095)"></i>
<i class="r" style="top:314px;height:2px;left:24.15px;width:458.85px;background:linear-gradient(90deg,#0052ff,#0050ff,#004dff,#004bff,#0048ff,#0046ff,#0044ff,#0041ff,#003fff,#003cff,#003aff,#0037ff,#0034ff,#0232ff,#0e2fff,#192cff,#232aff,#2e27ff,#3724ff,#4121ff,#4b1eff,#551bff,#5e18ff,#6815ff,#7112ff,#7b0fff,#840cff,#8d08ff,#9704ff,#a000ff,#aa00ff,#b300ff,#bc00ff,#c600ff,#cf00ff,#d900ff,#e200ff,#ec00ff,#f500ff,#ff00ff,#ff00f6,#ff00ee,#ff00e5,#ff00de,#ff00d7,#ff00d0,#ff00ca,#ff00c4,#ff00be,#ff00b9,#ff00b4,#ff00af,#ff00ab,#ff00a6,#ff00a2,#ff009e,#ff009a,#ff0097)"></i>
<i class="r" style="top:316px;height:2px;left:24.15px;width:458.85px;background:linear-gradient(90deg,#0051ff,#004fff,#004cff,#004aff,#0047ff,#0045ff,#0043ff,#0040ff,#003eff,#003bff,#0039ff,#0036ff,#0033ff,#0231ff,#0e2eff,#182bff,#2329ff,#2d26ff,#3723ff,#4020ff,#4a1dff,#541aff,#5d17ff,#6714ff,#7011ff,#790eff,#830bff,#8c07ff,#9504ff,#9f00ff,#a800ff,#b100ff,#bb00ff,#c400ff,#cd00ff,#d700ff,#e000ff,#ea00ff,#f300ff,#fd00ff,#ff00f8,#ff00f0,#ff00e7,#ff00e0,#ff00d9,#ff00d2,#ff00cc,#ff00c6,#ff00c0,#ff00bb,#ff00b6,#ff00b1,#ff00ac,#ff00a8,#ff00a3,#ff009f,#ff009c,#ff0098)"></i>
<i class="r" style="top:318px;height:2px;left:32.20px;width:450.80px;background:linear-gradient(90deg,#004eff,#004bff,#0049ff,#0046ff,#0044ff,#0042ff,#003fff,#003dff,#003aff,#0038ff,#0035ff,#0033ff,#0130ff,#0d2dff,#182bff,#2228ff,#2c25ff,#3622ff,#401fff,#491dff,#531aff,#5c17ff,#6614ff,#6f10ff,#780dff,#820aff,#8b06ff,#9403ff,#9d00ff,#a700ff,#b000ff,#b900ff,#c200ff,#cc00ff,#d500ff,#de00ff,#e800ff,#f100ff,#fa00ff,#ff00fa,#ff00f2,#ff00e9,#ff00e2,#ff00da,#ff00d4,#ff00cd,#ff00c7,#ff00c2,#ff00bc,#ff00b7,#ff00b2,#ff00ad,#ff00a9,#ff00a5,#ff00a1,#ff009d,#ff0099)"></i>
<i class="r" style="top:320px;height:2px;left:32.20px;width:442.75px;background:linear-gradient(90deg,#004cff,#004aff,#0048ff,#0045ff,#0043ff,#0041ff,#003eff,#003cff,#0039ff,#0037ff,#0034ff,#0032ff,#012fff,#0d2cff,#172aff,#2227ff,#2c24ff,#3521ff,#3f1fff,#481cff,#5219ff,#5b16ff,#6513ff,#6e10ff,#770cff,#8009ff,#8a06ff,#9302ff,#9c00ff,#a500ff,#ae00ff,#b800ff,#c100ff,#ca00ff,#d300ff,#dd00ff,#e600ff,#ef00ff,#f800ff,#ff00fc,#ff00f4,#ff00eb,#ff00e4,#ff00dc,#ff00d5,#ff00cf,#ff00c9,#ff00c3,#ff00be,#ff00b8,#ff00b4,#ff00af,#ff00aa,#ff00a6,#ff00a2,#ff009e)"></i>
<i class="r" style="top:322px;height:2px;left:32.20px;width:442.75px;background:linear-gradient(90deg,#004bff,#0049ff,#0047ff,#0044ff,#0042ff,#0040ff,#003dff,#003bff,#0038ff,#0036ff,#0033ff,#0031ff,#002eff,#0c2bff,#1729ff,#2126ff,#2b23ff,#3521ff,#3e1eff,#481bff,#5118ff,#5a15ff,#6412ff,#6d0fff,#760cff,#7f08ff,#8805ff,#9201ff,#9b00ff,#a400ff,#ad00ff,#b600ff,#bf00ff,#c800ff,#d200ff,#db00ff,#e400ff,#ed00ff,#f600ff,#ff00fe,#ff00f6,#ff00ed,#ff00e5,#ff00de,#ff00d7,#ff00d1,#ff00cb,#ff00c5,#ff00bf,#ff00ba,#ff00b5,#ff00b0,#ff00ac,#ff00a8,#ff00a3,#ff00a0)"></i>
<i class="r" style="top:324px;height:2px;left:32.20px;width:442.75px;background:linear-gradient(90deg,#004aff,#0048ff,#0046ff,#0043ff,#0041ff,#003fff,#003cff,#003aff,#0037ff,#0035ff,#0032ff,#0030ff,#002dff,#0c2bff,#1628ff,#2025ff,#2a23ff,#3420ff,#3d1dff,#471aff,#5017ff,#5914ff,#6311ff,#6c0eff,#750bff,#7e07ff,#8704ff,#9000ff,#9900ff,#a200ff,#ab00ff,#b500ff,#be00ff,#c700ff,#d000ff,#d900ff,#e200ff,#eb00ff,#f400ff,#fe00ff,#ff00f8,#ff00ef,#ff00e7,#ff00e0,#ff00d9,#ff00d2,#ff00cc,#ff00c6,#ff00c1,#ff00bc,#ff00b7,#ff00b2,#ff00ad,#ff00a9,#ff00a5,#ff00a1)"></i>
<i class="r" style="top:326px;height:2px;left:32.20px;width:442.75px;background:linear-gradient(90deg,#0049ff,#0047ff,#0045ff,#0043ff,#0040ff,#003eff,#003bff,#0039ff,#0036ff,#0034ff,#0031ff,#002fff,#002cff,#0b2aff,#1627ff,#2024ff,#2a22ff,#331fff,#3d1cff,#4619ff,#4f16ff,#5913ff,#6210ff,#6b0dff,#740aff,#7d07ff,#8603ff,#8f00ff,#9800ff,#a100ff,#aa00ff,#b300ff,#bc00ff,#c500ff,#ce00ff,#d700ff,#e000ff,#e900ff,#f200ff,#fb00ff,#ff00fa,#ff00f1,#ff00e9,#ff00e2,#ff00db,#ff00d4,#ff00ce,#ff00c8,#ff00c2,#ff00bd,#ff00b8,#ff00b3,#ff00af,#ff00aa,#ff00a6,#ff00a2)"></i>
<i class="r" style="top:328px;height:2px;left:32.20px;width:434.70px;background:linear-gradient(90deg,#0048ff,#0046ff,#0044ff,#0042ff,#003fff,#003dff,#003aff,#0038ff,#0036ff,#0033ff,#0031ff,#002eff,#002bff,#0b29ff,#1526ff,#1f24ff,#2921ff,#331eff,#3c1bff,#4518ff,#4e16ff,#5813ff,#6110ff,#6a0cff,#7309ff,#7c06ff,#8502ff,#8e00ff,#9700ff,#a000ff,#a900ff,#b200ff,#ba00ff,#c300ff,#cc00ff,#d500ff,#de00ff,#e700ff,#f000ff,#f900ff,#ff00fc,#ff00f3,#ff00eb,#ff00e3,#ff00dc,#ff00d6,#ff00cf,#ff00c9,#ff00c4,#ff00bf,#ff00b9,#ff00b5,#ff00b0,#ff00ac,#ff00a7)"></i>
<i class="r" style="top:330px;height:2px;left:32.20px;width:434.70px;background:linear-gradient(90deg,#0048ff,#0045ff,#0043ff,#0041ff,#003eff,#003cff,#0039ff,#0037ff,#0035ff,#0032ff,#0030ff,#002dff,#002bff,#0a28ff,#1525ff,#1f23ff,#2820ff,#321dff,#3b1bff,#4518ff,#4e15ff,#5712ff,#600fff,#690cff,#7208ff,#7b05ff,#8401ff,#8c00ff,#9500ff,#9e00ff,#a700ff,#b000ff,#b900ff,#c200ff,#cb00ff,#d400ff,#dd00ff,#e600ff,#ee00ff,#f700ff,#ff00fe,#ff00f5,#ff00ed,#ff00e5,#ff00de,#ff00d7,#ff00d1,#ff00cb,#ff00c5,#ff00c0,#ff00bb,#ff00b6,#ff00b1,#ff00ad,#ff00a9)"></i>
<i class="r" style="top:332px;height:2px;left:32.20px;width:434.70px;background:linear-gradient(90deg,#0047ff,#0044ff,#0042ff,#0040ff,#003dff,#003bff,#0039ff,#0036ff,#0034ff,#0031ff,#002fff,#002cff,#002aff,#0a27ff,#1425ff,#1e22ff,#281fff,#311cff,#3b1aff,#4417ff,#4d14ff,#5611ff,#5f0eff,#680bff,#7108ff,#7a04ff,#8200ff,#8b00ff,#9400ff,#9d00ff,#a600ff,#af00ff,#b700ff,#c000ff,#c900ff,#d200ff,#db00ff,#e400ff,#ed00ff,#f600ff,#fe00ff,#ff00f7,#ff00ef,#ff00e7,#ff00e0,#ff00d9,#ff00d3,#ff00cd,#ff00c7,#ff00c2,#ff00bc,#ff00b7,#ff00b3,#ff00ae,#ff00aa)"></i>
<i class="r" style="top:334px;height:2px;left:40.25px;width:426.65px;background:linear-gradient(90deg,#0043ff,#0041ff,#003fff,#003cff,#003aff,#0038ff,#0035ff,#0033ff,#0030ff,#002eff,#002bff,#0029ff,#0926ff,#1424ff,#1e21ff,#271eff,#311cff,#3a19ff,#4316ff,#4c13ff,#5510ff,#5e0dff,#670aff,#7007ff,#7803ff,#8100ff,#8a00ff,#9300ff,#9c00ff,#a400ff,#ad00ff,#b600ff,#bf00ff,#c700ff,#d000ff,#d900ff,#e200ff,#eb00ff,#f400ff,#fc00ff,#ff00f9,#ff00f1,#ff00e9,#ff00e2,#ff00db,#ff00d4,#ff00ce,#ff00c9,#ff00c3,#ff00be,#ff00b9,#ff00b4,#ff00b0,#ff00ab)"></i>
<i class="r" style="top:336px;height:2px;left:40.25px;width:426.65px;background:linear-gradient(90deg,#0042ff,#0040ff,#003eff,#003cff,#0039ff,#0037ff,#0034ff,#0032ff,#0030ff,#002dff,#002bff,#0028ff,#0926ff,#1323ff,#1d20ff,#271eff,#301bff,#3918ff,#4215ff,#4b12ff,#5410ff,#5d0cff,#6609ff,#6f06ff,#7703ff,#8000ff,#8900ff,#9200ff,#9a00ff,#a300ff,#ac00ff,#b400ff,#bd00ff,#c600ff,#cf00ff,#d700ff,#e000ff,#e900ff,#f200ff,#fa00ff,#ff00fb,#ff00f2,#ff00eb,#ff00e3,#ff00dd,#ff00d6,#ff00d0,#ff00ca,#ff00c5,#ff00bf,#ff00ba,#ff00b6,#ff00b1,#ff00ad)"></i>
<i class="r" style="top:338px;height:2px;left:40.25px;width:418.60px;background:linear-gradient(90deg,#0041ff,#003fff,#003dff,#003bff,#0038ff,#0036ff,#0034ff,#0031ff,#002fff,#002cff,#002aff,#0027ff,#0925ff,#1322ff,#1d1fff,#261dff,#2f1aff,#3917ff,#4215ff,#4a12ff,#530fff,#5c0cff,#6509ff,#6e05ff,#7602ff,#7f00ff,#8800ff,#9000ff,#9900ff,#a200ff,#aa00ff,#b300ff,#bc00ff,#c400ff,#cd00ff,#d600ff,#de00ff,#e700ff,#f000ff,#f900ff,#ff00fd,#ff00f4,#ff00ed,#ff00e5,#ff00de,#ff00d8,#ff00d1,#ff00cc,#ff00c6,#ff00c1,#ff00bc,#ff00b7,#ff00b2)"></i>
<i class="r" style="top:340px;height:2px;left:40.25px;width:418.60px;background:linear-gradient(90deg,#0041ff,#003eff,#003cff,#003aff,#0037ff,#0035ff,#0033ff,#0030ff,#002eff,#002bff,#0029ff,#0026ff,#0824ff,#1221ff,#1c1fff,#261cff,#2f19ff,#3817ff,#4114ff,#4a11ff,#530eff,#5b0bff,#6408ff,#6d05ff,#7501ff,#7e00ff,#8700ff,#8f00ff,#9800ff,#a000ff,#a900ff,#b200ff,#ba00ff,#c300ff,#cb00ff,#d400ff,#dd00ff,#e500ff,#ee00ff,#f700ff,#ff00ff,#ff00f6,#ff00ee,#ff00e7,#ff00e0,#ff00d9,#ff00d3,#ff00cd,#ff00c8,#ff00c2,#ff00bd,#ff00b8,#ff00b4)"></i>
<i class="r" style="top:342px;height:2px;left:40.25px;width:418.60px;background:linear-gradient(90deg,#0040ff,#003dff,#003bff,#0039ff,#0037ff,#0034ff,#0032ff,#002fff,#002dff,#002bff,#0028ff,#0026ff,#0823ff,#1221ff,#1c1eff,#251bff,#2e19ff,#3716ff,#4013ff,#4910ff,#520dff,#5a0aff,#6307ff,#6c04ff,#7400ff,#7d00ff,#8500ff,#8e00ff,#9700ff,#9f00ff,#a800ff,#b000ff,#b900ff,#c100ff,#ca00ff,#d200ff,#db00ff,#e400ff,#ec00ff,#f500ff,#fd00ff,#ff00f8,#ff00f0,#ff00e9,#ff00e2,#ff00db,#ff00d5,#ff00cf,#ff00c9,#ff00c4,#ff00bf,#ff00ba,#ff00b5)"></i>
<i class="r" style="top:344px;height:2px;left:40.25px;width:418.60px;background:linear-gradient(90deg,#003fff,#003dff,#003aff,#0038ff,#0036ff,#0033ff,#0031ff,#002fff,#002cff,#002aff,#0027ff,#0025ff,#0722ff,#1120ff,#1b1dff,#241bff,#2e18ff,#3715ff,#3f12ff,#480fff,#510dff,#5a0aff,#6206ff,#6b03ff,#7300ff,#7c00ff,#8400ff,#8d00ff,#9500ff,#9e00ff,#a600ff,#af00ff,#b700ff,#c000ff,#c800ff,#d100ff,#d900ff,#e200ff,#ea00ff,#f300ff,#fb00ff,#ff00fa,#ff00f2,#ff00ea,#ff00e3,#ff00dd,#ff00d6,#ff00d0,#ff00cb,#ff00c5,#ff00c0,#ff00bb,#ff00b7)"></i>
<i class="r" style="top:346px;height:2px;left:40.25px;width:418.60px;background:linear-gradient(90deg,#003eff,#003cff,#0039ff,#0037ff,#0035ff,#0033ff,#0030ff,#002eff,#002bff,#0029ff,#0027ff,#0024ff,#0722ff,#111fff,#1b1cff,#241aff,#2d17ff,#3614ff,#3f12ff,#470fff,#500cff,#5909ff,#6106ff,#6a02ff,#7200ff,#7b00ff,#8300ff,#8c00ff,#9400ff,#9c00ff,#a500ff,#ad00ff,#b600ff,#be00ff,#c700ff,#cf00ff,#d800ff,#e000ff,#e900ff,#f100ff,#fa00ff,#ff00fc,#ff00f4,#ff00ec,#ff00e5,#ff00de,#ff00d8,#ff00d2,#ff00cc,#ff00c7,#ff00c2,#ff00bd,#ff00b8)"></i>
<i class="r" style="top:348px;height:2px;left:48.30px;width:402.50px;background:linear-gradient(90deg,#003bff,#0039ff,#0036ff,#0034ff,#0032ff,#002fff,#002dff,#002bff,#0028ff,#0026ff,#0023ff,#0621ff,#111eff,#1a1cff,#2319ff,#2c16ff,#3514ff,#3e11ff,#470eff,#4f0bff,#5808ff,#6005ff,#6901ff,#7100ff,#7a00ff,#8200ff,#8a00ff,#9300ff,#9b00ff,#a400ff,#ac00ff,#b400ff,#bd00ff,#c500ff,#ce00ff,#d600ff,#de00ff,#e700ff,#ef00ff,#f800ff,#ff00fe,#ff00f6,#ff00ee,#ff00e7,#ff00e0,#ff00da,#ff00d3,#ff00ce,#ff00c8,#ff00c3,#ff00be)"></i>
<i class="r" style="top:350px;height:2px;left:48.30px;width:402.50px;background:linear-gradient(90deg,#003aff,#0038ff,#0035ff,#0033ff,#0031ff,#002fff,#002cff,#002aff,#0027ff,#0025ff,#0023ff,#0620ff,#101dff,#1a1bff,#2318ff,#2c16ff,#3513ff,#3d10ff,#460dff,#4f0aff,#5707ff,#6004ff,#6800ff,#7000ff,#7900ff,#8100ff,#8900ff,#9200ff,#9a00ff,#a200ff,#ab00ff,#b300ff,#bb00ff,#c400ff,#cc00ff,#d400ff,#dd00ff,#e500ff,#ed00ff,#f600ff,#fe00ff,#ff00f7,#ff00f0,#ff00e9,#ff00e2,#ff00db,#ff00d5,#ff00cf,#ff00ca,#ff00c4,#ff00bf)"></i>
<i class="r" style="top:352px;height:2px;left:48.30px;width:402.50px;background:linear-gradient(90deg,#0039ff,#0037ff,#0035ff,#0032ff,#0030ff,#002eff,#002bff,#0029ff,#0027ff,#0024ff,#0022ff,#051fff,#101dff,#191aff,#2218ff,#2b15ff,#3412ff,#3d0fff,#450dff,#4e0aff,#5607ff,#5f03ff,#6700ff,#6f00ff,#7800ff,#8000ff,#8800ff,#9100ff,#9900ff,#a100ff,#a900ff,#b200ff,#ba00ff,#c200ff,#ca00ff,#d300ff,#db00ff,#e300ff,#ec00ff,#f400ff,#fc00ff,#ff00f9,#ff00f2,#ff00ea,#ff00e3,#ff00dd,#ff00d7,#ff00d1,#ff00cb,#ff00c6,#ff00c1)"></i>
<i class="r" style="top:354px;height:2px;left:48.30px;width:402.50px;background:linear-gradient(90deg,#0038ff,#0036ff,#0034ff,#0032ff,#002fff,#002dff,#002bff,#0028ff,#0026ff,#0023ff,#0021ff,#051fff,#0f1cff,#1919ff,#2217ff,#2b14ff,#3311ff,#3c0fff,#450cff,#4d09ff,#5506ff,#5e03ff,#6600ff,#6e00ff,#7700ff,#7f00ff,#8700ff,#8f00ff,#9800ff,#a000ff,#a800ff,#b000ff,#b800ff,#c100ff,#c900ff,#d100ff,#d900ff,#e200ff,#ea00ff,#f200ff,#fb00ff,#ff00fb,#ff00f3,#ff00ec,#ff00e5,#ff00de,#ff00d8,#ff00d2,#ff00cd,#ff00c7,#ff00c2)"></i>
<i class="r" style="top:356px;height:2px;left:48.30px;width:394.45px;background:linear-gradient(90deg,#0037ff,#0035ff,#0033ff,#0031ff,#002eff,#002cff,#002aff,#0028ff,#0025ff,#0023ff,#0020ff,#051eff,#0f1bff,#1819ff,#2116ff,#2a13ff,#3311ff,#3b0eff,#440bff,#4c08ff,#5505ff,#5d02ff,#6500ff,#6d00ff,#7600ff,#7e00ff,#8600ff,#8e00ff,#9600ff,#9f00ff,#a700ff,#af00ff,#b700ff,#bf00ff,#c700ff,#d000ff,#d800ff,#e000ff,#e800ff,#f000ff,#f900ff,#ff00fd,#ff00f5,#ff00ee,#ff00e7,#ff00e0,#ff00da,#ff00d4,#ff00ce,#ff00c9)"></i>
<i class="r" style="top:358px;height:2px;left:48.30px;width:394.45px;background:linear-gradient(90deg,#0037ff,#0034ff,#0032ff,#0030ff,#002eff,#002bff,#0029ff,#0027ff,#0024ff,#0022ff,#0020ff,#041dff,#0e1bff,#1818ff,#2115ff,#2a13ff,#3210ff,#3b0dff,#430aff,#4c07ff,#5404ff,#5c01ff,#6400ff,#6d00ff,#7500ff,#7d00ff,#8500ff,#8d00ff,#9500ff,#9d00ff,#a500ff,#ae00ff,#b600ff,#be00ff,#c600ff,#ce00ff,#d600ff,#de00ff,#e700ff,#ef00ff,#f700ff,#ff00ff,#ff00f7,#ff00ef,#ff00e8,#ff00e2,#ff00db,#ff00d5,#ff00d0,#ff00ca)"></i>
<i class="r" style="top:360px;height:2px;left:48.30px;width:394.45px;background:linear-gradient(90deg,#0036ff,#0034ff,#0031ff,#002fff,#002dff,#002bff,#0028ff,#0026ff,#0024ff,#0021ff,#001fff,#041cff,#0e1aff,#1717ff,#2015ff,#2912ff,#320fff,#3a0dff,#420aff,#4b07ff,#5304ff,#5b00ff,#6300ff,#6c00ff,#7400ff,#7c00ff,#8400ff,#8c00ff,#9400ff,#9c00ff,#a400ff,#ac00ff,#b400ff,#bc00ff,#c400ff,#cd00ff,#d500ff,#dd00ff,#e500ff,#ed00ff,#f500ff,#fd00ff,#ff00f9,#ff00f1,#ff00ea,#ff00e3,#ff00dd,#ff00d7,#ff00d1,#ff00cc)"></i>
<i class="r" style="top:362px;height:2px;left:56.35px;width:386.40px;background:linear-gradient(90deg,#0033ff,#0031ff,#002eff,#002cff,#002aff,#0028ff,#0025ff,#0023ff,#0020ff,#001eff,#031cff,#0e19ff,#1717ff,#2014ff,#2811ff,#310fff,#390cff,#4209ff,#4a06ff,#5203ff,#5a00ff,#6300ff,#6b00ff,#7300ff,#7b00ff,#8300ff,#8b00ff,#9300ff,#9b00ff,#a300ff,#ab00ff,#b300ff,#bb00ff,#c300ff,#cb00ff,#d300ff,#db00ff,#e300ff,#eb00ff,#f300ff,#fb00ff,#ff00fa,#ff00f3,#ff00ec,#ff00e5,#ff00de,#ff00d8,#ff00d3,#ff00cd)"></i>
<i class="r" style="top:364px;height:2px;left:56.35px;width:386.40px;background:linear-gradient(90deg,#0032ff,#0030ff,#002eff,#002bff,#0029ff,#0027ff,#0025ff,#0022ff,#0020ff,#001dff,#031bff,#0d18ff,#1616ff,#1f13ff,#2811ff,#300eff,#390bff,#4108ff,#4905ff,#5202ff,#5a00ff,#6200ff,#6a00ff,#7200ff,#7a00ff,#8200ff,#8a00ff,#9200ff,#9a00ff,#a200ff,#aa00ff,#b200ff,#ba00ff,#c200ff,#ca00ff,#d200ff,#da00ff,#e200ff,#ea00ff,#f200ff,#fa00ff,#ff00fc,#ff00f5,#ff00ed,#ff00e7,#ff00e0,#ff00da,#ff00d4,#ff00cf)"></i>
<i class="r" style="top:366px;height:2px;left:56.35px;width:378.35px;background:linear-gradient(90deg,#0031ff,#002fff,#002dff,#002bff,#0028ff,#0026ff,#0024ff,#0021ff,#001fff,#001dff,#031aff,#0d18ff,#1615ff,#1f13ff,#2710ff,#300dff,#380bff,#4008ff,#4905ff,#5101ff,#5900ff,#6100ff,#6900ff,#7100ff,#7900ff,#8100ff,#8900ff,#9100ff,#9900ff,#a000ff,#a800ff,#b000ff,#b800ff,#c000ff,#c800ff,#d000ff,#d800ff,#e000ff,#e800ff,#f000ff,#f800ff,#ff00fe,#ff00f6,#ff00ef,#ff00e8,#ff00e2,#ff00db,#ff00d6)"></i>
<i class="r" style="top:368px;height:2px;left:56.35px;width:378.35px;background:linear-gradient(90deg,#0031ff,#002eff,#002cff,#002aff,#0028ff,#0025ff,#0023ff,#0021ff,#001eff,#001cff,#021aff,#0c17ff,#1515ff,#1e12ff,#270fff,#2f0dff,#380aff,#4007ff,#4804ff,#5001ff,#5800ff,#6000ff,#6800ff,#7000ff,#7800ff,#8000ff,#8800ff,#9000ff,#9700ff,#9f00ff,#a700ff,#af00ff,#b700ff,#bf00ff,#c700ff,#cf00ff,#d600ff,#de00ff,#e600ff,#ee00ff,#f600ff,#fe00ff,#ff00f8,#ff00f1,#ff00ea,#ff00e3,#ff00dd,#ff00d7)"></i>
<i class="r" style="top:370px;height:2px;left:56.35px;width:378.35px;background:linear-gradient(90deg,#0030ff,#002eff,#002bff,#0029ff,#0027ff,#0025ff,#0022ff,#0020ff,#001eff,#001bff,#0219ff,#0c16ff,#1514ff,#1e11ff,#260fff,#2f0cff,#3709ff,#3f06ff,#4703ff,#4f00ff,#5700ff,#5f00ff,#6700ff,#6f00ff,#7700ff,#7f00ff,#8700ff,#8e00ff,#9600ff,#9e00ff,#a600ff,#ae00ff,#b600ff,#bd00ff,#c500ff,#cd00ff,#d500ff,#dd00ff,#e500ff,#ed00ff,#f400ff,#fc00ff,#ff00fa,#ff00f2,#ff00eb,#ff00e5,#ff00df,#ff00d9)"></i>
<i class="r" style="top:372px;height:2px;left:56.35px;width:378.35px;background:linear-gradient(90deg,#002fff,#002dff,#002bff,#0028ff,#0026ff,#0024ff,#0022ff,#001fff,#001dff,#001bff,#0118ff,#0b16ff,#1513ff,#1d11ff,#260eff,#2e0bff,#3608ff,#3f06ff,#4702ff,#4f00ff,#5700ff,#5e00ff,#6600ff,#6e00ff,#7600ff,#7e00ff,#8600ff,#8d00ff,#9500ff,#9d00ff,#a500ff,#ac00ff,#b400ff,#bc00ff,#c400ff,#cc00ff,#d300ff,#db00ff,#e300ff,#eb00ff,#f300ff,#fb00ff,#ff00fc,#ff00f4,#ff00ed,#ff00e6,#ff00e0,#ff00da)"></i>
<i class="r" style="top:374px;height:2px;left:56.35px;width:370.30px;background:linear-gradient(90deg,#002eff,#002cff,#002aff,#0028ff,#0025ff,#0023ff,#0021ff,#001fff,#001cff,#001aff,#0117ff,#0b15ff,#1412ff,#1d10ff,#250dff,#2e0bff,#3608ff,#3e05ff,#4602ff,#4e00ff,#5600ff,#5e00ff,#6500ff,#6d00ff,#7500ff,#7d00ff,#8500ff,#8c00ff,#9400ff,#9c00ff,#a300ff,#ab00ff,#b300ff,#bb00ff,#c200ff,#ca00ff,#d200ff,#da00ff,#e100ff,#e900ff,#f100ff,#f900ff,#ff00fd,#ff00f6,#ff00ef,#ff00e8,#ff00e2)"></i>
<i class="r" style="top:376px;height:2px;left:64.40px;width:362.25px;background:linear-gradient(90deg,#002bff,#0029ff,#0027ff,#0025ff,#0023ff,#0020ff,#001eff,#001cff,#0019ff,#0017ff,#0b14ff,#1412ff,#1c0fff,#250dff,#2d0aff,#3507ff,#3d04ff,#4501ff,#4d00ff,#5500ff,#5d00ff,#6500ff,#6c00ff,#7400ff,#7c00ff,#8400ff,#8b00ff,#9300ff,#9b00ff,#a200ff,#aa00ff,#b200ff,#b900ff,#c100ff,#c900ff,#d000ff,#d800ff,#e000ff,#e800ff,#ef00ff,#f700ff,#ff00ff,#ff00f7,#ff00f0,#ff00ea,#ff00e3)"></i>
<i class="r" style="top:378px;height:2px;left:64.40px;width:362.25px;background:linear-gradient(90deg,#002bff,#0028ff,#0026ff,#0024ff,#0022ff,#0020ff,#001dff,#001bff,#0019ff,#0016ff,#0a14ff,#1311ff,#1c0fff,#240cff,#2d09ff,#3506ff,#3d04ff,#4500ff,#4c00ff,#5400ff,#5c00ff,#6400ff,#6c00ff,#7300ff,#7b00ff,#8300ff,#8a00ff,#9200ff,#9900ff,#a100ff,#a900ff,#b000ff,#b800ff,#c000ff,#c700ff,#cf00ff,#d700ff,#de00ff,#e600ff,#ee00ff,#f500ff,#fd00ff,#ff00f9,#ff00f2,#ff00eb,#ff00e5)"></i>
<i class="r" style="top:380px;height:2px;left:64.40px;width:362.25px;background:linear-gradient(90deg,#002aff,#0028ff,#0026ff,#0023ff,#0021ff,#001fff,#001dff,#001aff,#0018ff,#0015ff,#0a13ff,#1311ff,#1c0eff,#240bff,#2c09ff,#3406ff,#3c03ff,#4400ff,#4c00ff,#5400ff,#5b00ff,#6300ff,#6b00ff,#7200ff,#7a00ff,#8200ff,#8900ff,#9100ff,#9800ff,#a000ff,#a800ff,#af00ff,#b700ff,#be00ff,#c600ff,#ce00ff,#d500ff,#dd00ff,#e400ff,#ec00ff,#f400ff,#fb00ff,#ff00fb,#ff00f4,#ff00ed,#ff00e6)"></i>
<i class="r" style="top:382px;height:2px;left:64.40px;width:362.25px;background:linear-gradient(90deg,#0029ff,#0027ff,#0025ff,#0023ff,#0020ff,#001eff,#001cff,#001aff,#0017ff,#0015ff,#0912ff,#1210ff,#1b0dff,#230bff,#2c08ff,#3405ff,#3b02ff,#4300ff,#4b00ff,#5300ff,#5b00ff,#6200ff,#6a00ff,#7100ff,#7900ff,#8100ff,#8800ff,#9000ff,#9700ff,#9f00ff,#a600ff,#ae00ff,#b500ff,#bd00ff,#c500ff,#cc00ff,#d400ff,#db00ff,#e300ff,#eb00ff,#f200ff,#fa00ff,#ff00fd,#ff00f5,#ff00ee,#ff00e8)"></i>
<i class="r" style="top:384px;height:2px;left:64.40px;width:354.20px;background:linear-gradient(90deg,#0029ff,#0026ff,#0024ff,#0022ff,#0020ff,#001eff,#001bff,#0019ff,#0017ff,#0014ff,#0912ff,#120fff,#1b0dff,#230aff,#2b07ff,#3304ff,#3b01ff,#4300ff,#4a00ff,#5200ff,#5a00ff,#6100ff,#6900ff,#7100ff,#7800ff,#8000ff,#8700ff,#8f00ff,#9600ff,#9e00ff,#a500ff,#ad00ff,#b400ff,#bc00ff,#c300ff,#cb00ff,#d200ff,#da00ff,#e100ff,#e900ff,#f100ff,#f800ff,#ff00fe,#ff00f7,#ff00f0)"></i>
<i class="r" style="top:386px;height:2px;left:64.40px;width:354.20px;background:linear-gradient(90deg,#0028ff,#0026ff,#0024ff,#0021ff,#001fff,#001dff,#001bff,#0018ff,#0016ff,#0014ff,#0911ff,#120fff,#1a0cff,#2209ff,#2a07ff,#3204ff,#3a01ff,#4200ff,#4a00ff,#5100ff,#5900ff,#6100ff,#6800ff,#7000ff,#7700ff,#7f00ff,#8600ff,#8e00ff,#9500ff,#9d00ff,#a400ff,#ab00ff,#b300ff,#ba00ff,#c200ff,#c900ff,#d100ff,#d800ff,#e000ff,#e700ff,#ef00ff,#f600ff,#fe00ff,#ff00f9,#ff00f2)"></i>
<i class="r" style="top:388px;height:2px;left:64.40px;width:354.20px;background:linear-gradient(90deg,#0027ff,#0025ff,#0023ff,#0021ff,#001eff,#001cff,#001aff,#0018ff,#0015ff,#0013ff,#0810ff,#110eff,#1a0bff,#2209ff,#2a06ff,#3203ff,#3a00ff,#4100ff,#4900ff,#5100ff,#5800ff,#6000ff,#6700ff,#6f00ff,#7600ff,#7e00ff,#8500ff,#8d00ff,#9400ff,#9b00ff,#a300ff,#aa00ff,#b200ff,#b900ff,#c100ff,#c800ff,#cf00ff,#d700ff,#de00ff,#e600ff,#ed00ff,#f500ff,#fc00ff,#ff00fa,#ff00f3)"></i>
<i class="r" style="top:390px;height:2px;left:72.45px;width:346.15px;background:linear-gradient(90deg,#0024ff,#0022ff,#0020ff,#001eff,#001cff,#0019ff,#0017ff,#0015ff,#0012ff,#0810ff,#110dff,#190bff,#2108ff,#2905ff,#3102ff,#3900ff,#4100ff,#4800ff,#5000ff,#5800ff,#5f00ff,#6600ff,#6e00ff,#7500ff,#7d00ff,#8400ff,#8c00ff,#9300ff,#9a00ff,#a200ff,#a900ff,#b000ff,#b800ff,#bf00ff,#c700ff,#ce00ff,#d500ff,#dd00ff,#e400ff,#ec00ff,#f300ff,#fb00ff,#ff00fc,#ff00f5)"></i>
<i class="r" style="top:392px;height:2px;left:72.45px;width:346.15px;background:linear-gradient(90deg,#0024ff,#0022ff,#001fff,#001dff,#001bff,#0019ff,#0016ff,#0014ff,#0012ff,#080fff,#100dff,#190aff,#2107ff,#2905ff,#3102ff,#3900ff,#4000ff,#4800ff,#4f00ff,#5700ff,#5e00ff,#6600ff,#6d00ff,#7400ff,#7c00ff,#8300ff,#8b00ff,#9200ff,#9900ff,#a100ff,#a800ff,#af00ff,#b700ff,#be00ff,#c500ff,#cd00ff,#d400ff,#db00ff,#e300ff,#ea00ff,#f200ff,#f900ff,#ff00fe,#ff00f6)"></i>
<i class="r" style="top:394px;height:2px;left:72.45px;width:338.10px;background:linear-gradient(90deg,#0023ff,#0021ff,#001fff,#001cff,#001aff,#0018ff,#0016ff,#0013ff,#0011ff,#070fff,#100cff,#180aff,#2107ff,#2804ff,#3001ff,#3800ff,#4000ff,#4700ff,#4f00ff,#5600ff,#5e00ff,#6500ff,#6c00ff,#7400ff,#7b00ff,#8200ff,#8a00ff,#9100ff,#9800ff,#9f00ff,#a700ff,#ae00ff,#b500ff,#bd00ff,#c400ff,#cb00ff,#d300ff,#da00ff,#e100ff,#e900ff,#f000ff,#f700ff,#ff00ff)"></i>
<i class="r" style="top:396px;height:2px;left:72.45px;width:338.10px;background:linear-gradient(90deg,#0022ff,#0020ff,#001eff,#001cff,#001aff,#0017ff,#0015ff,#0013ff,#0010ff,#070eff,#100bff,#1809ff,#2006ff,#2803ff,#3000ff,#3700ff,#3f00ff,#4700ff,#4e00ff,#5500ff,#5d00ff,#6400ff,#6b00ff,#7300ff,#7a00ff,#8100ff,#8900ff,#9000ff,#9700ff,#9e00ff,#a600ff,#ad00ff,#b400ff,#bb00ff,#c300ff,#ca00ff,#d100ff,#d800ff,#e000ff,#e700ff,#ee00ff,#f600ff,#fd00ff)"></i>
<i class="r" style="top:398px;height:2px;left:72.45px;width:338.10px;background:linear-gradient(90deg,#0022ff,#0020ff,#001dff,#001bff,#0019ff,#0017ff,#0014ff,#0012ff,#0010ff,#060dff,#0f0bff,#1808ff,#2006ff,#2803ff,#2f00ff,#3700ff,#3e00ff,#4600ff,#4d00ff,#5500ff,#5c00ff,#6300ff,#6b00ff,#7200ff,#7900ff,#8000ff,#8800ff,#8f00ff,#9600ff,#9d00ff,#a400ff,#ac00ff,#b300ff,#ba00ff,#c100ff,#c900ff,#d000ff,#d700ff,#de00ff,#e600ff,#ed00ff,#f400ff,#fb00ff)"></i>
<i class="r" style="top:400px;height:2px;left:72.45px;width:338.10px;background:linear-gradient(90deg,#0021ff,#001fff,#001dff,#001bff,#0018ff,#0016ff,#0014ff,#0012ff,#000fff,#060dff,#0f0aff,#1708ff,#1f05ff,#2702ff,#2f00ff,#3600ff,#3e00ff,#4500ff,#4d00ff,#5400ff,#5b00ff,#6300ff,#6a00ff,#7100ff,#7800ff,#7f00ff,#8700ff,#8e00ff,#9500ff,#9c00ff,#a300ff,#ab00ff,#b200ff,#b900ff,#c000ff,#c700ff,#ce00ff,#d600ff,#dd00ff,#e400ff,#eb00ff,#f300ff,#fa00ff)"></i>
<i class="r" style="top:402px;height:2px;left:72.45px;width:330.05px;background:linear-gradient(90deg,#0020ff,#001eff,#001cff,#001aff,#0018ff,#0016ff,#0013ff,#0011ff,#000fff,#060cff,#0f0aff,#1707ff,#1f04ff,#2701ff,#2e00ff,#3600ff,#3d00ff,#4500ff,#4c00ff,#5300ff,#5b00ff,#6200ff,#6900ff,#7000ff,#7700ff,#7f00ff,#8600ff,#8d00ff,#9400ff,#9b00ff,#a200ff,#a900ff,#b100ff,#b800ff,#bf00ff,#c600ff,#cd00ff,#d400ff,#db00ff,#e300ff,#ea00ff,#f100ff)"></i>
<i class="r" style="top:404px;height:2px;left:80.50px;width:322.00px;background:linear-gradient(90deg,#001eff,#001cff,#0019ff,#0017ff,#0015ff,#0013ff,#0010ff,#000eff,#050cff,#0e09ff,#1606ff,#1e04ff,#2601ff,#2e00ff,#3500ff,#3d00ff,#4400ff,#4b00ff,#5300ff,#5a00ff,#6100ff,#6800ff,#6f00ff,#7700ff,#7e00ff,#8500ff,#8c00ff,#9300ff,#9a00ff,#a100ff,#a800ff,#af00ff,#b600ff,#be00ff,#c500ff,#cc00ff,#d300ff,#da00ff,#e100ff,#e800ff,#f000ff)"></i>
<i class="r" style="top:406px;height:2px;left:80.50px;width:322.00px;background:linear-gradient(90deg,#001dff,#001bff,#0019ff,#0017ff,#0014ff,#0012ff,#0010ff,#000dff,#050bff,#0e08ff,#1606ff,#1e03ff,#2600ff,#2d00ff,#3500ff,#3c00ff,#4300ff,#4b00ff,#5200ff,#5900ff,#6000ff,#6700ff,#6f00ff,#7600ff,#7d00ff,#8400ff,#8b00ff,#9200ff,#9900ff,#a000ff,#a700ff,#ae00ff,#b500ff,#bc00ff,#c300ff,#ca00ff,#d200ff,#d900ff,#e000ff,#e700ff,#ee00ff)"></i>
<i class="r" style="top:408px;height:2px;left:80.50px;width:322.00px;background:linear-gradient(90deg,#001cff,#001aff,#0018ff,#0016ff,#0014ff,#0011ff,#000fff,#000dff,#050aff,#0d08ff,#1605ff,#1d02ff,#2500ff,#2d00ff,#3400ff,#3c00ff,#4300ff,#4a00ff,#5100ff,#5800ff,#6000ff,#6700ff,#6e00ff,#7500ff,#7c00ff,#8300ff,#8a00ff,#9100ff,#9800ff,#9f00ff,#a600ff,#ad00ff,#b400ff,#bb00ff,#c200ff,#c900ff,#d000ff,#d700ff,#de00ff,#e500ff,#ec00ff)"></i>
<i class="r" style="top:410px;height:2px;left:80.50px;width:322.00px;background:linear-gradient(90deg,#001cff,#001aff,#0018ff,#0015ff,#0013ff,#0011ff,#000fff,#000cff,#040aff,#0d07ff,#1505ff,#1d02ff,#2500ff,#2c00ff,#3400ff,#3b00ff,#4200ff,#4900ff,#5100ff,#5800ff,#5f00ff,#6600ff,#6d00ff,#7400ff,#7b00ff,#8200ff,#8900ff,#9000ff,#9700ff,#9e00ff,#a500ff,#ac00ff,#b300ff,#ba00ff,#c100ff,#c800ff,#cf00ff,#d600ff,#dd00ff,#e400ff,#eb00ff)"></i>
<i class="r" style="top:412px;height:2px;left:80.50px;width:313.95px;background:linear-gradient(90deg,#001bff,#0019ff,#0017ff,#0015ff,#0013ff,#0010ff,#000eff,#000cff,#0409ff,#0d07ff,#1504ff,#1d01ff,#2400ff,#2c00ff,#3300ff,#3a00ff,#4200ff,#4900ff,#5000ff,#5700ff,#5e00ff,#6500ff,#6c00ff,#7300ff,#7a00ff,#8100ff,#8800ff,#8f00ff,#9600ff,#9d00ff,#a400ff,#ab00ff,#b200ff,#b900ff,#c000ff,#c700ff,#ce00ff,#d500ff,#dc00ff,#e300ff)"></i>
<i class="r" style="top:414px;height:2px;left:80.50px;width:313.95px;background:linear-gradient(90deg,#001bff,#0018ff,#0016ff,#0014ff,#0012ff,#0010ff,#000dff,#000bff,#0309ff,#0c06ff,#1403ff,#1c00ff,#2400ff,#2b00ff,#3300ff,#3a00ff,#4100ff,#4800ff,#4f00ff,#5600ff,#5d00ff,#6400ff,#6b00ff,#7200ff,#7900ff,#8000ff,#8700ff,#8e00ff,#9500ff,#9c00ff,#a300ff,#aa00ff,#b100ff,#b800ff,#be00ff,#c500ff,#cc00ff,#d300ff,#da00ff,#e100ff)"></i>
<i class="r" style="top:416px;height:2px;left:88.55px;width:305.90px;background:linear-gradient(90deg,#0018ff,#0016ff,#0014ff,#0011ff,#000fff,#000dff,#000aff,#0308ff,#0c05ff,#1403ff,#1c00ff,#2300ff,#2b00ff,#3200ff,#3900ff,#4100ff,#4800ff,#4f00ff,#5600ff,#5d00ff,#6400ff,#6b00ff,#7200ff,#7800ff,#7f00ff,#8600ff,#8d00ff,#9400ff,#9b00ff,#a200ff,#a900ff,#af00ff,#b600ff,#bd00ff,#c400ff,#cb00ff,#d200ff,#d900ff,#e000ff)"></i>
<i class="r" style="top:418px;height:2px;left:88.55px;width:305.90px;background:linear-gradient(90deg,#0017ff,#0015ff,#0013ff,#0011ff,#000eff,#000cff,#000aff,#0307ff,#0c05ff,#1402ff,#1b00ff,#2300ff,#2a00ff,#3200ff,#3900ff,#4000ff,#4700ff,#4e00ff,#5500ff,#5c00ff,#6300ff,#6a00ff,#7100ff,#7800ff,#7e00ff,#8500ff,#8c00ff,#9300ff,#9a00ff,#a100ff,#a800ff,#ae00ff,#b500ff,#bc00ff,#c300ff,#ca00ff,#d100ff,#d700ff,#de00ff)"></i>
<i class="r" style="top:420px;height:2px;left:88.55px;width:297.85px;background:linear-gradient(90deg,#0017ff,#0015ff,#0012ff,#0010ff,#000eff,#000cff,#0009ff,#0207ff,#0b04ff,#1301ff,#1b00ff,#2300ff,#2a00ff,#3100ff,#3800ff,#3f00ff,#4600ff,#4d00ff,#5400ff,#5b00ff,#6200ff,#6900ff,#7000ff,#7700ff,#7e00ff,#8400ff,#8b00ff,#9200ff,#9900ff,#a000ff,#a600ff,#ad00ff,#b400ff,#bb00ff,#c200ff,#c800ff,#cf00ff,#d600ff)"></i>
<i class="r" style="top:422px;height:2px;left:88.55px;width:297.85px;background:linear-gradient(90deg,#0016ff,#0014ff,#0012ff,#0010ff,#000dff,#000bff,#0009ff,#0206ff,#0b04ff,#1301ff,#1b00ff,#2200ff,#2900ff,#3100ff,#3800ff,#3f00ff,#4600ff,#4d00ff,#5400ff,#5b00ff,#6100ff,#6800ff,#6f00ff,#7600ff,#7d00ff,#8400ff,#8a00ff,#9100ff,#9800ff,#9f00ff,#a500ff,#ac00ff,#b300ff,#ba00ff,#c000ff,#c700ff,#ce00ff,#d500ff)"></i>
<i class="r" style="top:424px;height:2px;left:88.55px;width:297.85px;background:linear-gradient(90deg,#0016ff,#0013ff,#0011ff,#000fff,#000dff,#000aff,#0008ff,#0206ff,#0b03ff,#1300ff,#1a00ff,#2200ff,#2900ff,#3000ff,#3700ff,#3e00ff,#4500ff,#4c00ff,#5300ff,#5a00ff,#6100ff,#6800ff,#6e00ff,#7500ff,#7c00ff,#8300ff,#8900ff,#9000ff,#9700ff,#9e00ff,#a400ff,#ab00ff,#b200ff,#b900ff,#bf00ff,#c600ff,#cd00ff,#d400ff)"></i>
<i class="r" style="top:426px;height:2px;left:88.55px;width:297.85px;background:linear-gradient(90deg,#0015ff,#0013ff,#0011ff,#000eff,#000cff,#000aff,#0008ff,#0105ff,#0a02ff,#1200ff,#1a00ff,#2100ff,#2800ff,#3000ff,#3700ff,#3e00ff,#4500ff,#4c00ff,#5200ff,#5900ff,#6000ff,#6700ff,#6e00ff,#7400ff,#7b00ff,#8200ff,#8800ff,#8f00ff,#9600ff,#9d00ff,#a300ff,#aa00ff,#b100ff,#b700ff,#be00ff,#c500ff,#cb00ff,#d200ff)"></i>
<i class="r" style="top:428px;height:2px;left:88.55px;width:297.85px;background:linear-gradient(90deg,#0014ff,#0012ff,#0010ff,#000eff,#000cff,#0009ff,#0007ff,#0104ff,#0a02ff,#1200ff,#1900ff,#2100ff,#2800ff,#2f00ff,#3600ff,#3d00ff,#4400ff,#4b00ff,#5200ff,#5900ff,#5f00ff,#6600ff,#6d00ff,#7400ff,#7a00ff,#8100ff,#8800ff,#8e00ff,#9500ff,#9c00ff,#a200ff,#a900ff,#b000ff,#b600ff,#bd00ff,#c400ff,#ca00ff,#d100ff)"></i>
<i class="r" style="top:430px;height:2px;left:96.60px;width:281.75px;background:linear-gradient(90deg,#0012ff,#0010ff,#000dff,#000bff,#0009ff,#0006ff,#0004ff,#0901ff,#1100ff,#1900ff,#2000ff,#2800ff,#2f00ff,#3600ff,#3d00ff,#4400ff,#4a00ff,#5100ff,#5800ff,#5f00ff,#6500ff,#6c00ff,#7300ff,#7900ff,#8000ff,#8700ff,#8d00ff,#9400ff,#9b00ff,#a100ff,#a800ff,#ae00ff,#b500ff,#bc00ff,#c200ff,#c900ff)"></i>
<i class="r" style="top:432px;height:2px;left:96.60px;width:281.75px;background:linear-gradient(90deg,#0011ff,#000fff,#000dff,#000bff,#0008ff,#0006ff,#0003ff,#0900ff,#1100ff,#1900ff,#2000ff,#2700ff,#2e00ff,#3500ff,#3c00ff,#4300ff,#4a00ff,#5100ff,#5700ff,#5e00ff,#6500ff,#6b00ff,#7200ff,#7900ff,#7f00ff,#8600ff,#8c00ff,#9300ff,#9a00ff,#a000ff,#a700ff,#ad00ff,#b400ff,#bb00ff,#c100ff,#c800ff)"></i>
<i class="r" style="top:434px;height:2px;left:96.60px;width:281.75px;background:linear-gradient(90deg,#0011ff,#000eff,#000cff,#000aff,#0008ff,#0005ff,#0003ff,#0900ff,#1100ff,#1800ff,#2000ff,#2700ff,#2e00ff,#3500ff,#3c00ff,#4200ff,#4900ff,#5000ff,#5700ff,#5d00ff,#6400ff,#6b00ff,#7100ff,#7800ff,#7e00ff,#8500ff,#8c00ff,#9200ff,#9900ff,#9f00ff,#a600ff,#ac00ff,#b300ff,#b900ff,#c000ff,#c700ff)"></i>
<i class="r" style="top:436px;height:2px;left:96.60px;width:281.75px;background:linear-gradient(90deg,#0010ff,#000eff,#000cff,#0009ff,#0007ff,#0005ff,#0002ff,#0800ff,#1000ff,#1800ff,#1f00ff,#2600ff,#2d00ff,#3400ff,#3b00ff,#4200ff,#4900ff,#4f00ff,#5600ff,#5d00ff,#6300ff,#6a00ff,#7000ff,#7700ff,#7e00ff,#8400ff,#8b00ff,#9100ff,#9800ff,#9e00ff,#a500ff,#ab00ff,#b200ff,#b800ff,#bf00ff,#c500ff)"></i>
<i class="r" style="top:438px;height:2px;left:96.60px;width:281.75px;background:linear-gradient(90deg,#0010ff,#000dff,#000bff,#0009ff,#0007ff,#0004ff,#0001ff,#0800ff,#1000ff,#1800ff,#1f00ff,#2600ff,#2d00ff,#3400ff,#3b00ff,#4100ff,#4800ff,#4f00ff,#5500ff,#5c00ff,#6300ff,#6900ff,#7000ff,#7600ff,#7d00ff,#8300ff,#8a00ff,#9000ff,#9700ff,#9d00ff,#a400ff,#aa00ff,#b100ff,#b700ff,#be00ff,#c400ff)"></i>
<i class="r" style="top:440px;height:2px;left:96.60px;width:273.70px;background:linear-gradient(90deg,#000fff,#000dff,#000bff,#0008ff,#0006ff,#0004ff,#0001ff,#0800ff,#1000ff,#1700ff,#1e00ff,#2500ff,#2c00ff,#3300ff,#3a00ff,#4100ff,#4700ff,#4e00ff,#5500ff,#5b00ff,#6200ff,#6800ff,#6f00ff,#7500ff,#7c00ff,#8200ff,#8900ff,#8f00ff,#9600ff,#9c00ff,#a300ff,#a900ff,#b000ff,#b600ff,#bd00ff)"></i>
<i class="r" style="top:442px;height:2px;left:104.65px;width:265.65px;background:linear-gradient(90deg,#000cff,#000aff,#0008ff,#0005ff,#0003ff,#0000ff,#0700ff,#0f00ff,#1700ff,#1e00ff,#2500ff,#2c00ff,#3300ff,#3a00ff,#4000ff,#4700ff,#4e00ff,#5400ff,#5b00ff,#6100ff,#6800ff,#6e00ff,#7500ff,#7b00ff,#8200ff,#8800ff,#8e00ff,#9500ff,#9b00ff,#a200ff,#a800ff,#af00ff,#b500ff,#bb00ff)"></i>
<i class="r" style="top:444px;height:2px;left:104.65px;width:265.65px;background:linear-gradient(90deg,#000cff,#000aff,#0007ff,#0005ff,#0002ff,#0000ff,#0700ff,#0f00ff,#1600ff,#1e00ff,#2500ff,#2b00ff,#3200ff,#3900ff,#4000ff,#4600ff,#4d00ff,#5300ff,#5a00ff,#6000ff,#6700ff,#6d00ff,#7400ff,#7a00ff,#8100ff,#8700ff,#8e00ff,#9400ff,#9a00ff,#a100ff,#a700ff,#ae00ff,#b400ff,#ba00ff)"></i>
<i class="r" style="top:446px;height:2px;left:104.65px;width:265.65px;background:linear-gradient(90deg,#000bff,#0009ff,#0007ff,#0004ff,#0002ff,#0000ff,#0700ff,#0f00ff,#1600ff,#1d00ff,#2400ff,#2b00ff,#3200ff,#3900ff,#3f00ff,#4600ff,#4c00ff,#5300ff,#5900ff,#6000ff,#6600ff,#6d00ff,#7300ff,#7a00ff,#8000ff,#8600ff,#8d00ff,#9300ff,#9900ff,#a000ff,#a600ff,#ad00ff,#b300ff,#b900ff)"></i>
<i class="r" style="top:448px;height:2px;left:104.65px;width:257.60px;background:linear-gradient(90deg,#000bff,#0008ff,#0006ff,#0004ff,#0001ff,#0000ff,#0600ff,#0e00ff,#1600ff,#1d00ff,#2400ff,#2b00ff,#3100ff,#3800ff,#3f00ff,#4500ff,#4c00ff,#5200ff,#5900ff,#5f00ff,#6600ff,#6c00ff,#7200ff,#7900ff,#7f00ff,#8500ff,#8c00ff,#9200ff,#9800ff,#9f00ff,#a500ff,#ab00ff,#b200ff)"></i>
<i class="r" style="top:450px;height:2px;left:104.65px;width:257.60px;background:linear-gradient(90deg,#000aff,#0008ff,#0006ff,#0003ff,#0000ff,#0000ff,#0600ff,#0e00ff,#1500ff,#1c00ff,#2300ff,#2a00ff,#3100ff,#3800ff,#3e00ff,#4500ff,#4b00ff,#5200ff,#5800ff,#5e00ff,#6500ff,#6b00ff,#7200ff,#7800ff,#7e00ff,#8500ff,#8b00ff,#9100ff,#9800ff,#9e00ff,#a400ff,#aa00ff,#b100ff)"></i>
<i class="r" style="top:452px;height:2px;left:104.65px;width:257.60px;background:linear-gradient(90deg,#000aff,#0007ff,#0005ff,#0003ff,#0000ff,#0000ff,#0600ff,#0e00ff,#1500ff,#1c00ff,#2300ff,#2a00ff,#3000ff,#3700ff,#3e00ff,#4400ff,#4b00ff,#5100ff,#5700ff,#5e00ff,#6400ff,#6b00ff,#7100ff,#7700ff,#7d00ff,#8400ff,#8a00ff,#9000ff,#9700ff,#9d00ff,#a300ff,#a900ff,#b000ff)"></i>
<i class="r" style="top:454px;height:2px;left:112.70px;width:249.55px;background:linear-gradient(90deg,#0007ff,#0005ff,#0002ff,#0000ff,#0000ff,#0600ff,#0d00ff,#1500ff,#1c00ff,#2300ff,#2900ff,#3000ff,#3700ff,#3d00ff,#4400ff,#4a00ff,#5000ff,#5700ff,#5d00ff,#6400ff,#6a00ff,#7000ff,#7600ff,#7d00ff,#8300ff,#8900ff,#8f00ff,#9600ff,#9c00ff,#a200ff,#a800ff,#af00ff)"></i>
<i class="r" style="top:456px;height:2px;left:112.70px;width:249.55px;background:linear-gradient(90deg,#0006ff,#0004ff,#0001ff,#0000ff,#0000ff,#0500ff,#0d00ff,#1400ff,#1b00ff,#2200ff,#2900ff,#3000ff,#3600ff,#3d00ff,#4300ff,#4a00ff,#5000ff,#5600ff,#5d00ff,#6300ff,#6900ff,#6f00ff,#7600ff,#7c00ff,#8200ff,#8800ff,#8f00ff,#9500ff,#9b00ff,#a100ff,#a700ff,#ae00ff)"></i>
<i class="r" style="top:458px;height:2px;left:112.70px;width:241.50px;background:linear-gradient(90deg,#0006ff,#0003ff,#0001ff,#0000ff,#0000ff,#0500ff,#0d00ff,#1400ff,#1b00ff,#2200ff,#2800ff,#2f00ff,#3600ff,#3c00ff,#4300ff,#4900ff,#4f00ff,#5600ff,#5c00ff,#6200ff,#6800ff,#6f00ff,#7500ff,#7b00ff,#8100ff,#8800ff,#8e00ff,#9400ff,#9a00ff,#a000ff,#a600ff)"></i>
<i class="r" style="top:460px;height:2px;left:112.70px;width:241.50px;background:linear-gradient(90deg,#0005ff,#0003ff,#0000ff,#0000ff,#0000ff,#0500ff,#0c00ff,#1400ff,#1b00ff,#2100ff,#2800ff,#2f00ff,#3500ff,#3c00ff,#4200ff,#4800ff,#4f00ff,#5500ff,#5b00ff,#6200ff,#6800ff,#6e00ff,#7400ff,#7a00ff,#8100ff,#8700ff,#8d00ff,#9300ff,#9900ff,#9f00ff,#a600ff)"></i>
<i class="r" style="top:462px;height:2px;left:112.70px;width:241.50px;background:linear-gradient(90deg,#0005ff,#0002ff,#0000ff,#0000ff,#0000ff,#0400ff,#0c00ff,#1300ff,#1a00ff,#2100ff,#2800ff,#2e00ff,#3500ff,#3b00ff,#4200ff,#4800ff,#4e00ff,#5400ff,#5b00ff,#6100ff,#6700ff,#6d00ff,#7300ff,#7a00ff,#8000ff,#8600ff,#8c00ff,#9200ff,#9800ff,#9e00ff,#a500ff)"></i>
<i class="r" style="top:464px;height:2px;left:120.75px;width:233.45px;background:linear-gradient(90deg,#0002ff,#0000ff,#0000ff,#0000ff,#0400ff,#0c00ff,#1300ff,#1a00ff,#2100ff,#2700ff,#2e00ff,#3400ff,#3b00ff,#4100ff,#4700ff,#4e00ff,#5400ff,#5a00ff,#6000ff,#6600ff,#6d00ff,#7300ff,#7900ff,#7f00ff,#8500ff,#8b00ff,#9100ff,#9700ff,#9e00ff,#a400ff)"></i>
<i class="r" style="top:466px;height:2px;left:120.75px;width:225.40px;background:linear-gradient(90deg,#0001ff,#0000ff,#0000ff,#0000ff,#0400ff,#0b00ff,#1300ff,#1900ff,#2000ff,#2700ff,#2d00ff,#3400ff,#3a00ff,#4100ff,#4700ff,#4d00ff,#5300ff,#5900ff,#6000ff,#6600ff,#6c00ff,#7200ff,#7800ff,#7e00ff,#8400ff,#8a00ff,#9000ff,#9700ff,#9d00ff)"></i>
<i class="r" style="top:468px;height:2px;left:120.75px;width:225.40px;background:linear-gradient(90deg,#0001ff,#0000ff,#0000ff,#0000ff,#0300ff,#0b00ff,#1200ff,#1900ff,#2000ff,#2600ff,#2d00ff,#3300ff,#3a00ff,#4000ff,#4600ff,#4c00ff,#5300ff,#5900ff,#5f00ff,#6500ff,#6b00ff,#7100ff,#7700ff,#7d00ff,#8300ff,#8a00ff,#9000ff,#9600ff,#9c00ff)"></i>
<i class="r" style="top:470px;height:2px;left:120.75px;width:225.40px;background:linear-gradient(90deg,#0000ff,#0000ff,#0000ff,#0000ff,#0300ff,#0b00ff,#1200ff,#1900ff,#1f00ff,#2600ff,#2d00ff,#3300ff,#3900ff,#4000ff,#4600ff,#4c00ff,#5200ff,#5800ff,#5e00ff,#6400ff,#6b00ff,#7100ff,#7700ff,#7d00ff,#8300ff,#8900ff,#8f00ff,#9500ff,#9b00ff)"></i>
<i class="r" style="top:472px;height:2px;left:120.75px;width:225.40px;background:linear-gradient(90deg,#0000ff,#0000ff,#0000ff,#0000ff,#0300ff,#0a00ff,#1200ff,#1800ff,#1f00ff,#2600ff,#2c00ff,#3200ff,#3900ff,#3f00ff,#4500ff,#4b00ff,#5200ff,#5800ff,#5e00ff,#6400ff,#6a00ff,#7000ff,#7600ff,#7c00ff,#8200ff,#8800ff,#8e00ff,#9400ff,#9a00ff)"></i>
<i class="r" style="top:474px;height:2px;left:120.75px;width:225.40px;background:linear-gradient(90deg,#0000ff,#0000ff,#0000ff,#0000ff,#0200ff,#0a00ff,#1100ff,#1800ff,#1f00ff,#2500ff,#2c00ff,#3200ff,#3800ff,#3f00ff,#4500ff,#4b00ff,#5100ff,#5700ff,#5d00ff,#6300ff,#6900ff,#6f00ff,#7500ff,#7b00ff,#8100ff,#8700ff,#8d00ff,#9300ff,#9900ff)"></i>
<i class="r" style="top:476px;height:2px;left:128.80px;width:209.30px;background:linear-gradient(90deg,#0000ff,#0000ff,#0000ff,#0200ff,#0a00ff,#1100ff,#1800ff,#1e00ff,#2500ff,#2b00ff,#3200ff,#3800ff,#3e00ff,#4400ff,#4a00ff,#5000ff,#5600ff,#5d00ff,#6300ff,#6900ff,#6f00ff,#7400ff,#7a00ff,#8000ff,#8600ff,#8c00ff,#9200ff)"></i>
<i class="r" style="top:478px;height:2px;left:128.80px;width:209.30px;background:linear-gradient(90deg,#0000ff,#0000ff,#0000ff,#0200ff,#0a00ff,#1100ff,#1700ff,#1e00ff,#2400ff,#2b00ff,#3100ff,#3700ff,#3e00ff,#4400ff,#4a00ff,#5000ff,#5600ff,#5c00ff,#6200ff,#6800ff,#6e00ff,#7400ff,#7a00ff,#8000ff,#8600ff,#8b00ff,#9100ff)"></i>
<i class="r" style="top:480px;height:2px;left:128.80px;width:209.30px;background:linear-gradient(90deg,#0000ff,#0000ff,#0000ff,#0100ff,#0900ff,#1000ff,#1700ff,#1e00ff,#2400ff,#2a00ff,#3100ff,#3700ff,#3d00ff,#4300ff,#4900ff,#4f00ff,#5500ff,#5b00ff,#6100ff,#6700ff,#6d00ff,#7300ff,#7900ff,#7f00ff,#8500ff,#8b00ff,#9100ff)"></i>
<i class="r" style="top:482px;height:2px;left:128.80px;width:209.30px;background:linear-gradient(90deg,#0000ff,#0000ff,#0000ff,#0100ff,#0900ff,#1000ff,#1700ff,#1d00ff,#2400ff,#2a00ff,#3000ff,#3600ff,#3d00ff,#4300ff,#4900ff,#4f00ff,#5500ff,#5b00ff,#6100ff,#6700ff,#6c00ff,#7200ff,#7800ff,#7e00ff,#8400ff,#8a00ff,#9000ff)"></i>
<i class="r" style="top:484px;height:2px;left:128.80px;width:201.25px;background:linear-gradient(90deg,#0000ff,#0000ff,#0000ff,#0100ff,#0900ff,#1000ff,#1600ff,#1d00ff,#2300ff,#2a00ff,#3000ff,#3600ff,#3c00ff,#4200ff,#4800ff,#4e00ff,#5400ff,#5a00ff,#6000ff,#6600ff,#6c00ff,#7200ff,#7800ff,#7d00ff,#8300ff,#8900ff)"></i>
<i class="r" style="top:486px;height:2px;left:136.85px;width:193.20px;background:linear-gradient(90deg,#0000ff,#0000ff,#0000ff,#0800ff,#0f00ff,#1600ff,#1d00ff,#2300ff,#2900ff,#2f00ff,#3600ff,#3c00ff,#4200ff,#4800ff,#4e00ff,#5400ff,#5a00ff,#5f00ff,#6500ff,#6b00ff,#7100ff,#7700ff,#7d00ff,#8200ff,#8800ff)"></i>
<i class="r" style="top:488px;height:2px;left:136.85px;width:193.20px;background:linear-gradient(90deg,#0000ff,#0000ff,#0000ff,#0800ff,#0f00ff,#1600ff,#1c00ff,#2300ff,#2900ff,#2f00ff,#3500ff,#3b00ff,#4100ff,#4700ff,#4d00ff,#5300ff,#5900ff,#5f00ff,#6500ff,#6a00ff,#7000ff,#7600ff,#7c00ff,#8200ff,#8800ff)"></i>
<i class="r" style="top:490px;height:2px;left:136.85px;width:193.20px;background:linear-gradient(90deg,#0000ff,#0000ff,#0000ff,#0800ff,#0f00ff,#1500ff,#1c00ff,#2200ff,#2800ff,#2f00ff,#3500ff,#3b00ff,#4100ff,#4700ff,#4d00ff,#5300ff,#5800ff,#5e00ff,#6400ff,#6a00ff,#7000ff,#7500ff,#7b00ff,#8100ff,#8700ff)"></i>
<i class="r" style="top:492px;height:2px;left:136.85px;width:193.20px;background:linear-gradient(90deg,#0000ff,#0000ff,#0000ff,#0700ff,#0e00ff,#1500ff,#1c00ff,#2200ff,#2800ff,#2e00ff,#3400ff,#3a00ff,#4000ff,#4600ff,#4c00ff,#5200ff,#5800ff,#5e00ff,#6300ff,#6900ff,#6f00ff,#7500ff,#7b00ff,#8000ff,#8600ff)"></i>
<i class="r" style="top:494px;height:2px;left:136.85px;width:185.15px;background:linear-gradient(90deg,#0000ff,#0000ff,#0000ff,#0700ff,#0e00ff,#1500ff,#1b00ff,#2200ff,#2800ff,#2e00ff,#3400ff,#3a00ff,#4000ff,#4600ff,#4c00ff,#5100ff,#5700ff,#5d00ff,#6300ff,#6900ff,#6e00ff,#7400ff,#7a00ff,#8000ff)"></i>
<i class="r" style="top:496px;height:2px;left:144.90px;width:177.10px;background:linear-gradient(90deg,#0000ff,#0000ff,#0700ff,#0e00ff,#1400ff,#1b00ff,#2100ff,#2700ff,#2d00ff,#3300ff,#3900ff,#3f00ff,#4500ff,#4b00ff,#5100ff,#5700ff,#5c00ff,#6200ff,#6800ff,#6e00ff,#7300ff,#7900ff,#7f00ff)"></i>
<i class="r" style="top:498px;height:2px;left:144.90px;width:177.10px;background:linear-gradient(90deg,#0000ff,#0000ff,#0700ff,#0e00ff,#1400ff,#1b00ff,#2100ff,#2700ff,#2d00ff,#3300ff,#3900ff,#3f00ff,#4500ff,#4b00ff,#5000ff,#5600ff,#5c00ff,#6200ff,#6700ff,#6d00ff,#7300ff,#7800ff,#7e00ff)"></i>
<svg class="a" style="left:0;top:0" width="644" height="499"><path d="M-5,-5H649V504H-5Z M467.9,77.0L87.2,37.5L146.1,441.7Z" fill="#000" fill-opacity=".4" fill-rule="evenodd"/></svg>
</div>
<i class="sq" style="left:164.50px;top:122.40px;width:11px;height:11px;border:2px solid #000"></i>
<svg class="a" style="left:0;top:0" width="644" height="499"><path d="M79.8,29.3h13.2v13.2h-13.2zM97.7,36.3h13.2v13.2h-13.2zM101.1,39.3h13.2v13.2h-13.2zM105.1,43.4h13.2v13.2h-13.2zM140.1,50.1h13.2v13.2h-13.2zM153.6,50.3h13.2v13.2h-13.2zM154.9,37.8h13.2v13.2h-13.2zM163.0,37.8h13.2v13.2h-13.2zM173.0,39.1h13.2v13.2h-13.2zM181.2,41.6h13.2v13.2h-13.2zM181.2,43.4h13.2v13.2h-13.2zM191.2,40.3h13.2v13.2h-13.2zM215.6,45.9h13.2v13.2h-13.2zM218.7,45.3h13.2v13.2h-13.2zM226.2,44.7h13.2v13.2h-13.2zM258.1,47.8h13.2v13.2h-13.2zM260.6,48.4h13.2v13.2h-13.2zM247.5,54.7h13.2v13.2h-13.2zM285.0,61.6h13.2v13.2h-13.2zM85.2,69.7h13.2v13.2h-13.2zM113.6,67.2h13.2v13.2h-13.2zM101.7,83.5h13.2v13.2h-13.2zM114.8,82.2h13.2v13.2h-13.2zM119.2,97.5h13.2v13.2h-13.2zM175.5,74.1h13.2v13.2h-13.2zM191.8,83.7h13.2v13.2h-13.2zM156.8,93.5h13.2v13.2h-13.2zM149.9,101.6h13.2v13.2h-13.2zM153.0,112.3h13.2v13.2h-13.2zM171.8,111.6h13.2v13.2h-13.2zM185.5,111.6h13.2v13.2h-13.2zM91.1,107.4h13.2v13.2h-13.2zM91.7,113.5h13.2v13.2h-13.2zM208.1,88.1h13.2v13.2h-13.2zM206.8,93.5h13.2v13.2h-13.2zM203.1,104.1h13.2v13.2h-13.2zM223.1,84.7h13.2v13.2h-13.2zM228.1,77.2h13.2v13.2h-13.2zM230.6,82.9h13.2v13.2h-13.2zM233.7,84.7h13.2v13.2h-13.2zM240.6,85.4h13.2v13.2h-13.2zM245.6,69.7h13.2v13.2h-13.2zM249.4,76.0h13.2v13.2h-13.2zM253.1,69.1h13.2v13.2h-13.2zM255.6,83.5h13.2v13.2h-13.2zM260.6,72.2h13.2v13.2h-13.2zM278.2,69.7h13.2v13.2h-13.2zM280.7,91.6h13.2v13.2h-13.2zM268.2,107.9h13.2v13.2h-13.2zM313.9,55.0h13.2v13.2h-13.2zM350.5,57.2h13.2v13.2h-13.2zM414.9,73.1h13.2v13.2h-13.2zM461.0,70.0h13.2v13.2h-13.2zM457.5,73.5h13.2v13.2h-13.2zM454.4,77.9h13.2v13.2h-13.2zM448.4,83.5h13.2v13.2h-13.2zM359.0,92.2h13.2v13.2h-13.2zM343.4,111.0h13.2v13.2h-13.2zM397.8,111.0h13.2v13.2h-13.2zM92.3,120.2h13.2v13.2h-13.2zM95.4,137.7h13.2v13.2h-13.2zM103.9,139.6h13.2v13.2h-13.2zM98.6,153.3h13.2v13.2h-13.2zM99.2,163.4h13.2v13.2h-13.2zM119.0,153.7h13.2v13.2h-13.2zM141.4,152.7h13.2v13.2h-13.2zM141.4,159.2h13.2v13.2h-13.2zM172.4,155.5h13.2v13.2h-13.2zM219.0,139.9h13.2v13.2h-13.2zM289.8,141.4h13.2v13.2h-13.2zM214.3,169.4h13.2v13.2h-13.2zM180.9,190.3h13.2v13.2h-13.2zM238.5,203.9h13.2v13.2h-13.2zM105.1,200.9h13.2v13.2h-13.2zM315.5,148.3h13.2v13.2h-13.2zM351.7,153.0h13.2v13.2h-13.2zM109.2,229.8h13.2v13.2h-13.2zM139.9,240.8h13.2v13.2h-13.2zM275.0,229.8h13.2v13.2h-13.2zM291.3,261.7h13.2v13.2h-13.2zM126.9,319.5h13.2v13.2h-13.2zM138.9,434.3h13.2v13.2h-13.2z" fill="none" stroke="#fff" stroke-opacity=".9" stroke-width="1.5"/></svg>
<i class="c" style="left:89.9px;top:32.3px;background:#10e010"></i>
<i class="c" style="left:102.7px;top:36.5px;background:#508030"></i>
<i class="c" style="left:107.0px;top:39.4px;background:#60a040"></i>
<i class="c" style="left:110.2px;top:41.3px;background:#508030"></i>
<i class="c" style="left:143.0px;top:47.9px;background:#80a040"></i>
<i class="c" style="left:158.6px;top:49.0px;background:#607030"></i>
<i class="c" style="left:161.1px;top:40.7px;background:#a0b020"></i>
<i class="c" style="left:165.6px;top:40.9px;background:#a0a020"></i>
<i class="c" style="left:175.0px;top:41.7px;background:#f0f000"></i>
<i class="c" style="left:184.0px;top:43.2px;background:#a0a030"></i>
<i class="c" style="left:184.9px;top:46.3px;background:#a0a030"></i>
<i class="c" style="left:196.5px;top:45.0px;background:#c0b020"></i>
<i class="c" style="left:222.8px;top:48.8px;background:#c0a030"></i>
<i class="c" style="left:229.3px;top:47.9px;background:#e0b010"></i>
<i class="c" style="left:238.5px;top:48.8px;background:#f0c000"></i>
<i class="c" style="left:271.6px;top:51.5px;background:#e0a010"></i>
<i class="c" style="left:278.3px;top:53.4px;background:#f0b000"></i>
<i class="c" style="left:259.5px;top:58.8px;background:#b08030"></i>
<i class="c" style="left:302.9px;top:62.6px;background:#a06030"></i>
<i class="c" style="left:95.5px;top:72.8px;background:#208060"></i>
<i class="c" style="left:123.6px;top:69.7px;background:#70a060"></i>
<i class="c" style="left:118.9px;top:82.6px;background:#305030"></i>
<i class="c" style="left:107.9px;top:86.7px;background:#50a080"></i>
<i class="c" style="left:126.1px;top:102.2px;background:#80b090"></i>
<i class="c" style="left:180.6px;top:74.4px;background:#c0c080"></i>
<i class="c" style="left:201.2px;top:81.3px;background:#403020"></i>
<i class="c" style="left:160.9px;top:93.8px;background:#c0d0a0"></i>
<i class="c" style="left:154.0px;top:104.9px;background:#b0c0a0"></i>
<i class="c" style="left:158.4px;top:114.5px;background:#b0c0a0"></i>
<i class="c" style="left:176.9px;top:114.5px;background:#c0c0b0"></i>
<i class="c" style="left:191.9px;top:114.5px;background:#e0c0b0"></i>
<i class="c" style="left:182.1px;top:121.1px;background:#000000"></i>
<i class="c" style="left:100.2px;top:111.6px;background:#108070"></i>
<i class="c" style="left:96.4px;top:117.4px;background:#105040"></i>
<i class="c" style="left:101.0px;top:121.5px;background:#20a090"></i>
<i class="c" style="left:222.2px;top:89.7px;background:#f0c0a0"></i>
<i class="c" style="left:219.1px;top:100.7px;background:#f0c0a0"></i>
<i class="c" style="left:212.8px;top:107.9px;background:#f0c0b0"></i>
<i class="c" style="left:233.5px;top:87.0px;background:#c09070"></i>
<i class="c" style="left:241.2px;top:78.5px;background:#c09070"></i>
<i class="c" style="left:240.3px;top:86.3px;background:#d09070"></i>
<i class="c" style="left:241.6px;top:88.8px;background:#b08060"></i>
<i class="c" style="left:248.2px;top:83.2px;background:#e0a080"></i>
<i class="c" style="left:251.0px;top:88.5px;background:#d09070"></i>
<i class="c" style="left:261.0px;top:71.6px;background:#906040"></i>
<i class="c" style="left:261.0px;top:80.1px;background:#d09070"></i>
<i class="c" style="left:269.1px;top:81.0px;background:#e0a080"></i>
<i class="c" style="left:271.9px;top:87.0px;background:#f0a080"></i>
<i class="c" style="left:273.5px;top:68.8px;background:#805030"></i>
<i class="c" style="left:286.0px;top:73.2px;background:#503020"></i>
<i class="c" style="left:298.9px;top:72.8px;background:#d08050"></i>
<i class="c" style="left:282.9px;top:96.7px;background:#e08070"></i>
<i class="c" style="left:275.1px;top:111.8px;background:#d08080"></i>
<i class="c" style="left:335.0px;top:58.8px;background:#e08010"></i>
<i class="c" style="left:374.6px;top:62.8px;background:#f08010"></i>
<i class="c" style="left:435.0px;top:76.7px;background:#e04030"></i>
<i class="c" style="left:475.4px;top:72.8px;background:#ff1010"></i>
<i class="c" style="left:471.0px;top:80.1px;background:#b01030"></i>
<i class="c" style="left:467.2px;top:84.1px;background:#c01040"></i>
<i class="c" style="left:372.1px;top:97.0px;background:#c05060"></i>
<i class="c" style="left:375.9px;top:112.0px;background:#602030"></i>
<i class="c" style="left:419.1px;top:112.0px;background:#c04060"></i>
<i class="c" style="left:99.9px;top:135.9px;background:#00f0f0"></i>
<i class="c" style="left:109.6px;top:143.0px;background:#40a0a0"></i>
<i class="c" style="left:103.9px;top:153.9px;background:#108080"></i>
<i class="c" style="left:123.6px;top:156.8px;background:#5090a0"></i>
<i class="c" style="left:102.4px;top:166.8px;background:#104050"></i>
<i class="c" style="left:146.1px;top:155.6px;background:#607080"></i>
<i class="c" style="left:144.6px;top:160.9px;background:#80a0b0"></i>
<i class="c" style="left:178.0px;top:160.9px;background:#807090"></i>
<i class="c" style="left:229.1px;top:145.9px;background:#c08090"></i>
<i class="c" style="left:227.0px;top:179.3px;background:#503040"></i>
<i class="c" style="left:186.9px;top:198.1px;background:#706090"></i>
<i class="c" style="left:109.6px;top:201.9px;background:#2080a0"></i>
<i class="c" style="left:170.3px;top:126.2px;background:#303030"></i>
<i class="c" style="left:170.9px;top:129.3px;background:#202020"></i>
<i class="c" style="left:317.1px;top:146.8px;background:#602040"></i>
<i class="c" style="left:333.9px;top:153.1px;background:#c05080"></i>
<i class="c" style="left:373.0px;top:156.8px;background:#903060"></i>
<i class="c" style="left:110.8px;top:233.9px;background:#104050"></i>
<i class="c" style="left:141.8px;top:245.6px;background:#5060a0"></i>
<i class="c" style="left:250.0px;top:219.0px;background:#503050"></i>
<i class="c" style="left:286.0px;top:244.1px;background:#703070"></i>
<i class="c" style="left:297.0px;top:268.1px;background:#ff00ff"></i>
<i class="c" style="left:125.9px;top:327.9px;background:#203050"></i>
<i class="c" style="left:134.9px;top:426.1px;background:#1010e0"></i>
<div class="a" style="left:456.5px;top:300.6px;width:180.8px;height:137.6px;border:2px solid #868686;background:linear-gradient(127deg,#a8ff00 0%,#d0ff10 25%,#ffff1c 50%,#ffd808 75%,#ffa800 100%);overflow:hidden">
<svg class="a" style="left:0;top:0" width="180.8" height="137.6"><path d="M0,13.7L180.8,123.1V0H0Z" fill="#000" fill-opacity=".4"/></svg>
<i class="sq" style="left:82.6px;top:60.3px;width:12.4px;height:12.4px;border-width:1px"></i>
<i class="c" style="left:88.6px;top:71.6px;width:6.6px;height:6.6px;background:#ffff10"></i>
</div>
<div class="a" style="left:369.7px;top:443.5px;width:274.3px;height:55.5px;background:#333"></div>
</div>
<div class="t" style="left:1535.0px;top:501.3px;font-size:20.2px;color:#f0f0f0;">RGB Triplet: 255, 255, 0</div>
<div class="t" style="left:1580.6px;top:528.7px;font-size:20.2px;color:#f0f0f0;transform:scaleX(1.0168);">deltaE: 1,4</div>
<div class="a" style="left:1157.5px;top:51.7px;width:6px;height:1.5px;background:#d4d4d4"></div>
<div class="t" style="left:1135.4px;top:45.3px;font-size:15px;color:#dcdcdc;">0,6</div>
<div class="a" style="left:1157.5px;top:101.7px;width:6px;height:1.5px;background:#d4d4d4"></div>
<div class="t" style="left:1127.1px;top:95.4px;font-size:15px;color:#dcdcdc;">0,55</div>
<div class="a" style="left:1157.5px;top:151.6px;width:6px;height:1.5px;background:#d4d4d4"></div>
<div class="t" style="left:1135.4px;top:145.6px;font-size:15px;color:#dcdcdc;">0,5</div>
<div class="a" style="left:1157.5px;top:201.6px;width:6px;height:1.5px;background:#d4d4d4"></div>
<div class="t" style="left:1127.1px;top:195.7px;font-size:15px;color:#dcdcdc;">0,45</div>
<div class="a" style="left:1157.5px;top:251.5px;width:6px;height:1.5px;background:#d4d4d4"></div>
<div class="t" style="left:1135.4px;top:245.9px;font-size:15px;color:#dcdcdc;">0,4</div>
<div class="a" style="left:1157.5px;top:301.4px;width:6px;height:1.5px;background:#d4d4d4"></div>
<div class="t" style="left:1127.1px;top:296.0px;font-size:15px;color:#dcdcdc;">0,35</div>
<div class="a" style="left:1157.5px;top:351.4px;width:6px;height:1.5px;background:#d4d4d4"></div>
<div class="t" style="left:1135.4px;top:346.1px;font-size:15px;color:#dcdcdc;">0,3</div>
<div class="a" style="left:1157.5px;top:401.4px;width:6px;height:1.5px;background:#d4d4d4"></div>
<div class="t" style="left:1127.1px;top:396.3px;font-size:15px;color:#dcdcdc;">0,25</div>
<div class="a" style="left:1157.5px;top:451.3px;width:6px;height:1.5px;background:#d4d4d4"></div>
<div class="t" style="left:1135.4px;top:446.4px;font-size:15px;color:#dcdcdc;">0,2</div>
<div class="a" style="left:1157.5px;top:501.2px;width:6px;height:1.5px;background:#d4d4d4"></div>
<div class="t" style="left:1127.1px;top:496.6px;font-size:15px;color:#dcdcdc;">0,15</div>
<div class="a" style="left:1157.5px;top:551.2px;width:6px;height:1.5px;background:#d4d4d4"></div>
<div class="t" style="left:1135.4px;top:546.7px;font-size:15px;color:#dcdcdc;">0,1</div>
<div class="a" style="left:1162.8px;top:551px;width:2px;height:7px;background:#dcdcdc"></div>
<div class="t" style="left:1147.7px;top:561.3px;font-size:15px;color:#dcdcdc;">0,05</div>
<div class="a" style="left:1221.3px;top:551px;width:2px;height:7px;background:#dcdcdc"></div>
<div class="t" style="left:1210.4px;top:561.3px;font-size:15px;color:#dcdcdc;">0,1</div>
<div class="a" style="left:1279.7px;top:551px;width:2px;height:7px;background:#dcdcdc"></div>
<div class="t" style="left:1264.8px;top:561.3px;font-size:15px;color:#dcdcdc;">0,15</div>
<div class="a" style="left:1338.2px;top:551px;width:2px;height:7px;background:#dcdcdc"></div>
<div class="t" style="left:1327.6px;top:561.3px;font-size:15px;color:#dcdcdc;">0,2</div>
<div class="a" style="left:1396.6px;top:551px;width:2px;height:7px;background:#dcdcdc"></div>
<div class="t" style="left:1382.0px;top:561.3px;font-size:15px;color:#dcdcdc;">0,25</div>
<div class="a" style="left:1455.1px;top:551px;width:2px;height:7px;background:#dcdcdc"></div>
<div class="t" style="left:1444.7px;top:561.3px;font-size:15px;color:#dcdcdc;">0,3</div>
<div class="a" style="left:1513.6px;top:551px;width:2px;height:7px;background:#dcdcdc"></div>
<div class="t" style="left:1499.1px;top:561.3px;font-size:15px;color:#dcdcdc;">0,35</div>
<div class="a" style="left:1572.0px;top:551px;width:2px;height:7px;background:#dcdcdc"></div>
<div class="t" style="left:1561.9px;top:561.3px;font-size:15px;color:#dcdcdc;">0,4</div>
<div class="a" style="left:1630.5px;top:551px;width:2px;height:7px;background:#dcdcdc"></div>
<div class="t" style="left:1616.3px;top:561.3px;font-size:15px;color:#dcdcdc;">0,45</div>
<div class="a" style="left:1688.9px;top:551px;width:2px;height:7px;background:#dcdcdc"></div>
<div class="t" style="left:1679.0px;top:561.3px;font-size:15px;color:#dcdcdc;">0,5</div>
<div class="a" style="left:1747.4px;top:551px;width:2px;height:7px;background:#dcdcdc"></div>
<div class="t" style="left:1733.4px;top:561.3px;font-size:15px;color:#dcdcdc;">0,55</div>
<div class="a" style="left:115px;top:603px;width:1703px;height:236px;background:#000;overflow:hidden">
<div class="sw" style="left:18.3px;top:9px;background:#f8f8f8"><i style="background:#fff5f7"></i></div>
<div class="sw" style="left:88.4px;top:9px;background:#dedede"><i style="background:#e6dadc"></i></div>
<div class="sw" style="left:158.4px;top:9px;background:#c4c4c4"><i style="background:#c9c3c4"></i></div>
<div class="sw" style="left:228.5px;top:9px;background:#b7b7b7"><i style="background:#bbb5b7"></i></div>
<div class="sw" style="left:298.6px;top:9px;background:#ababab"><i style="background:#afaaac"></i></div>
<div class="sw" style="left:368.6px;top:9px;background:#9d9d9d"><i style="background:#a09b9d"></i></div>
<div class="sw" style="left:438.7px;top:9px;background:#8f8f8f"><i style="background:#938e90"></i></div>
<div class="sw" style="left:508.8px;top:9px;background:#777777"><i style="background:#747274"></i></div>
<div class="sw" style="left:578.9px;top:9px;background:#6c6c6c"><i style="background:#6a686a"></i></div>
<div class="sw" style="left:648.9px;top:9px;background:#5f5f5f"><i style="background:#5d595c"></i></div>
<div class="sw" style="left:719.0px;top:9px;background:#545454"><i style="background:#514e50"></i></div>
<div class="sw" style="left:789.1px;top:9px;background:#4a4a4a"><i style="background:#474547"></i></div>
<div class="sw" style="left:859.1px;top:9px;background:#373737"><i style="background:#312f31"></i></div>
<div class="sw" style="left:929.2px;top:9px;background:#2e2e2e"><i style="background:#262626"></i></div>
<div class="sw" style="left:999.3px;top:9px;background:#000000"><i style="background:#000000"></i></div>
<div class="sw" style="left:1069.3px;top:9px;background:#931f56"><i style="background:#920f52"></i></div>
<div class="sw" style="left:1139.4px;top:9px;background:#4d2e48"><i style="background:#4a2845"></i></div>
<div class="sw" style="left:1209.5px;top:9px;background:#dbd3c4"><i style="background:#ded0c3"></i></div>
<div class="sw" style="left:1279.6px;top:9px;background:#724026"><i style="background:#703820"></i></div>
<div class="sw" style="left:1349.6px;top:9px;background:#cb8b6a"><i style="background:#d08562"></i></div>
<div class="sw" style="left:1419.7px;top:9px;background:#5b7086"><i style="background:#5b7086"></i></div>
<div class="sw" style="left:1489.8px;top:9px;background:#586020"><i style="background:#545c1c"></i></div>
<div class="sw" style="left:1559.8px;top:9px;background:#807797"><i style="background:#82759a"></i></div>
<div class="sw" style="left:1629.9px;top:9px;background:#6bb893"><i style="background:#72b594"></i></div>
<div class="sw" style="left:1700px;top:9px;background:#dfa274"><i style="background:#e3a070"></i></div>
<div class="a" style="left:0;top:221px;width:1703px;height:15px;background:#646464"></div>
<div class="a" style="left:1px;top:222px;width:15px;height:14px;background:#7c7c7c"></div>
<div class="a" style="left:1687px;top:222px;width:15px;height:14px;background:#7c7c7c"></div>
<svg class="a" style="left:0;top:221px" width="1703" height="15"><path d="M5,8L11,3V13Z" fill="#3a3a3a"/><path d="M1698,8L1692,3V13Z" fill="#3a3a3a"/></svg>
<div class="a" style="left:19px;top:222.5px;width:393px;height:16px;border-radius:7px;background:#4b4b4b"></div>
</div>
<div class="t" style="left:146.5px;top:791.3px;font-size:12.2px;color:#f4f4f4;transform:scaleX(1.0999);-webkit-text-stroke:.35px #f4f4f4;">White</div>
<div class="t" style="left:227.2px;top:791.3px;font-size:12.2px;color:#f4f4f4;-webkit-text-stroke:.35px #f4f4f4;">6J</div>
<div class="t" style="left:296.6px;top:791.3px;font-size:12.2px;color:#f4f4f4;-webkit-text-stroke:.35px #f4f4f4;">5F</div>
<div class="t" style="left:368.7px;top:791.3px;font-size:12.2px;color:#f4f4f4;-webkit-text-stroke:.35px #f4f4f4;">6I</div>
<div class="t" style="left:436.4px;top:791.3px;font-size:12.2px;color:#f4f4f4;-webkit-text-stroke:.35px #f4f4f4;">6K</div>
<div class="t" style="left:505.8px;top:791.3px;font-size:12.2px;color:#f4f4f4;-webkit-text-stroke:.35px #f4f4f4;">5G</div>
<div class="t" style="left:576.2px;top:791.3px;font-size:12.2px;color:#f4f4f4;-webkit-text-stroke:.35px #f4f4f4;">6H</div>
<div class="t" style="left:646.3px;top:791.3px;font-size:12.2px;color:#f4f4f4;-webkit-text-stroke:.35px #f4f4f4;">5H</div>
<div class="t" style="left:716.7px;top:791.3px;font-size:12.2px;color:#f4f4f4;-webkit-text-stroke:.35px #f4f4f4;">7K</div>
<div class="t" style="left:786.1px;top:791.3px;font-size:12.2px;color:#f4f4f4;-webkit-text-stroke:.35px #f4f4f4;">6G</div>
<div class="t" style="left:859.2px;top:791.3px;font-size:12.2px;color:#f4f4f4;-webkit-text-stroke:.35px #f4f4f4;">5I</div>
<div class="t" style="left:927.3px;top:791.3px;font-size:12.2px;color:#f4f4f4;-webkit-text-stroke:.35px #f4f4f4;">6F</div>
<div class="t" style="left:997.0px;top:791.3px;font-size:12.2px;color:#f4f4f4;-webkit-text-stroke:.35px #f4f4f4;">8K</div>
<div class="t" style="left:1068.1px;top:791.3px;font-size:12.2px;color:#f4f4f4;-webkit-text-stroke:.35px #f4f4f4;">5J</div>
<div class="t" style="left:1127.8px;top:791.3px;font-size:12.2px;color:#f4f4f4;transform:scaleX(1.1229);-webkit-text-stroke:.35px #f4f4f4;">Black</div>
<div class="t" style="left:1207.2px;top:791.3px;font-size:12.2px;color:#f4f4f4;-webkit-text-stroke:.35px #f4f4f4;">2B</div>
<div class="t" style="left:1276.9px;top:791.3px;font-size:12.2px;color:#f4f4f4;-webkit-text-stroke:.35px #f4f4f4;">2C</div>
<div class="t" style="left:1347.0px;top:791.3px;font-size:12.2px;color:#f4f4f4;-webkit-text-stroke:.35px #f4f4f4;">2D</div>
<div class="t" style="left:1417.4px;top:791.3px;font-size:12.2px;color:#f4f4f4;-webkit-text-stroke:.35px #f4f4f4;">2E</div>
<div class="t" style="left:1487.8px;top:791.3px;font-size:12.2px;color:#f4f4f4;-webkit-text-stroke:.35px #f4f4f4;">2F</div>
<div class="t" style="left:1556.9px;top:791.3px;font-size:12.2px;color:#f4f4f4;-webkit-text-stroke:.35px #f4f4f4;">2G</div>
<div class="t" style="left:1627.3px;top:791.3px;font-size:12.2px;color:#f4f4f4;-webkit-text-stroke:.35px #f4f4f4;">2H</div>
<div class="t" style="left:1700.1px;top:791.3px;font-size:12.2px;color:#f4f4f4;-webkit-text-stroke:.35px #f4f4f4;">2I</div>
<div class="t" style="left:1768.8px;top:791.3px;font-size:12.2px;color:#f4f4f4;-webkit-text-stroke:.35px #f4f4f4;">2J</div>
<div class="t" style="left:119.3px;top:668.3px;font-size:12.4px;color:#f0f0f0;-webkit-text-stroke:.3px #f0f0f0;transform:rotate(-90deg) scaleX(1.053)">Actual</div>
<div class="t" style="left:119.3px;top:764.9px;font-size:12.4px;color:#f0f0f0;-webkit-text-stroke:.3px #f0f0f0;transform:rotate(-90deg) scaleX(1.045)">Target</div>
</body></html>
